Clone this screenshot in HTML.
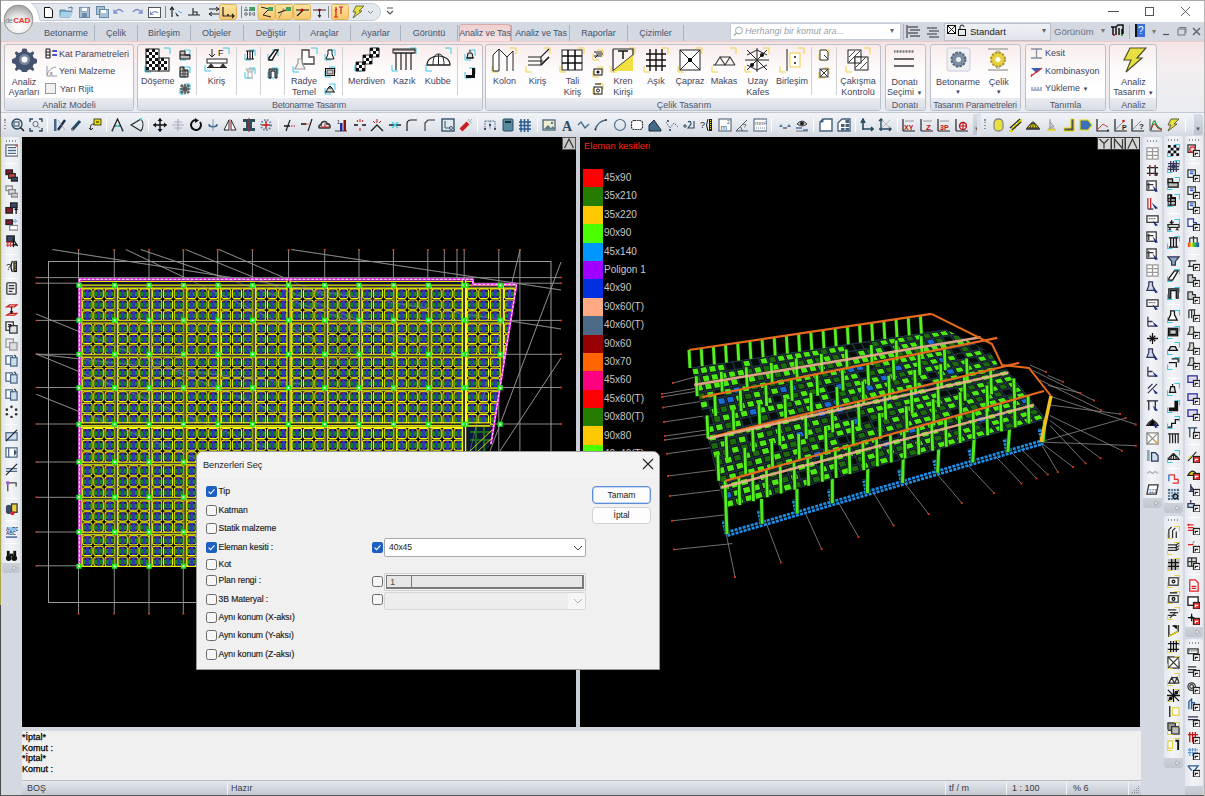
<!DOCTYPE html>
<html><head><meta charset="utf-8">
<style>
*{box-sizing:border-box;margin:0;padding:0}
html,body{width:1205px;height:796px;overflow:hidden;background:#d3d8e1;font-family:"Liberation Sans",sans-serif;font-size:11px;color:#3b3b58}
.a{position:absolute}
#topstrip{left:0;top:0;width:1205px;height:1px;background:#a8a8a8}
#title{left:0;top:1px;width:1205px;height:21px;background:#fff}
#tabs{left:0;top:22px;width:1205px;height:19px;background:#d3d8e1}
#ribbon{left:0;top:41px;width:1205px;height:72px;background:linear-gradient(#f6e4e4,#f4eef0 35%,#e9ecf1);border-top:1px solid #efc9c9;border-bottom:1px solid #c4c9d1}
#tbrow{left:0;top:113px;width:1205px;height:24px;background:linear-gradient(#f1f3f7,#e2e6ec 60%,#d3d8e0)}
#vpL{left:22px;top:137px;width:554px;height:590px;background:#000;overflow:hidden}
#split{left:576px;top:137px;width:4px;height:590px;background:#c9ced7}
#vpR{left:580px;top:137px;width:560px;height:590px;background:#000;overflow:hidden}
#cmd{left:22px;top:731px;width:1119px;height:49px;background:#f0f0f0;font-size:9px;color:#000;line-height:10.6px;padding-top:1px;padding-left:0px;-webkit-text-stroke:0.25px #000}
#status{left:22px;top:780px;width:1119px;height:15px;background:linear-gradient(#e4e7ed,#c3c8d0);border-top:1px solid #b7bcc4;font-size:10px;color:#333}
#leftborder{left:0;top:0;width:1px;height:796px;background:linear-gradient(#8a8a8a 0 137px,#aaa848 137px 605px,#4a4a4a 605px)}
#botborder{left:0;top:795px;width:1205px;height:1px;background:#5a5a5a}
</style></head><body>
<div class="a" id="topstrip"></div>
<div class="a" id="title"></div>
<div class="a" id="tabs"></div>
<svg class="a" style="left:3px;top:4px" width="31" height="31" viewBox="0 0 31 31"><defs><radialGradient id="lg" cx="0.5" cy="0.75" r="0.7"><stop offset="0" stop-color="#fff"/><stop offset="0.55" stop-color="#e8e8e8"/><stop offset="1" stop-color="#a8a8a8"/></radialGradient></defs><circle cx="15.5" cy="15.5" r="14.4" fill="url(#lg)" stroke="#8c8c8c" stroke-width="0.9"/><text x="2.3" y="18.6" font-family="Liberation Sans" font-size="7.2" fill="#7a7a7a" letter-spacing="-0.6">de</text><text x="10.3" y="18.8" font-family="Liberation Sans" font-weight="bold" font-size="8" fill="#e83434" letter-spacing="-0.2">CAD</text></svg>
<svg class="a" style="left:30px;top:2px" width="355" height="19" viewBox="0 0 355 19"><path d="M1.5 1.5H342a8.5 8.5 0 0 1 0 17H10C9 12 7 5 1.5 1.5Z" fill="#e4e9f0" stroke="#c4cbd6" stroke-width="1"/></svg>
<svg class="a" style="left:386px;top:7px" width="8" height="8" viewBox="0 0 8 8"><path d="M1 1H7M1 4L4 7L7 4" stroke="#555" stroke-width="1.2" fill="none"/></svg>
<svg class="a" style="left:40px;top:4px" width="345" height="16" viewBox="40 4 345 16"><defs><linearGradient id="qh" x1="0" y1="0" x2="0" y2="1"><stop offset="0" stop-color="#fde4a4"/><stop offset="1" stop-color="#f8c66a"/></linearGradient></defs>
<path d="M44.5 7.5H50L52.5 10V17.5H44.5Z" fill="#fff" stroke="#111" stroke-width="1"/>
<path d="M60 10H65L66 11H72L70 17H60Z" fill="#7aa8c8" stroke="#4a7898" stroke-width="0.8"/><path d="M61 12H73L71 17H60Z" fill="#a8d0e8"/><path d="M68 8L72 7V10" stroke="#4a7898" fill="none"/>
<rect x="79.5" y="7.5" width="10" height="10" fill="#a8c0d4" stroke="#6a8aa8"/><rect x="81.5" y="7.5" width="6" height="4" fill="#fff" stroke="#6a8aa8" stroke-width="0.6"/><rect x="82" y="13" width="5" height="4.5" fill="#6a8aa8"/>
<rect x="96.5" y="6.5" width="8" height="8" fill="#a8c0d4" stroke="#6a8aa8"/><rect x="99.5" y="9.5" width="9" height="8" fill="#a8c0d4" stroke="#6a8aa8"/><rect x="101" y="10" width="5" height="3" fill="#fff"/>
<path d="M115 12Q119 7 123 12" stroke="#7a88d0" stroke-width="1.3" fill="none"/><path d="M114 9.5V13H117.5" stroke="#7a88d0" stroke-width="1.3" fill="none"/>
<path d="M133 12Q137 7 141 12" stroke="#7a88d0" stroke-width="1.3" fill="none"/><path d="M142 9.5V13H138.5" stroke="#7a88d0" stroke-width="1.3" fill="none"/>
<rect x="148.5" y="7.5" width="12" height="10" fill="#fff" stroke="#555"/><path d="M151 14Q154 10 158 13" stroke="#7a88d0" stroke-width="1.2" fill="none"/><path d="M150.5 11.5V14.5H153.5" stroke="#7a88d0" stroke-width="1.1" fill="none"/>
<path d="M165.5 6V18" stroke="#888"/>
<path d="M172 17V8M170 10L172 7L174 10" stroke="#222" stroke-width="1.2" fill="none"/><path d="M175 12L179 16L177 16.5Z" fill="#222"/><path d="M178 11L182 13" stroke="#6af"/>
<path d="M188 15H200M193 8V15M193 12H197V15" stroke="#222" stroke-width="1.1" fill="none"/>
<path d="M209 9H219M209 14H219M216 7L219 9L216 11M212 12L209 14L212 16" stroke="#222" stroke-width="1" fill="none"/>
<rect x="219.5" y="4.5" width="17" height="15" rx="2" fill="url(#qh)" stroke="#e2b458"/><path d="M223 7V16H234M232 14L234 16L232 18" stroke="#222" stroke-width="1.2" fill="none"/><circle cx="228" cy="15" r="1" fill="#222"/>
<path d="M241.5 6V18" stroke="#888"/>
<path d="M244 10H255M244 14H255M246 7V17M250 7V17M254 7V17" stroke="#333" stroke-width="0.9" stroke-dasharray="1.5 1"/><rect x="250" y="7" width="5" height="4" fill="#40a060"/>
<rect x="258" y="4.5" width="17" height="15" rx="2" fill="url(#qh)" stroke="#e2b458"/><path d="M261 7L269 9L263 15L271 17" stroke="#222" fill="none"/><rect x="268" y="7" width="5" height="4" fill="#40a060"/>
<rect x="275.5" y="4.5" width="17" height="15" rx="2" fill="url(#qh)" stroke="#e2b458"/><path d="M278 13L286 10" stroke="#222" stroke-width="1.3"/><path d="M279 18L284 8" stroke="#555" stroke-width="0.6"/><rect x="286" y="7" width="5" height="4" fill="#40a060"/>
<rect x="293.5" y="4.5" width="17" height="15" rx="2" fill="url(#qh)" stroke="#e2b458"/><path d="M296 10H309" stroke="#333" stroke-width="1.2"/><path d="M297 16L303 10" stroke="#222" stroke-width="1.2"/><circle cx="302" cy="10" r="1.5" fill="#c00"/>
<path d="M313 10H326M319.5 10V17M318 15L319.5 17L321 15" stroke="#333" stroke-width="1.1" fill="none"/><circle cx="319.5" cy="10" r="1.3" fill="#900"/>
<path d="M328.5 6V18" stroke="#888"/>
<rect x="331.5" y="4.5" width="17" height="15" rx="2" fill="url(#qh)" stroke="#e2b458"/><path d="M336 7V17M334 17H338M341 7V14M339 7H343M335 11L337 9" stroke="#d02020" stroke-width="1.2" fill="none"/>
<path d="M356 6H364L359 11H362L353 18L356 12H353Z" fill="#e8e040" stroke="#505030" stroke-width="0.8"/>
<path d="M368 11L370.5 13.5L373 11" fill="none" stroke="#888"/>
</svg>

<svg class="a" style="left:1105px;top:4px" width="90" height="16" viewBox="0 0 90 16"><path d="M3 7.5H14" stroke="#555" stroke-width="1"/><rect x="40.5" y="3.5" width="8" height="8" fill="none" stroke="#555" stroke-width="1"/><path d="M76 3L85 12M85 3L76 12" stroke="#555" stroke-width="0.9"/></svg>


<div class="a" style="left:459px;top:23.5px;width:52px;height:18px;background:linear-gradient(#f0cfcf,#f8e4e4);border:1px solid #d9aaaa;border-bottom:none;border-radius:3px 3px 0 0"></div>
<div class="a" style="left:0;top:23.5px;height:18px;font-size:9px;color:#47526c;line-height:18px;white-space:nowrap"><span class="a" style="left:26px;width:80px;text-align:center;">Betonarme</span><span class="a" style="left:76px;width:80px;text-align:center;">Çelik</span><span class="a" style="left:124px;width:80px;text-align:center;">Birleşim</span><span class="a" style="left:176.5px;width:80px;text-align:center;">Objeler</span><span class="a" style="left:231px;width:80px;text-align:center;">Değiştir</span><span class="a" style="left:284.5px;width:80px;text-align:center;">Araçlar</span><span class="a" style="left:335.5px;width:80px;text-align:center;">Ayarlar</span><span class="a" style="left:389px;width:80px;text-align:center;">Görüntü</span><span class="a" style="left:445px;width:80px;text-align:center;letter-spacing:-0.1px;">Analiz ve Tas</span><span class="a" style="left:501px;width:80px;text-align:center;letter-spacing:-0.1px;">Analiz ve Tas</span><span class="a" style="left:558.6px;width:80px;text-align:center;">Raporlar</span><span class="a" style="left:615.6px;width:80px;text-align:center;">Çizimler</span></div>
<div class="a" style="left:94px;top:25px;width:1px;height:16px;background:#aab2be"></div>
<div class="a" style="left:137px;top:25px;width:1px;height:16px;background:#aab2be"></div>
<div class="a" style="left:190px;top:25px;width:1px;height:16px;background:#aab2be"></div>
<div class="a" style="left:243px;top:25px;width:1px;height:16px;background:#aab2be"></div>
<div class="a" style="left:299px;top:25px;width:1px;height:16px;background:#aab2be"></div>
<div class="a" style="left:350px;top:25px;width:1px;height:16px;background:#aab2be"></div>
<div class="a" style="left:400px;top:25px;width:1px;height:16px;background:#aab2be"></div>
<div class="a" style="left:457px;top:25px;width:1px;height:16px;background:#aab2be"></div>
<div class="a" style="left:511px;top:25px;width:1px;height:16px;background:#aab2be"></div>
<div class="a" style="left:569px;top:25px;width:1px;height:16px;background:#aab2be"></div>
<div class="a" style="left:627px;top:25px;width:1px;height:16px;background:#aab2be"></div>
<div class="a" style="left:683px;top:25px;width:1px;height:16px;background:#aab2be"></div>
<div class="a" style="left:730px;top:23px;width:171px;height:17px;background:#fff;border:1px solid #c6ccd6"></div>
<svg class="a" style="left:733px;top:26px" width="11" height="11" viewBox="0 0 11 11"><circle cx="6" cy="4.5" r="3.5" fill="none" stroke="#9aa" stroke-width="1"/><path d="M3.5 7L1 9.5" stroke="#9aa" stroke-width="1.2"/></svg>
<div class="a" style="left:745px;top:25px;font-size:9px;font-style:italic;color:#9aa0aa;line-height:13px">Herhangi bir komut ara...</div>
<div class="a" style="left:890px;top:26px;font-size:8px;color:#666">▾</div>
<div class="a" style="left:903px;top:24px;width:1px;height:16px;background:#aab2be"></div>
<svg class="a" style="left:906px;top:24px" width="36" height="16" viewBox="0 0 36 16"><path d="M2 3H12M4 6H14M2 9H12M4 12H14M1 1V14" stroke="#222" stroke-width="1"/><path d="M21 4H31M23 7H33M21 10H31M23 13H33" stroke="#333" stroke-width="1"/></svg>
<div class="a" style="left:944px;top:22.5px;width:107px;height:18px;background:linear-gradient(#eef1f5,#dfe3e9);border:1px solid #b9c0ca"></div>
<svg class="a" style="left:946px;top:24px" width="22" height="13" viewBox="0 0 22 13"><rect x="1.5" y="1.5" width="8" height="8" fill="#fff" stroke="#111"/><path d="M1.5 1.5L9.5 9.5M9.5 1.5L1.5 9.5" stroke="#111"/><rect x="12.5" y="5.5" width="7" height="6" fill="none" stroke="#111"/><path d="M14 5.5V3a2 2 0 0 1 4 0" stroke="#111" fill="none"/></svg>
<div class="a" style="left:970px;top:25px;font-size:9.5px;color:#1a1a1a;line-height:13px">Standart</div>
<div class="a" style="left:1042px;top:26px;font-size:8px;color:#666">▾</div>
<div class="a" style="left:1054px;top:25px;font-size:9.5px;color:#6c7486;line-height:13px">Görünüm</div>
<div class="a" style="left:1101px;top:26px;font-size:8px;color:#777">▾</div>
<svg class="a" style="left:1110px;top:24px" width="16" height="13" viewBox="0 0 16 13"><path d="M1 3H6L8 1H13V10M3 3V11M6 3V11M9 4V11M12 5V11" stroke="#111" stroke-width="1.5" fill="none"/><circle cx="4" cy="11" r="1" fill="#c00"/><circle cx="12" cy="11" r="1" fill="#0a0"/></svg>
<div class="a" style="left:1129px;top:25px;width:1px;height:14px;background:#aab2be"></div>
<div class="a" style="left:1135px;top:24px;width:10px;height:13px;background:#3a6ee0;border-left:2px solid #111"></div>
<div class="a" style="left:1138px;top:24px;font-size:10px;color:#fff;line-height:13px">?</div>
<div class="a" style="left:1152px;top:27px;font-size:8px;color:#777">▾</div>
<svg class="a" style="left:1162px;top:25px" width="40" height="14" viewBox="0 0 40 14"><path d="M1 9.5H7" stroke="#555" stroke-width="1.2"/><rect x="16" y="4" width="7" height="6" fill="none" stroke="#777"/><path d="M17 2.5H24V8" stroke="#777" fill="none"/><path d="M31 3L38 10M38 3L31 10" stroke="#666" stroke-width="1.5"/></svg>

<div class="a" id="ribbon"></div>
<div class="a" style="left:4px;top:43.5px;width:130px;height:67px;border:1px solid #bcc1c9;border-radius:3px;background:linear-gradient(#f9ecec,#fdfafa 35%,#ffffff 70%);overflow:hidden"><div class="a" style="left:0;bottom:0;width:100%;height:12px;background:linear-gradient(#e9ecf1,#d9dee6)"></div></div>
<div class="a" style="left:9.0px;top:98.5px;width:120px;text-align:center;font-size:9px;line-height:12px;color:#4e566c;">Analiz Modeli</div>
<div class="a" style="left:137px;top:43.5px;width:345.5px;height:67px;border:1px solid #bcc1c9;border-radius:3px;background:linear-gradient(#f9ecec,#fdfafa 35%,#ffffff 70%);overflow:hidden"><div class="a" style="left:0;bottom:0;width:100%;height:12px;background:linear-gradient(#e9ecf1,#d9dee6)"></div></div>
<div class="a" style="left:249px;top:98.5px;width:120px;text-align:center;font-size:9px;line-height:12px;color:#4e566c;letter-spacing:-0.25px;">Betonarme Tasarım</div>
<div class="a" style="left:485px;top:43.5px;width:396px;height:67px;border:1px solid #bcc1c9;border-radius:3px;background:linear-gradient(#f9ecec,#fdfafa 35%,#ffffff 70%);overflow:hidden"><div class="a" style="left:0;bottom:0;width:100%;height:12px;background:linear-gradient(#e9ecf1,#d9dee6)"></div></div>
<div class="a" style="left:624px;top:98.5px;width:120px;text-align:center;font-size:9px;line-height:12px;color:#4e566c;">Çelik Tasarım</div>
<div class="a" style="left:884.5px;top:43.5px;width:41.5px;height:67px;border:1px solid #bcc1c9;border-radius:3px;background:linear-gradient(#f9ecec,#fdfafa 35%,#ffffff 70%);overflow:hidden"><div class="a" style="left:0;bottom:0;width:100%;height:12px;background:linear-gradient(#e9ecf1,#d9dee6)"></div></div>
<div class="a" style="left:845px;top:98.5px;width:120px;text-align:center;font-size:9px;line-height:12px;color:#4e566c;">Donatı</div>
<div class="a" style="left:930px;top:43.5px;width:91px;height:67px;border:1px solid #bcc1c9;border-radius:3px;background:linear-gradient(#f9ecec,#fdfafa 35%,#ffffff 70%);overflow:hidden"><div class="a" style="left:0;bottom:0;width:100%;height:12px;background:linear-gradient(#e9ecf1,#d9dee6)"></div></div>
<div class="a" style="left:915px;top:98.5px;width:120px;text-align:center;font-size:9px;line-height:12px;color:#4e566c;letter-spacing:-0.25px;">Tasarım Parametreleri</div>
<div class="a" style="left:1024.5px;top:43.5px;width:81.5px;height:67px;border:1px solid #bcc1c9;border-radius:3px;background:linear-gradient(#f9ecec,#fdfafa 35%,#ffffff 70%);overflow:hidden"><div class="a" style="left:0;bottom:0;width:100%;height:12px;background:linear-gradient(#e9ecf1,#d9dee6)"></div></div>
<div class="a" style="left:1005.5px;top:98.5px;width:120px;text-align:center;font-size:9px;line-height:12px;color:#4e566c;">Tanımla</div>
<div class="a" style="left:1109px;top:43.5px;width:48px;height:67px;border:1px solid #bcc1c9;border-radius:3px;background:linear-gradient(#f9ecec,#fdfafa 35%,#ffffff 70%);overflow:hidden"><div class="a" style="left:0;bottom:0;width:100%;height:12px;background:linear-gradient(#e9ecf1,#d9dee6)"></div></div>
<div class="a" style="left:1073.5px;top:98.5px;width:120px;text-align:center;font-size:9px;line-height:12px;color:#4e566c;">Analiz</div>
<svg class="a" style="left:12px;top:47px" width="25" height="25" viewBox="0 0 25 25"><path d="M12.5 1.5l2.2 0.3 0.8 3 2.6 1.1 2.6-1.6 1.6 1.6-1.6 2.6 1.1 2.6 3 0.8 0.3 2.2-0.3 2.2-3 0.8-1.1 2.6 1.6 2.6-1.6 1.6-2.6-1.6-2.6 1.1-0.8 3-2.2 0.3-2.2-0.3-0.8-3-2.6-1.1-2.6 1.6-1.6-1.6 1.6-2.6-1.1-2.6-3-0.8-0.3-2.2 0.3-2.2 3-0.8 1.1-2.6-1.6-2.6 1.6-1.6 2.6 1.6 2.6-1.1 0.8-3z" fill="#44546e"/><circle cx="12.5" cy="12.5" r="5.5" fill="#7888a0"/><circle cx="12.5" cy="12.5" r="3" fill="#fff"/></svg>
<div class="a" style="left:-16px;top:75.5px;width:80px;text-align:center;font-size:9px;line-height:12px;color:#40445e;white-space:nowrap">Analiz</div>
<div class="a" style="left:-16px;top:86px;width:80px;text-align:center;font-size:9px;line-height:12px;color:#40445e;white-space:nowrap">Ayarları</div>
<svg class="a" style="left:45px;top:48px" width="13" height="11" viewBox="0 0 13 11"><path d="M1 1H5V10H1ZM1 4H5M1 7H5M7 3H12M7 7H12" stroke="#111" stroke-width="1" fill="none"/><path d="M8 3H12M8 7H12" stroke="#3040ff" stroke-width="1.6"/></svg>
<div class="a" style="left:59px;top:47.6px;font-size:9px;line-height:12px;color:#40445e;white-space:nowrap">Kat Parametreleri</div>
<svg class="a" style="left:45px;top:65px" width="13" height="12" viewBox="0 0 13 12"><path d="M2 1V11H12" stroke="#8899aa" fill="none"/><path d="M2 10C4 4 7 3 11 2" stroke="#8899aa" fill="none"/><text x="5" y="10" font-size="6" fill="#556">ε</text></svg>
<div class="a" style="left:59px;top:65.2px;font-size:9px;line-height:12px;color:#40445e;white-space:nowrap">Yeni Malzeme</div>
<svg class="a" style="left:45px;top:83px" width="11" height="11" viewBox="0 0 11 11"><rect x="0.5" y="0.5" width="10" height="10" fill="#f0f0f0" stroke="#999"/></svg>
<div class="a" style="left:60px;top:82.5px;font-size:9px;line-height:12px;color:#40445e;white-space:nowrap">Yarı Rijit</div>
<svg class="a" style="left:144px;top:47px" width="27" height="26" viewBox="0 0 27 26"><path d="M20 1H26V7M1 19V25H7" stroke="#3cc8e8" stroke-width="1" fill="none"/><g fill="#111"><rect x="2" y="2" width="13" height="22" fill="#fff" stroke="#111"/><rect x="15" y="11" width="10" height="13" fill="#fff" stroke="#111"/></g><path d="M2 2h3v3h-3zM8 2h3v3h-3zM5 5h3v3h-3zM11 5h3v3h-3zM2 8h3v3h-3zM8 8h3v3h-3zM5 11h3v3h-3zM11 11h3v3h-3zM17 11h3v3h-3zM2 14h3v3h-3zM8 14h3v3h-3zM14 14h3v3h-3zM20 14h3v3h-3zM5 17h3v3h-3zM11 17h3v3h-3zM17 17h3v3h-3zM2 20h3v3h-3zM8 20h3v3h-3zM14 20h3v3h-3zM20 20h3v3h-3z" fill="#111"/></svg>
<div class="a" style="left:117.80000000000001px;top:75.3px;width:80px;text-align:center;font-size:9px;line-height:12px;color:#40445e;white-space:nowrap">Döşeme</div>
<svg class="a" style="left:179px;top:49px" width="12" height="12" viewBox="0 0 12 12"><path d="M5 1H11V7M1 5V11H7" stroke="#3cc8e8" stroke-width="1" fill="none"/><path d="M1 2H6V6H11V10H1Z" fill="#bbb" stroke="#111"/><path d="M1 6H11" stroke="#111"/></svg>
<svg class="a" style="left:179px;top:66px" width="12" height="12" viewBox="0 0 12 12"><path d="M5 1H11V7M1 5V11H7" stroke="#3cc8e8" stroke-width="1" fill="none"/><path d="M1 1H5V4H9V11H1Z" fill="#ccc" stroke="#111"/><path d="M1 5H9M1 8H9M4 1V11M6 4V11" stroke="#111" stroke-width="0.7"/></svg>
<svg class="a" style="left:179px;top:83px" width="12" height="12" viewBox="0 0 12 12"><path d="M5 1H11V7M1 5V11H7" stroke="#3cc8e8" stroke-width="1" fill="none"/><path d="M1 3H11M1 6H11M1 9H11M3 1V11M6 1V11M9 1V11" stroke="#111" stroke-width="0.8"/><rect x="4" y="4" width="4" height="4" fill="#556"/></svg>
<div class="a" style="left:195.5px;top:47px;width:1px;height:48px;background:#cdd1d8"></div>
<svg class="a" style="left:204px;top:47px" width="26" height="25" viewBox="0 0 26 25"><path d="M19 1H25V7M1 18V24H7" stroke="#3cc8e8" stroke-width="1" fill="none"/><path d="M8 2V10M5 7L8 10L11 7" stroke="#222" fill="none"/><text x="14" y="9" font-size="9" fill="#222" font-family="Liberation Sans">F</text><rect x="3" y="12" width="20" height="4" fill="#fff" stroke="#222"/><path d="M7 16L4 20H10ZM19 16L16 20H22Z" fill="#333"/><path d="M3 20.5H23" stroke="#222"/></svg>
<div class="a" style="left:176.6px;top:75px;width:80px;text-align:center;font-size:9px;line-height:12px;color:#40445e;white-space:nowrap">Kiriş</div>
<div class="a" style="left:236px;top:47px;width:1px;height:48px;background:#cdd1d8"></div>
<svg class="a" style="left:243.5px;top:49px" width="12" height="12" viewBox="0 0 12 12"><path d="M5 1H11V7M1 5V11H7" stroke="#3cc8e8" stroke-width="1" fill="none"/><path d="M2 2H10M2 10H10M3.5 2V10M6 2V10M8.5 2V10" stroke="#111" stroke-width="1"/></svg>
<svg class="a" style="left:243.5px;top:67px" width="12" height="12" viewBox="0 0 12 12"><path d="M5 1H11V7M1 5V11H7" stroke="#3cc8e8" stroke-width="1" fill="none"/><path d="M2 2H10L8 5H4ZM4 5V11M8 5V11M3 11H9" stroke="#aaa" stroke-width="1" fill="#ddd"/></svg>
<div class="a" style="left:260px;top:47px;width:1px;height:48px;background:#cdd1d8"></div>
<svg class="a" style="left:267px;top:49px" width="12" height="12" viewBox="0 0 12 12"><path d="M5 1H11V7M1 5V11H7" stroke="#3cc8e8" stroke-width="1" fill="none"/><path d="M2 9L8 1H11L5 11H2Z" fill="#fff" stroke="#111" stroke-width="1.4"/></svg>
<svg class="a" style="left:267px;top:67px" width="12" height="12" viewBox="0 0 12 12"><path d="M5 1H11V7M1 5V11H7" stroke="#3cc8e8" stroke-width="1" fill="none"/><path d="M2 11V2H10V11H8V4H4V11Z" fill="#8ab" stroke="#111" stroke-width="1"/></svg>
<div class="a" style="left:284px;top:47px;width:1px;height:48px;background:#cdd1d8"></div>
<svg class="a" style="left:292px;top:47px" width="26" height="26" viewBox="0 0 26 26"><path d="M19 1H25V7M1 19V25H7" stroke="#3cc8e8" stroke-width="1" fill="none"/><path d="M10 3H17V10H22V17H10Z" fill="#fff" stroke="#444" stroke-width="1.3"/><path d="M6 12H10V16L13 22H3L6 16Z" fill="#f4f4f4" stroke="#999" stroke-width="1.2"/></svg>
<div class="a" style="left:264px;top:75px;width:80px;text-align:center;font-size:9px;line-height:12px;color:#40445e;white-space:nowrap">Radye</div>
<div class="a" style="left:264px;top:85.8px;width:80px;text-align:center;font-size:9px;line-height:12px;color:#40445e;white-space:nowrap">Temel</div>
<svg class="a" style="left:324px;top:49px" width="12" height="12" viewBox="0 0 12 12"><path d="M5 1H11V7M1 5V11H7" stroke="#3cc8e8" stroke-width="1" fill="none"/><path d="M4 1H8V5L10 10H2L4 5Z" fill="#fff" stroke="#111"/></svg>
<svg class="a" style="left:324px;top:66px" width="12" height="12" viewBox="0 0 12 12"><path d="M5 1H11V7M1 5V11H7" stroke="#3cc8e8" stroke-width="1" fill="none"/><rect x="1.5" y="2.5" width="9" height="7" fill="#fff" stroke="#111"/><rect x="3" y="4" width="6" height="4" fill="#ccc" stroke="#111" stroke-width="0.7"/></svg>
<svg class="a" style="left:324px;top:83px" width="12" height="12" viewBox="0 0 12 12"><path d="M5 1H11V7M1 5V11H7" stroke="#3cc8e8" stroke-width="1" fill="none"/><path d="M1 9H11M2 9L4 5H8L10 9M4 5L6 3L8 5" stroke="#111" fill="#ddd"/></svg>
<div class="a" style="left:342px;top:47px;width:1px;height:48px;background:#cdd1d8"></div>
<svg class="a" style="left:354px;top:47px" width="26" height="25" viewBox="0 0 26 25"><path d="M19 1H25V7M1 18V24H7" stroke="#3cc8e8" stroke-width="1" fill="none"/><path d="M2 15h9v9h-9zM9 8h9v9h-9zM16 1h9v9h-9z" fill="#fff" stroke="#111" stroke-width="0.8"/><path d="M2 15h3v3h-3zM2 21h3v3h-3zM5 18h3v3h-3zM8 15h3v3h-3zM8 21h3v3h-3zM9 8h3v3h-3zM9 14h3v3h-3zM12 11h3v3h-3zM15 8h3v3h-3zM15 14h3v3h-3zM16 1h3v3h-3zM16 7h3v3h-3zM19 4h3v3h-3zM22 1h3v3h-3zM22 7h3v3h-3z" fill="#111"/></svg>
<div class="a" style="left:326.6px;top:75px;width:80px;text-align:center;font-size:9px;line-height:12px;color:#40445e;white-space:nowrap">Merdiven</div>
<svg class="a" style="left:391px;top:47px" width="26" height="25" viewBox="0 0 26 25"><path d="M19 1H25V7M1 18V24H7" stroke="#3cc8e8" stroke-width="1" fill="none"/><path d="M2 3H24M3 6H23M5 6V23M10 6V23M15 6V23M20 6V23" stroke="#222" stroke-width="1.2" fill="none"/><rect x="2" y="2" width="22" height="4" fill="none" stroke="#222"/></svg>
<div class="a" style="left:364.3px;top:75px;width:80px;text-align:center;font-size:9px;line-height:12px;color:#40445e;white-space:nowrap">Kazık</div>
<svg class="a" style="left:425px;top:47px" width="27" height="25" viewBox="0 0 27 25"><path d="M20 1H26V7M1 18V24H7" stroke="#3cc8e8" stroke-width="1" fill="none"/><path d="M2 18C2 6 25 6 25 18Z" fill="#fff" stroke="#222" stroke-width="1.2"/><path d="M8 18C8 10 10 7 13.5 7C17 7 19 10 19 18M13.5 7V18M2 18H25" stroke="#222" fill="none"/></svg>
<div class="a" style="left:397.7px;top:75px;width:80px;text-align:center;font-size:9px;line-height:12px;color:#40445e;white-space:nowrap">Kubbe</div>
<div class="a" style="left:457px;top:47px;width:1px;height:48px;background:#cdd1d8"></div>
<svg class="a" style="left:464px;top:49px" width="12" height="12" viewBox="0 0 12 12"><path d="M5 1H11V7M1 5V11H7" stroke="#3cc8e8" stroke-width="1" fill="none"/><path d="M6 1V3M3 9L4 4H8L9 9ZM2 9H10" stroke="#111" fill="#ddd"/></svg>
<svg class="a" style="left:464px;top:67px" width="12" height="12" viewBox="0 0 12 12"><path d="M5 1H11V7M1 5V11H7" stroke="#3cc8e8" stroke-width="1" fill="none"/><path d="M8 1V8H2V11H11V1Z" fill="#111"/></svg>
<svg class="a" style="left:491px;top:47px" width="26" height="26" viewBox="0 0 26 26"><path d="M19 1H25V7M1 19V25H7" stroke="#f0d040" stroke-width="1" fill="none"/><path d="M2 8L8 2V24H2ZM8 2L16 10V24M16 10L22 4V24" stroke="#222" stroke-width="1" fill="#fff"/></svg>
<div class="a" style="left:464.4px;top:75px;width:80px;text-align:center;font-size:9px;line-height:12px;color:#40445e;white-space:nowrap">Kolon</div>
<svg class="a" style="left:525px;top:47px" width="26" height="26" viewBox="0 0 26 26"><path d="M19 1H25V7M1 19V25H7" stroke="#f0d040" stroke-width="1" fill="none"/><path d="M3 10H16L24 2M3 18H16L24 10M16 10V18M3 14H18" stroke="#222" stroke-width="1.2" fill="none"/><path d="M16 18L24 10" stroke="#222" stroke-width="1.5"/></svg>
<div class="a" style="left:497.5px;top:75px;width:80px;text-align:center;font-size:9px;line-height:12px;color:#40445e;white-space:nowrap">Kiriş</div>
<svg class="a" style="left:559px;top:47px" width="26" height="26" viewBox="0 0 26 26"><path d="M19 1H25V7M1 19V25H7" stroke="#f0d040" stroke-width="1" fill="none"/><rect x="3" y="3" width="20" height="20" fill="#fff" stroke="#222"/><path d="M3 9H23M3 16H23M9 3V23M16 3V23" stroke="#111" stroke-width="1.6"/></svg>
<div class="a" style="left:532.4px;top:75px;width:80px;text-align:center;font-size:9px;line-height:12px;color:#40445e;white-space:nowrap">Tali</div>
<div class="a" style="left:532.4px;top:86px;width:80px;text-align:center;font-size:9px;line-height:12px;color:#40445e;white-space:nowrap">Kiriş</div>
<svg class="a" style="left:592px;top:49px" width="12" height="12" viewBox="0 0 12 12"><path d="M5 1H11V7M1 5V11H7" stroke="#f0d040" stroke-width="1" fill="none"/><path d="M2 3H10M4 5H11M2 7H10" stroke="#222" stroke-width="1"/><path d="M3 9L6 6" stroke="#222"/></svg>
<svg class="a" style="left:592px;top:66px" width="12" height="12" viewBox="0 0 12 12"><path d="M5 1H11V7M1 5V11H7" stroke="#f0d040" stroke-width="1" fill="none"/><rect x="2" y="3" width="8" height="6" fill="none" stroke="#111"/><circle cx="6" cy="6" r="1.5" fill="#111"/></svg>
<svg class="a" style="left:592px;top:83px" width="12" height="12" viewBox="0 0 12 12"><path d="M5 1H11V7M1 5V11H7" stroke="#f0d040" stroke-width="1" fill="none"/><rect x="2" y="4" width="8" height="7" fill="none" stroke="#111"/><circle cx="6" cy="7.5" r="1.5" fill="none" stroke="#111"/><path d="M3 1H9" stroke="#111"/></svg>
<svg class="a" style="left:610px;top:47px" width="26" height="26" viewBox="0 0 26 26"><path d="M19 1H25V7M1 19V25H7" stroke="#f0d040" stroke-width="1" fill="none"/><path d="M3 2V24M3 24L23 8V2H3" stroke="#222" stroke-width="1.2" fill="none"/><path d="M3 24L23 8V24Z" fill="#f0e040"/><path d="M8 4H18M13 4V12" stroke="#111" stroke-width="1.5"/></svg>
<div class="a" style="left:583px;top:75px;width:80px;text-align:center;font-size:9px;line-height:12px;color:#40445e;white-space:nowrap">Kren</div>
<div class="a" style="left:583px;top:86px;width:80px;text-align:center;font-size:9px;line-height:12px;color:#40445e;white-space:nowrap">Kirişi</div>
<svg class="a" style="left:643px;top:47px" width="26" height="26" viewBox="0 0 26 26"><path d="M19 1H25V7M1 19V25H7" stroke="#f0d040" stroke-width="1" fill="none"/><path d="M7 2V24M13 2V24M19 2V24M3 7H23M3 13H23M3 19H23" stroke="#111" stroke-width="1.4"/></svg>
<div class="a" style="left:616px;top:75px;width:80px;text-align:center;font-size:9px;line-height:12px;color:#40445e;white-space:nowrap">Aşık</div>
<svg class="a" style="left:677px;top:47px" width="26" height="26" viewBox="0 0 26 26"><path d="M19 1H25V7M1 19V25H7" stroke="#f0d040" stroke-width="1" fill="none"/><rect x="3" y="3" width="20" height="20" fill="#fff" stroke="#222"/><path d="M3 3L23 23M23 3L3 23" stroke="#222"/><rect x="11" y="11" width="4" height="4" fill="#111"/></svg>
<div class="a" style="left:650px;top:75px;width:80px;text-align:center;font-size:9px;line-height:12px;color:#40445e;white-space:nowrap">Çapraz</div>
<svg class="a" style="left:711px;top:47px" width="26" height="26" viewBox="0 0 26 26"><path d="M19 1H25V7M1 19V25H7" stroke="#f0d040" stroke-width="1" fill="none"/><path d="M2 18H24M4 18L9 10L14 18L19 10L24 18M9 10H19" stroke="#333" stroke-width="1.1" fill="none"/></svg>
<div class="a" style="left:684px;top:75px;width:80px;text-align:center;font-size:9px;line-height:12px;color:#40445e;white-space:nowrap">Makas</div>
<svg class="a" style="left:744px;top:47px" width="26" height="26" viewBox="0 0 26 26"><path d="M19 1H25V7M1 19V25H7" stroke="#f0d040" stroke-width="1" fill="none"/><path d="M3 3L23 23M23 3L3 23M13 1V25M1 13H25M3 8L13 3L23 8M3 18L13 23L23 18" stroke="#222" stroke-width="1" fill="none"/><circle cx="8" cy="18" r="2" fill="#111"/><circle cx="18" cy="8" r="2" fill="#111"/></svg>
<div class="a" style="left:717.8px;top:75px;width:80px;text-align:center;font-size:9px;line-height:12px;color:#40445e;white-space:nowrap">Uzay</div>
<div class="a" style="left:717.8px;top:86px;width:80px;text-align:center;font-size:9px;line-height:12px;color:#40445e;white-space:nowrap">Kafes</div>
<svg class="a" style="left:779px;top:47px" width="26" height="26" viewBox="0 0 26 26"><path d="M19 1H25V7M1 19V25H7" stroke="#f0d040" stroke-width="1" fill="none"/><path d="M8 2V24" stroke="#222"/><rect x="11" y="6" width="10" height="14" fill="#fff" stroke="#f0d040" stroke-width="1"/><circle cx="16" cy="10" r="1" fill="#111"/><circle cx="16" cy="16" r="1" fill="#111"/></svg>
<div class="a" style="left:752px;top:75px;width:80px;text-align:center;font-size:9px;line-height:12px;color:#40445e;white-space:nowrap">Birleşim</div>
<div class="a" style="left:811px;top:47px;width:1px;height:48px;background:#cdd1d8"></div>
<svg class="a" style="left:818px;top:49px" width="12" height="12" viewBox="0 0 12 12"><path d="M5 1H11V7M1 5V11H7" stroke="#f0d040" stroke-width="1" fill="none"/><path d="M2 1H8L10 3V11H2Z" fill="#fff" stroke="#333"/><path d="M6 6L10 10" stroke="#333"/></svg>
<svg class="a" style="left:818px;top:67px" width="12" height="12" viewBox="0 0 12 12"><path d="M5 1H11V7M1 5V11H7" stroke="#f0d040" stroke-width="1" fill="none"/><rect x="2" y="2" width="8" height="8" fill="#fff" stroke="#333"/><path d="M2 2L10 10M10 2L2 10" stroke="#333"/></svg>
<div class="a" style="left:835.5px;top:47px;width:1px;height:48px;background:#cdd1d8"></div>
<svg class="a" style="left:845px;top:47px" width="26" height="26" viewBox="0 0 26 26"><path d="M19 1H25V7M1 19V25H7" stroke="#f0d040" stroke-width="1" fill="none"/><rect x="3" y="3" width="13" height="13" fill="#fff" stroke="#222"/><rect x="10" y="10" width="13" height="13" fill="#fff" stroke="#222"/><path d="M4 10L10 4M4 15L15 4M10 21L21 10M15 22L22 15" stroke="#444"/><rect x="10" y="10" width="6" height="6" fill="#fff" stroke="#222"/></svg>
<div class="a" style="left:818px;top:75px;width:80px;text-align:center;font-size:9px;line-height:12px;color:#40445e;white-space:nowrap">Çakışma</div>
<div class="a" style="left:818px;top:86px;width:80px;text-align:center;font-size:9px;line-height:12px;color:#40445e;white-space:nowrap">Kontrolü</div>
<svg class="a" style="left:893px;top:48px" width="22" height="22" viewBox="0 0 22 22"><path d="M1 3.5H21" stroke="#777" stroke-width="2.6" stroke-dasharray="1 0.5"/><path d="M1 11H21M1 18H21" stroke="#6a6a6a" stroke-width="2"/></svg>
<div class="a" style="left:864.8px;top:76px;width:80px;text-align:center;font-size:9px;line-height:12px;color:#40445e;white-space:nowrap">Donatı</div>
<div class="a" style="left:864.8px;top:85.7px;width:80px;text-align:center;font-size:9px;line-height:12px;color:#40445e;white-space:nowrap">Seçimi <span style="font-size:6px">▼</span></div>
<svg class="a" style="left:946px;top:47px" width="25" height="25" viewBox="0 0 25 25"><rect x="1" y="1" width="23" height="23" rx="2" fill="#eef0f2" stroke="#ccd"/><circle cx="12.5" cy="12.5" r="7" fill="#7a8ea4" stroke="#556677" stroke-width="2" stroke-dasharray="2.5 1.2"/><circle cx="12.5" cy="12.5" r="2.5" fill="#eee"/></svg>
<div class="a" style="left:918px;top:76px;width:80px;text-align:center;font-size:9px;line-height:12px;color:#40445e;white-space:nowrap">Betonarme</div>
<div class="a" style="left:918px;top:85px;width:80px;text-align:center;font-size:9px;line-height:12px;color:#40445e;white-space:nowrap"><span style="font-size:6px">▼</span></div>
<svg class="a" style="left:986px;top:47px" width="24" height="25" viewBox="0 0 24 25"><path d="M2 2H22M2 23H22" stroke="#bbb" stroke-width="2"/><path d="M12 2V23" stroke="#ccc" stroke-width="4"/><circle cx="12" cy="12.5" r="7" fill="#e8d040" stroke="#b09820" stroke-width="2" stroke-dasharray="2.5 1.2"/><circle cx="12" cy="12.5" r="2.5" fill="#fff"/></svg>
<div class="a" style="left:958.7px;top:76px;width:80px;text-align:center;font-size:9px;line-height:12px;color:#40445e;white-space:nowrap">Çelik</div>
<div class="a" style="left:958.7px;top:85px;width:80px;text-align:center;font-size:9px;line-height:12px;color:#40445e;white-space:nowrap"><span style="font-size:6px">▼</span></div>
<svg class="a" style="left:1030px;top:48px" width="13" height="11" viewBox="0 0 13 11"><path d="M1 1H12M1 10H12M6.5 1V10" stroke="#8090a0" stroke-width="1.3"/></svg>
<div class="a" style="left:1045px;top:47px;font-size:9px;line-height:12px;color:#40445e;white-space:nowrap">Kesit</div>
<svg class="a" style="left:1030px;top:66px" width="13" height="11" viewBox="0 0 13 11"><path d="M1 2H12L6.5 7Z" fill="#3060c0"/><path d="M1 10L12 2" stroke="#e02020" stroke-width="1.2"/><path d="M2 8L1 11" stroke="#e02020"/></svg>
<div class="a" style="left:1045px;top:65px;font-size:9px;line-height:12px;color:#40445e;white-space:nowrap">Kombinasyon</div>
<svg class="a" style="left:1030px;top:84px" width="13" height="8" viewBox="0 0 13 8"><path d="M1 6H12" stroke="#5070a0" stroke-width="1"/><path d="M2 3V5M5 3V5M8 3V5M11 3V5" stroke="#5070a0" stroke-width="1"/></svg>
<div class="a" style="left:1045px;top:82px;font-size:9px;line-height:12px;color:#40445e;white-space:nowrap">Yükleme <span style="font-size:6px">▼</span></div>
<svg class="a" style="left:1120px;top:47px" width="27" height="26" viewBox="0 0 27 26"><path d="M10 1H26L17 11H22L6 25L11 13H4Z" fill="#e8e040" stroke="#505030" stroke-width="1.2"/></svg>
<div class="a" style="left:1093.5px;top:76px;width:80px;text-align:center;font-size:9px;line-height:12px;color:#40445e;white-space:nowrap">Analiz</div>
<div class="a" style="left:1093.5px;top:86px;width:80px;text-align:center;font-size:9px;line-height:12px;color:#40445e;white-space:nowrap">Tasarım <span style="font-size:6px">▼</span></div>
<div class="a" id="tbrow"></div>
<svg class="a" style="left:11px;top:118px" width="14" height="14" viewBox="0 0 14 14"><circle cx="6" cy="6" r="5" fill="none" stroke="#2a4a60" stroke-width="1.3"/><rect x="3" y="4" width="5" height="4" fill="none" stroke="#2a4a60"/><path d="M9.5 9.5L13 13" stroke="#1e2a38" stroke-width="1.6"/></svg>
<svg class="a" style="left:28.5px;top:118px" width="14" height="14" viewBox="0 0 14 14"><path d="M1 4V1H4M10 1H13V4M13 10V13H10M4 13H1V10" stroke="#2a4a60" stroke-width="1.4" fill="none"/><circle cx="6.5" cy="6" r="2.6" fill="none" stroke="#667" /><path d="M8.5 8L10.5 10" stroke="#667"/></svg>
<div class="a" style="left:46.5px;top:118px;width:1px;height:14px;background:#c2c7cf;border-right:1px solid #fff"></div>
<svg class="a" style="left:53px;top:118px" width="14" height="14" viewBox="0 0 14 14"><rect x="1" y="1" width="2.5" height="12" fill="#446688"/><path d="M5 12L12 2" stroke="#1a3050" stroke-width="2.4"/><path d="M5 2L12 12" stroke="#99a" stroke-width="0.7"/></svg>
<svg class="a" style="left:70px;top:118px" width="14" height="14" viewBox="0 0 14 14"><path d="M2 12L10 3" stroke="#24486a" stroke-width="3"/><path d="M1.5 12.5L3 11" stroke="#888" stroke-width="1.2"/></svg>
<svg class="a" style="left:88px;top:118px" width="14" height="14" viewBox="0 0 14 14"><rect x="6" y="1" width="7" height="6" fill="#e8e000" stroke="#222" stroke-width="0.8"/><path d="M8 4H11" stroke="#111"/><path d="M6 6C2 6 2 9 3 12M1 10L3 12L5 10" stroke="#222" fill="none"/></svg>
<div class="a" style="left:105.5px;top:118px;width:1px;height:14px;background:#c2c7cf;border-right:1px solid #fff"></div>
<svg class="a" style="left:111px;top:118px" width="14" height="14" viewBox="0 0 14 14"><path d="M1 13L6.5 1L12 13" stroke="#222" stroke-width="1.3" fill="none"/><path d="M3 8H10" stroke="#222"/><circle cx="6.5" cy="8" r="1.2" fill="#2ee"/><circle cx="1.5" cy="12.5" r="1" fill="#355"/><circle cx="11.5" cy="12.5" r="1" fill="#355"/></svg>
<svg class="a" style="left:129.5px;top:118px" width="14" height="14" viewBox="0 0 14 14"><path d="M1 7L11 1C14 5 13 10 11 13Z" stroke="#222" stroke-width="1.1" fill="none"/><circle cx="11" cy="1.5" r="1" fill="#2ee"/></svg>
<div class="a" style="left:148.0px;top:118px;width:1px;height:14px;background:#c2c7cf;border-right:1px solid #fff"></div>
<svg class="a" style="left:153px;top:118px" width="14" height="14" viewBox="0 0 14 14"><path d="M7 0.5V13.5M0.5 7H13.5" stroke="#111" stroke-width="1.4"/><path d="M7 0L4.5 3H9.5ZM7 14L4.5 11H9.5ZM0 7L3 4.5V9.5ZM14 7L11 4.5V9.5Z" fill="#111"/></svg>
<svg class="a" style="left:171px;top:118px" width="14" height="14" viewBox="0 0 14 14"><path d="M7 1V13M1 7H13M3 4H11M3 10H11" stroke="#aab" stroke-width="1.2"/></svg>
<svg class="a" style="left:188.5px;top:118px" width="14" height="14" viewBox="0 0 14 14"><path d="M11 4A5 5 0 1 1 7 2" stroke="#111" stroke-width="2" fill="none"/><path d="M6 0L10 2.5L6 5Z" fill="#111"/></svg>
<svg class="a" style="left:206px;top:118px" width="14" height="14" viewBox="0 0 14 14"><path d="M7 1V13M2 8H12" stroke="#7aa0c8" stroke-width="1"/><path d="M3 6C3 10 11 10 11 6" stroke="#335577" stroke-width="1.2" fill="none"/></svg>
<svg class="a" style="left:223px;top:118px" width="14" height="14" viewBox="0 0 14 14"><path d="M6 2L1 12H6ZM8 2L13 12H8Z" fill="#fff" stroke="#222" stroke-width="1"/><path d="M7 1V13" stroke="#c88" stroke-width="1.6"/></svg>
<svg class="a" style="left:241.5px;top:118px" width="14" height="14" viewBox="0 0 14 14"><rect x="1" y="1" width="12" height="3" fill="#2a5060"/><rect x="1" y="10" width="12" height="3" fill="#2a5060"/><rect x="4" y="4" width="6" height="6" fill="#2a5060"/><path d="M7 0V14" stroke="#c81818" stroke-width="1"/></svg>
<svg class="a" style="left:258.5px;top:118px" width="14" height="14" viewBox="0 0 14 14"><circle cx="7" cy="7" r="5" fill="none" stroke="#5a8aa8" stroke-width="2" stroke-dasharray="1.5 1.5"/><path d="M7 3V11M3 7H11" stroke="#c81818" stroke-width="1.4"/></svg>
<div class="a" style="left:277.5px;top:118px;width:1px;height:14px;background:#c2c7cf;border-right:1px solid #fff"></div>
<svg class="a" style="left:283px;top:118px" width="14" height="14" viewBox="0 0 14 14"><path d="M1 8H7" stroke="#111" stroke-width="1.5"/><path d="M8 8H13" stroke="#c81818" stroke-dasharray="1.5 1"/><path d="M3 13L7 2" stroke="#222" stroke-width="1.2"/></svg>
<svg class="a" style="left:300px;top:118px" width="14" height="14" viewBox="0 0 14 14"><path d="M1 6H6" stroke="#111" stroke-width="1.5"/><path d="M6 6H9" stroke="#c81818" stroke-dasharray="1.5 1"/><path d="M8 13L12 1" stroke="#222" stroke-width="1.2"/></svg>
<svg class="a" style="left:317.5px;top:118px" width="14" height="14" viewBox="0 0 14 14"><path d="M2 10C0 10 1 6 3 7C3 3 9 2 9 6C12 5 13 10 11 10Z" fill="none" stroke="#333" stroke-width="1.6"/><path d="M2.5 9H11" stroke="#c81818"/><path d="M7 5V9" stroke="#c81818"/></svg>
<svg class="a" style="left:335px;top:118px" width="14" height="14" viewBox="0 0 14 14"><path d="M0 13H12" stroke="#777" stroke-width="1.5"/><rect x="5" y="5" width="2.5" height="8" fill="#1a2a9a"/><rect x="8.5" y="2" width="2.5" height="11" fill="#8a1010"/><text x="2" y="6" font-size="5" fill="#111">1</text></svg>
<svg class="a" style="left:353px;top:118px" width="14" height="14" viewBox="0 0 14 14"><path d="M1 7H5M9 7H13" stroke="#111" stroke-width="1.5"/><path d="M7 1V4M7 10V13M4 2L5 4M10 2L9 4" stroke="#c81818"/></svg>
<svg class="a" style="left:370px;top:118px" width="14" height="14" viewBox="0 0 14 14"><path d="M1 13L7 7L13 13" stroke="#222" stroke-width="1.4" fill="none"/><path d="M7 1V5M3 3L5 5M11 3L9 5" stroke="#c81818"/></svg>
<svg class="a" style="left:388px;top:118px" width="14" height="14" viewBox="0 0 14 14"><path d="M1 7H13" stroke="#111" stroke-width="1.4"/><path d="M4 4L10 10M10 4L4 10" stroke="#3cd0e8" stroke-width="1.4"/></svg>
<svg class="a" style="left:405px;top:118px" width="14" height="14" viewBox="0 0 14 14"><path d="M2 13V6Q2 2 6 2H12" stroke="#222" stroke-width="1.2" fill="none"/></svg>
<svg class="a" style="left:423px;top:118px" width="14" height="14" viewBox="0 0 14 14"><path d="M2 13V5L5 2H12" stroke="#333" stroke-width="1.1" fill="none"/></svg>
<svg class="a" style="left:441px;top:118px" width="14" height="14" viewBox="0 0 14 14"><rect x="1" y="1" width="12" height="12" fill="#dfe8ee" stroke="#335566" stroke-width="1.4"/><path d="M4 3V10H9" stroke="#335566" fill="none"/><circle cx="10" cy="10" r="1.5" fill="none" stroke="#335566"/></svg>
<svg class="a" style="left:459px;top:118px" width="14" height="14" viewBox="0 0 14 14"><path d="M2 12L9 5" stroke="#c82020" stroke-width="4"/><path d="M10 4L13 1M11 5L13 4M9 3L10 1" stroke="#999" stroke-width="0.8"/></svg>
<div class="a" style="left:477.0px;top:118px;width:1px;height:14px;background:#c2c7cf;border-right:1px solid #fff"></div>
<svg class="a" style="left:483px;top:118px" width="14" height="14" viewBox="0 0 14 14"><path d="M2 3H12M2 3V11M7 3V11M12 3V11" stroke="#446688" stroke-width="1" stroke-dasharray="1.5 1"/><circle cx="2" cy="11" r="1" fill="#224"/><circle cx="12" cy="11" r="1" fill="#224"/><circle cx="7" cy="7" r="1" fill="#224"/></svg>
<svg class="a" style="left:500.5px;top:118px" width="14" height="14" viewBox="0 0 14 14"><rect x="2" y="1" width="10" height="12" rx="1" fill="#5a8aa0" stroke="#2a4a60"/><rect x="4" y="3" width="6" height="2" fill="#1a3040"/></svg>
<svg class="a" style="left:517.5px;top:118px" width="14" height="14" viewBox="0 0 14 14"><path d="M1 4H13M1 7.5H13M1 11H13M3 1V14M6.5 1V14M10 1V14" stroke="#2a5a90" stroke-width="1.5"/></svg>
<div class="a" style="left:537.0px;top:118px;width:1px;height:14px;background:#c2c7cf;border-right:1px solid #fff"></div>
<svg class="a" style="left:542px;top:118px" width="14" height="14" viewBox="0 0 14 14"><rect x="1" y="2" width="12" height="10" fill="#f0ecd0" stroke="#3a5a70" stroke-width="1.2"/><path d="M2 11L6 7L9 10L11 8L13 11" fill="#5a7a90"/><circle cx="10" cy="5" r="1.2" fill="#5a7a90"/></svg>
<svg class="a" style="left:561px;top:118px" width="14" height="14" viewBox="0 0 14 14"><text x="1" y="13" font-family="Liberation Serif" font-weight="bold" font-size="14" fill="#2a4a60">A</text></svg>
<svg class="a" style="left:577px;top:118px" width="14" height="14" viewBox="0 0 14 14"><path d="M1 7L4 4L8 10L12 6" stroke="#4a6a88" stroke-width="1.4" fill="none"/></svg>
<svg class="a" style="left:594px;top:118px" width="14" height="14" viewBox="0 0 14 14"><path d="M1 12Q4 3 12 2" stroke="#4a6a88" stroke-width="1.3" fill="none"/><circle cx="1.5" cy="11.5" r="1" fill="#333"/><circle cx="12" cy="2" r="1" fill="#333"/></svg>
<svg class="a" style="left:612.5px;top:118px" width="14" height="14" viewBox="0 0 14 14"><circle cx="7" cy="7" r="5.5" fill="none" stroke="#4a6a88" stroke-width="1.2"/></svg>
<svg class="a" style="left:630px;top:118px" width="14" height="14" viewBox="0 0 14 14"><rect x="1.5" y="2.5" width="11" height="9" rx="2.5" fill="#fff" stroke="#333" stroke-width="1.2" stroke-dasharray="2 0.6"/></svg>
<svg class="a" style="left:647.5px;top:118px" width="14" height="14" viewBox="0 0 14 14"><path d="M1 13V7L6 2L13 12V13Z" fill="#406a88" stroke="#1a2a38"/></svg>
<svg class="a" style="left:665px;top:118px" width="14" height="14" viewBox="0 0 14 14"><path d="M1 4L5 10L9 5L13 9" stroke="#4a6a88" stroke-width="1" fill="none" stroke-dasharray="1.5 1"/><circle cx="5" cy="12" r="1" fill="#335"/><circle cx="3" cy="3" r="1" fill="#335"/></svg>
<svg class="a" style="left:682px;top:118px" width="14" height="14" viewBox="0 0 14 14"><path d="M1 8H5M3 6V10" stroke="#2a4a60" stroke-width="1"/><path d="M6 4Q9 2 9 6L6 10H10M12 3V10H9" stroke="#2a4a60" stroke-width="1.1" fill="none"/></svg>
<svg class="a" style="left:700px;top:118px" width="14" height="14" viewBox="0 0 14 14"><text x="0" y="10" font-size="9" fill="#222">?</text><path d="M8 1Q5 7 8 13" stroke="#111" fill="none"/><rect x="9" y="1" width="3" height="12" fill="#222"/><path d="M10.5 2V12" stroke="#e8d800" stroke-dasharray="1 1"/></svg>
<svg class="a" style="left:717.5px;top:118px" width="14" height="14" viewBox="0 0 14 14"><rect x="1" y="1" width="12" height="12" fill="#fff" stroke="#607080" stroke-width="1.2"/><text x="2.5" y="11.5" font-size="8" fill="#405060">m</text><text x="9" y="6" font-size="5" fill="#405060">2</text></svg>
<svg class="a" style="left:735px;top:118px" width="14" height="14" viewBox="0 0 14 14"><path d="M1 13L12 2M1 13H13" stroke="#4a5a6a" stroke-width="1"/><path d="M7 13A6 6 0 0 0 5.5 9" stroke="#4a5a6a" fill="none"/><text x="8" y="10" font-size="6" fill="#333">?</text></svg>
<svg class="a" style="left:753px;top:118px" width="14" height="14" viewBox="0 0 14 14"><rect x="1" y="1" width="13" height="12" fill="#fff" stroke="#607080" stroke-width="1.2"/><text x="2" y="7" font-size="6" fill="#405060">mm²</text><path d="M3 10H12" stroke="#5a7a90" stroke-dasharray="1 1"/></svg>
<div class="a" style="left:771.0px;top:118px;width:1px;height:14px;background:#c2c7cf;border-right:1px solid #fff"></div>
<svg class="a" style="left:777.5px;top:118px" width="14" height="14" viewBox="0 0 14 14"><path d="M1 9H5L3 6ZM9 9H13L11 6Z" fill="#4a7aa8"/><path d="M5 10H9" stroke="#222"/></svg>
<svg class="a" style="left:795px;top:118px" width="14" height="14" viewBox="0 0 14 14"><path d="M2 6Q7 0 12 6Q7 10 2 6Z" fill="#bbb" stroke="#444"/><circle cx="7" cy="5.5" r="2" fill="#222"/><path d="M1 10H7M8 12H13" stroke="#4a7aa8" stroke-width="1.5"/><path d="M1 13H13" stroke="#777"/></svg>
<div class="a" style="left:813.0px;top:118px;width:1px;height:14px;background:#c2c7cf;border-right:1px solid #fff"></div>
<svg class="a" style="left:819px;top:118px" width="14" height="14" viewBox="0 0 14 14"><path d="M1 4L4 1H13V13H1Z" fill="#fff" stroke="#44607a" stroke-width="1.4"/><path d="M1 4H4V1" stroke="#44607a" fill="#44607a"/></svg>
<svg class="a" style="left:836.5px;top:118px" width="14" height="14" viewBox="0 0 14 14"><path d="M1 5L5 1H13V13H1Z" fill="#fff" stroke="#44607a" stroke-width="1.3"/><rect x="4" y="6" width="3.5" height="3" fill="#44607a"/><rect x="8.5" y="6" width="3.5" height="3" fill="#44607a"/><rect x="4" y="10" width="3.5" height="2.5" fill="#44607a"/><rect x="8.5" y="10" width="3.5" height="2.5" fill="#44607a"/><rect x="8.5" y="2" width="3.5" height="3" fill="#44607a"/></svg>
<div class="a" style="left:855.0px;top:118px;width:1px;height:14px;background:#c2c7cf;border-right:1px solid #fff"></div>
<svg class="a" style="left:860px;top:118px" width="14" height="14" viewBox="0 0 14 14"><path d="M3 12V3M1 5L3 1L5 5M3 11H13M11 9L13 11L11 13" stroke="#2a4a60" stroke-width="1.6" fill="none"/></svg>
<svg class="a" style="left:877.5px;top:118px" width="14" height="14" viewBox="0 0 14 14"><path d="M3 1V13M1 11H13M11 9L13 11L11 13M1 3L3 1L5 3" stroke="#2a4a60" stroke-width="1.4" fill="none"/><path d="M4 2L12 10M12 2L4 10" stroke="#bbb"/></svg>
<div class="a" style="left:896.5px;top:118px;width:1px;height:14px;background:#c2c7cf;border-right:1px solid #fff"></div>
<svg class="a" style="left:902px;top:118px" width="14" height="14" viewBox="0 0 14 14"><path d="M1 13V1M1 13H13" stroke="#223" stroke-width="1.2"/><path d="M3 3H12" stroke="#999"/><text x="2" y="12" font-size="7" font-weight="bold" fill="#c01010">XY</text></svg>
<svg class="a" style="left:919.5px;top:118px" width="14" height="14" viewBox="0 0 14 14"><path d="M1 13V1M1 13H13" stroke="#223" stroke-width="1.2"/><path d="M3 3H12" stroke="#999"/><text x="6" y="12" font-size="8" font-weight="bold" fill="#c01010">Z</text></svg>
<svg class="a" style="left:937px;top:118px" width="14" height="14" viewBox="0 0 14 14"><path d="M1 13V1M1 13H13" stroke="#223" stroke-width="1.2"/><path d="M3 3H12" stroke="#999"/><text x="3" y="12" font-size="7" font-weight="bold" fill="#c01010">3P</text></svg>
<svg class="a" style="left:955px;top:118px" width="14" height="14" viewBox="0 0 14 14"><path d="M1 13V1M1 13H13" stroke="#223" stroke-width="1.2"/><circle cx="8" cy="8" r="3.5" fill="none" stroke="#c01010" stroke-width="1.3"/><path d="M8 4V12M4 8H12" stroke="#c01010"/></svg>
<svg class="a" style="left:992px;top:118px" width="14" height="14" viewBox="0 0 14 14"><rect x="2" y="1" width="9" height="12" rx="4" fill="#e8e040" stroke="#888" stroke-width="1.3"/></svg>
<svg class="a" style="left:1008px;top:118px" width="14" height="14" viewBox="0 0 14 14"><path d="M1 13L4 13L4 10L7 10L7 7L10 7L10 4L13 4L13 1" stroke="#e8d800" stroke-width="2" fill="none"/><path d="M2 10L12 1M4 12L13 4" stroke="#222" stroke-width="1.2"/></svg>
<svg class="a" style="left:1026px;top:118px" width="14" height="14" viewBox="0 0 14 14"><path d="M1 10Q7 0 13 10Z" fill="#e8d800" stroke="#222"/><path d="M4 10L6 4M7 10V3M10 10L8 4" stroke="#222" stroke-width="0.8"/><path d="M0 11H14" stroke="#222" stroke-width="1.4"/></svg>
<svg class="a" style="left:1045px;top:118px" width="14" height="14" viewBox="0 0 14 14"><path d="M5 1V11M3 11H10M5 4L9 9H5" stroke="#888" fill="none"/><path d="M2 12H11" stroke="#e8d800" stroke-width="1.5"/></svg>
<svg class="a" style="left:1062px;top:118px" width="14" height="14" viewBox="0 0 14 14"><path d="M9 1V10H2V13H12V1Z" fill="#555" stroke="#e8d800" stroke-width="1"/></svg>
<svg class="a" style="left:1079px;top:118px" width="14" height="14" viewBox="0 0 14 14"><path d="M1 2H9L13 7L9 12H1Z" fill="#3a70b8" stroke="#e8d800" stroke-width="1.2"/></svg>
<svg class="a" style="left:1096px;top:118px" width="14" height="14" viewBox="0 0 14 14"><path d="M1 1V13H13" stroke="#222" stroke-width="1.2" fill="none"/><path d="M2 11L7 6L12 9" stroke="#c81818" stroke-width="0.8" fill="none"/><circle cx="12" cy="12.5" r="1" fill="#222"/></svg>
<svg class="a" style="left:1114px;top:118px" width="14" height="14" viewBox="0 0 14 14"><path d="M1 1V13H13" stroke="#222" stroke-width="1.2" fill="none"/><path d="M2 11L10 3" stroke="#777" stroke-width="0.8"/><circle cx="9.5" cy="3" r="1.3" fill="#c81818"/><text x="8" y="12" font-size="7" font-weight="bold" fill="#222">P</text></svg>
<svg class="a" style="left:1131px;top:118px" width="14" height="14" viewBox="0 0 14 14"><path d="M1 1V13H13" stroke="#222" stroke-width="1.2" fill="none"/><path d="M2 11L10 3" stroke="#777" stroke-width="0.8"/><text x="8" y="11" font-size="8" font-weight="bold" fill="#222">?</text></svg>
<svg class="a" style="left:1149px;top:118px" width="14" height="14" viewBox="0 0 14 14"><path d="M1 1V13H13" stroke="#555" stroke-width="1" fill="none"/><path d="M2 12Q4 2 6 3Q8 10 13 11" stroke="#20a040" stroke-width="1.2" fill="none"/><path d="M2 12Q4 5 6 6Q8 11 13 12" stroke="#c81818" stroke-width="1" fill="none"/></svg>
<svg class="a" style="left:1166px;top:118px" width="14" height="14" viewBox="0 0 14 14"><path d="M5 1H13L8 6H11L2 13L5 7H2Z" fill="#e8e040" stroke="#505030" stroke-width="0.9"/></svg>
<div class="a" style="left:1185.0px;top:118px;width:1px;height:14px;background:#c2c7cf;border-right:1px solid #fff"></div>
<div class="a" style="left:4px;top:119px;width:2px;height:11px;background:repeating-linear-gradient(#8a94a2 0 1.5px,transparent 1.5px 3px)"></div>
<div class="a" style="left:984px;top:119px;width:2px;height:11px;background:repeating-linear-gradient(#8a94a2 0 1.5px,transparent 1.5px 3px)"></div>
<div class="a" style="left:973px;top:114px;width:7px;height:21px;background:linear-gradient(#d8dde5,#bcc3cd);border-radius:0 3px 3px 0"></div>
<div class="a" style="left:974px;top:126px;font-size:6px;color:#555">▼</div>
<div class="a" style="left:1194px;top:114px;width:9px;height:21px;background:linear-gradient(#d8dde5,#bcc3cd);border-radius:0 3px 3px 0"></div>
<div class="a" style="left:1195px;top:126px;font-size:6px;color:#555">▼</div>
<div class="a" style="left:977px;top:113px;width:4px;height:23px;background:#dde1e8"></div>
<div class="a" id="vpL"><svg class="a" style="left:0;top:0" width="554" height="590" viewBox="22 137 554 590">
<defs>
<symbol id="bay" viewBox="0 0 34.4 34" preserveAspectRatio="none">
<rect width="34.4" height="34" fill="#000"/>
<rect x="0" y="0.6" width="34.4" height="1.8" fill="#14142a"/>
<rect x="0.6" y="0" width="1.8" height="34" fill="#14142a"/>
<path d="M0 0.3H34.4M0 2.75H34.4M0.3 0V34M2.75 0V34" stroke="#ffff00" stroke-width="1" fill="none"/>
<path d="M0 1.5H34.4M1.5 0V34" stroke="#6a6a6a" stroke-width="0.5" fill="none"/>
<g id="sc">
<rect x="3.55" y="3.65" width="9.1" height="9.1" rx="1.8" fill="#16164e" stroke="#ffff00" stroke-width="1.0"/>
<rect x="4.2" y="6.3" width="7.8" height="4.4" fill="#168a16"/>
<rect x="6.7" y="4.3" width="2.8" height="7.9" fill="#3434b8"/>
<rect x="4.5" y="4.6" width="1.2" height="1.1" fill="#e02010"/>
</g>
<use href="#sc" x="10.8" y="0"/><use href="#sc" x="21.6" y="0"/>
<use href="#sc" x="0" y="10.6"/><use href="#sc" x="10.8" y="10.6"/><use href="#sc" x="21.6" y="10.6"/>
<use href="#sc" x="0" y="21.2"/><use href="#sc" x="10.8" y="21.2"/><use href="#sc" x="21.6" y="21.2"/>
</symbol>
<clipPath id="plc"><polygon points="79,279 473,279 473,284.3 516.5,284.3 491,444 485,451 485,566.5 79,566.5"/></clipPath>
</defs>
<path d="M78.5 249.5V614M114.3 249.5V614M149 249.5V614M183.3 249.5V614M217.7 249.5V614M252.4 249.5V614M288.6 249.5V614M324.7 249.5V614M359 249.5V614M393.4 249.5V614M427.8 249.5V614M444.3 249.5V614M457 249.5V614M464.2 249.5V614M498.8 249.5V614M519.9 249.5V614M36.5 277.6H561M36.5 283.2H561M36.5 320.4H561M36.5 354.3H561M36.5 387.5H561M36.5 424H561M36.5 462H561M36.5 497.3H561M36.5 532H561M36.5 565.8H561" stroke="#8a8a8a" stroke-width="1" fill="none"/>
<rect x="48.5" y="261.5" width="502.5" height="341" fill="none" stroke="#9a9a9a" stroke-width="1"/>
<path d="M52.4 249.5L561 329M125.8 249.5L320 342M140.8 249.5L430 348M185.6 249.5L400 337M219 249.5L340 302M291.4 249.5L561 290M36.2 314L300 422M36.2 354L300 384M36.2 354L300 462M36.2 394.3L300 500M520 250L470 451M561 262L490 451M561 358L500 451" stroke="#8a8a8a" stroke-width="0.8" fill="none"/>
<path d="M77.5 249h2v1.5h-2zM77.5 613h2v1.5h-2zM113.3 249h2v1.5h-2zM113.3 613h2v1.5h-2zM148 249h2v1.5h-2zM148 613h2v1.5h-2zM182.3 249h2v1.5h-2zM182.3 613h2v1.5h-2zM216.7 249h2v1.5h-2zM216.7 613h2v1.5h-2zM251.4 249h2v1.5h-2zM251.4 613h2v1.5h-2zM287.6 249h2v1.5h-2zM287.6 613h2v1.5h-2zM323.7 249h2v1.5h-2zM323.7 613h2v1.5h-2zM358 249h2v1.5h-2zM358 613h2v1.5h-2zM392.4 249h2v1.5h-2zM392.4 613h2v1.5h-2zM426.8 249h2v1.5h-2zM426.8 613h2v1.5h-2zM443.3 249h2v1.5h-2zM443.3 613h2v1.5h-2zM456 249h2v1.5h-2zM456 613h2v1.5h-2zM463.2 249h2v1.5h-2zM463.2 613h2v1.5h-2zM497.8 249h2v1.5h-2zM497.8 613h2v1.5h-2zM518.9 249h2v1.5h-2zM518.9 613h2v1.5h-2zM35.5 276.85h2v1.5h-2zM560 276.85h2v1.5h-2zM35.5 282.45h2v1.5h-2zM560 282.45h2v1.5h-2zM35.5 319.65h2v1.5h-2zM560 319.65h2v1.5h-2zM35.5 353.55h2v1.5h-2zM560 353.55h2v1.5h-2zM35.5 386.75h2v1.5h-2zM560 386.75h2v1.5h-2zM35.5 423.25h2v1.5h-2zM560 423.25h2v1.5h-2zM35.5 461.25h2v1.5h-2zM560 461.25h2v1.5h-2zM35.5 496.55h2v1.5h-2zM560 496.55h2v1.5h-2zM35.5 531.25h2v1.5h-2zM560 531.25h2v1.5h-2zM35.5 565.05h2v1.5h-2zM560 565.05h2v1.5h-2z" fill="#d23a10"/>
<g clip-path="url(#plc)">
<use href="#bay" x="79.0" y="285.3" width="35.6" height="35.0"/>
<use href="#bay" x="79.0" y="320.3" width="35.6" height="33.9"/>
<use href="#bay" x="79.0" y="354.2" width="35.6" height="33.6"/>
<use href="#bay" x="79.0" y="387.8" width="35.6" height="36.5"/>
<use href="#bay" x="79.0" y="424.3" width="35.6" height="37.7"/>
<use href="#bay" x="79.0" y="462.0" width="35.6" height="35.3"/>
<use href="#bay" x="79.0" y="497.3" width="35.6" height="34.7"/>
<use href="#bay" x="79.0" y="532.0" width="35.6" height="34.2"/>
<use href="#bay" x="114.6" y="285.3" width="34.5" height="35.0"/>
<use href="#bay" x="114.6" y="320.3" width="34.5" height="33.9"/>
<use href="#bay" x="114.6" y="354.2" width="34.5" height="33.6"/>
<use href="#bay" x="114.6" y="387.8" width="34.5" height="36.5"/>
<use href="#bay" x="114.6" y="424.3" width="34.5" height="37.7"/>
<use href="#bay" x="114.6" y="462.0" width="34.5" height="35.3"/>
<use href="#bay" x="114.6" y="497.3" width="34.5" height="34.7"/>
<use href="#bay" x="114.6" y="532.0" width="34.5" height="34.2"/>
<use href="#bay" x="149.1" y="285.3" width="34.4" height="35.0"/>
<use href="#bay" x="149.1" y="320.3" width="34.4" height="33.9"/>
<use href="#bay" x="149.1" y="354.2" width="34.4" height="33.6"/>
<use href="#bay" x="149.1" y="387.8" width="34.4" height="36.5"/>
<use href="#bay" x="149.1" y="424.3" width="34.4" height="37.7"/>
<use href="#bay" x="149.1" y="462.0" width="34.4" height="35.3"/>
<use href="#bay" x="149.1" y="497.3" width="34.4" height="34.7"/>
<use href="#bay" x="149.1" y="532.0" width="34.4" height="34.2"/>
<use href="#bay" x="183.5" y="285.3" width="34.5" height="35.0"/>
<use href="#bay" x="183.5" y="320.3" width="34.5" height="33.9"/>
<use href="#bay" x="183.5" y="354.2" width="34.5" height="33.6"/>
<use href="#bay" x="183.5" y="387.8" width="34.5" height="36.5"/>
<use href="#bay" x="183.5" y="424.3" width="34.5" height="37.7"/>
<use href="#bay" x="183.5" y="462.0" width="34.5" height="35.3"/>
<use href="#bay" x="183.5" y="497.3" width="34.5" height="34.7"/>
<use href="#bay" x="183.5" y="532.0" width="34.5" height="34.2"/>
<use href="#bay" x="218.0" y="285.3" width="34.5" height="35.0"/>
<use href="#bay" x="218.0" y="320.3" width="34.5" height="33.9"/>
<use href="#bay" x="218.0" y="354.2" width="34.5" height="33.6"/>
<use href="#bay" x="218.0" y="387.8" width="34.5" height="36.5"/>
<use href="#bay" x="218.0" y="424.3" width="34.5" height="37.7"/>
<use href="#bay" x="218.0" y="462.0" width="34.5" height="35.3"/>
<use href="#bay" x="218.0" y="497.3" width="34.5" height="34.7"/>
<use href="#bay" x="218.0" y="532.0" width="34.5" height="34.2"/>
<use href="#bay" x="252.5" y="285.3" width="35.9" height="35.0"/>
<use href="#bay" x="252.5" y="320.3" width="35.9" height="33.9"/>
<use href="#bay" x="252.5" y="354.2" width="35.9" height="33.6"/>
<use href="#bay" x="252.5" y="387.8" width="35.9" height="36.5"/>
<use href="#bay" x="252.5" y="424.3" width="35.9" height="37.7"/>
<use href="#bay" x="252.5" y="462.0" width="35.9" height="35.3"/>
<use href="#bay" x="252.5" y="497.3" width="35.9" height="34.7"/>
<use href="#bay" x="252.5" y="532.0" width="35.9" height="34.2"/>
<use href="#bay" x="288.4" y="285.3" width="36.2" height="35.0"/>
<use href="#bay" x="288.4" y="320.3" width="36.2" height="33.9"/>
<use href="#bay" x="288.4" y="354.2" width="36.2" height="33.6"/>
<use href="#bay" x="288.4" y="387.8" width="36.2" height="36.5"/>
<use href="#bay" x="288.4" y="424.3" width="36.2" height="37.7"/>
<use href="#bay" x="288.4" y="462.0" width="36.2" height="35.3"/>
<use href="#bay" x="288.4" y="497.3" width="36.2" height="34.7"/>
<use href="#bay" x="288.4" y="532.0" width="36.2" height="34.2"/>
<use href="#bay" x="324.6" y="285.3" width="34.4" height="35.0"/>
<use href="#bay" x="324.6" y="320.3" width="34.4" height="33.9"/>
<use href="#bay" x="324.6" y="354.2" width="34.4" height="33.6"/>
<use href="#bay" x="324.6" y="387.8" width="34.4" height="36.5"/>
<use href="#bay" x="324.6" y="424.3" width="34.4" height="37.7"/>
<use href="#bay" x="324.6" y="462.0" width="34.4" height="35.3"/>
<use href="#bay" x="324.6" y="497.3" width="34.4" height="34.7"/>
<use href="#bay" x="324.6" y="532.0" width="34.4" height="34.2"/>
<use href="#bay" x="359.0" y="285.3" width="34.6" height="35.0"/>
<use href="#bay" x="359.0" y="320.3" width="34.6" height="33.9"/>
<use href="#bay" x="359.0" y="354.2" width="34.6" height="33.6"/>
<use href="#bay" x="359.0" y="387.8" width="34.6" height="36.5"/>
<use href="#bay" x="359.0" y="424.3" width="34.6" height="37.7"/>
<use href="#bay" x="359.0" y="462.0" width="34.6" height="35.3"/>
<use href="#bay" x="359.0" y="497.3" width="34.6" height="34.7"/>
<use href="#bay" x="359.0" y="532.0" width="34.6" height="34.2"/>
<use href="#bay" x="393.6" y="285.3" width="34.7" height="35.0"/>
<use href="#bay" x="393.6" y="320.3" width="34.7" height="33.9"/>
<use href="#bay" x="393.6" y="354.2" width="34.7" height="33.6"/>
<use href="#bay" x="393.6" y="387.8" width="34.7" height="36.5"/>
<use href="#bay" x="393.6" y="424.3" width="34.7" height="37.7"/>
<use href="#bay" x="393.6" y="462.0" width="34.7" height="35.3"/>
<use href="#bay" x="393.6" y="497.3" width="34.7" height="34.7"/>
<use href="#bay" x="393.6" y="532.0" width="34.7" height="34.2"/>
<use href="#bay" x="428.3" y="285.3" width="35.2" height="35.0"/>
<use href="#bay" x="428.3" y="320.3" width="35.2" height="33.9"/>
<use href="#bay" x="428.3" y="354.2" width="35.2" height="33.6"/>
<use href="#bay" x="428.3" y="387.8" width="35.2" height="36.5"/>
<use href="#bay" x="428.3" y="424.3" width="35.2" height="37.7"/>
<use href="#bay" x="428.3" y="462.0" width="35.2" height="35.3"/>
<use href="#bay" x="428.3" y="497.3" width="35.2" height="34.7"/>
<use href="#bay" x="428.3" y="532.0" width="35.2" height="34.2"/>
<use href="#bay" x="463.5" y="285.3" width="36.7" height="35.0"/>
<use href="#bay" x="463.5" y="320.3" width="36.7" height="33.9"/>
<use href="#bay" x="463.5" y="354.2" width="36.7" height="33.6"/>
<use href="#bay" x="463.5" y="387.8" width="36.7" height="36.5"/>
<use href="#bay" x="463.5" y="424.3" width="36.7" height="37.7"/>
<use href="#bay" x="463.5" y="462.0" width="36.7" height="35.3"/>
<use href="#bay" x="463.5" y="497.3" width="36.7" height="34.7"/>
<use href="#bay" x="463.5" y="532.0" width="36.7" height="34.2"/>
<use href="#bay" x="500.2" y="285.3" width="39.8" height="35.0"/>
<use href="#bay" x="500.2" y="320.3" width="39.8" height="33.9"/>
<use href="#bay" x="500.2" y="354.2" width="39.8" height="33.6"/>
<use href="#bay" x="500.2" y="387.8" width="39.8" height="36.5"/>
<use href="#bay" x="500.2" y="424.3" width="39.8" height="37.7"/>
<use href="#bay" x="500.2" y="462.0" width="39.8" height="35.3"/>
<use href="#bay" x="500.2" y="497.3" width="39.8" height="34.7"/>
<use href="#bay" x="500.2" y="532.0" width="39.8" height="34.2"/>
<rect x="79" y="279" width="460" height="6.3" fill="#0a1030"/>
<path d="M79 281.5H540M79 285H540" stroke="#e8e800" stroke-width="1"/>
<rect x="466" y="427" width="30" height="25" fill="#0c1838"/><path d="M470 432H492M470 440H492M476 427V451M484 427V451" stroke="#1a6a1a" stroke-width="2"/><path d="M470 451L492 430M478 451L492 438" stroke="#d0d000" stroke-width="1"/>
<path d="M287 279V566.5M290 279V566.5M462.3 279V451M465.6 279V451M79 422.8H490M79 425.9H490" stroke="#ffff00" stroke-width="1.3" fill="none"/>
<path d="M288.5 279V566.5M464 279V451M79 424.3H490" stroke="#222" stroke-width="1.6" fill="none"/>
</g>
<path d="M52.4 249.5L561 329M125.8 249.5L320 342M140.8 249.5L430 348M185.6 249.5L400 337M219 249.5L340 302M291.4 249.5L561 290M36.2 314L300 422M36.2 354L300 384M36.2 354L300 462M36.2 394.3L300 500M520 250L470 451M561 262L490 451M561 358L500 451" stroke="#a0a0a0" opacity="0.55" stroke-width="0.8" fill="none"/>
<polyline points="516.5,284.3 491,444" stroke="#ff30ff" stroke-width="2" fill="none"/>
<polyline points="516.5,284.3 491,444" stroke="#fff" stroke-width="0.9" stroke-dasharray="2.5 1.8" fill="none"/>
<path d="M79 279.3H473V284.3H516.5M79.5 279V566" stroke="#ff30ff" stroke-width="2.2" fill="none"/>
<path d="M79 279.3H473V284.3H516.5M79.5 279V566" stroke="#fff" stroke-width="1" stroke-dasharray="2.5 1.8" fill="none"/>
<path d="M79 566.5H485" stroke="#f0f000" stroke-width="1.2"/>
<path d="M77.2 283.5h3.6v3.6h-3.6zM77.2 318.5h3.6v3.6h-3.6zM77.2 352.4h3.6v3.6h-3.6zM77.2 386.0h3.6v3.6h-3.6zM77.2 422.5h3.6v3.6h-3.6zM77.2 460.2h3.6v3.6h-3.6zM77.2 495.5h3.6v3.6h-3.6zM77.2 530.2h3.6v3.6h-3.6zM77.2 564.4000000000001h3.6v3.6h-3.6zM112.8 283.5h3.6v3.6h-3.6zM112.8 318.5h3.6v3.6h-3.6zM112.8 352.4h3.6v3.6h-3.6zM112.8 386.0h3.6v3.6h-3.6zM112.8 422.5h3.6v3.6h-3.6zM112.8 460.2h3.6v3.6h-3.6zM112.8 495.5h3.6v3.6h-3.6zM112.8 530.2h3.6v3.6h-3.6zM112.8 564.4000000000001h3.6v3.6h-3.6zM147.29999999999998 283.5h3.6v3.6h-3.6zM147.29999999999998 318.5h3.6v3.6h-3.6zM147.29999999999998 352.4h3.6v3.6h-3.6zM147.29999999999998 386.0h3.6v3.6h-3.6zM147.29999999999998 422.5h3.6v3.6h-3.6zM147.29999999999998 460.2h3.6v3.6h-3.6zM147.29999999999998 495.5h3.6v3.6h-3.6zM147.29999999999998 530.2h3.6v3.6h-3.6zM147.29999999999998 564.4000000000001h3.6v3.6h-3.6zM181.7 283.5h3.6v3.6h-3.6zM181.7 318.5h3.6v3.6h-3.6zM181.7 352.4h3.6v3.6h-3.6zM181.7 386.0h3.6v3.6h-3.6zM181.7 422.5h3.6v3.6h-3.6zM181.7 460.2h3.6v3.6h-3.6zM181.7 495.5h3.6v3.6h-3.6zM181.7 530.2h3.6v3.6h-3.6zM181.7 564.4000000000001h3.6v3.6h-3.6zM216.2 283.5h3.6v3.6h-3.6zM216.2 318.5h3.6v3.6h-3.6zM216.2 352.4h3.6v3.6h-3.6zM216.2 386.0h3.6v3.6h-3.6zM216.2 422.5h3.6v3.6h-3.6zM216.2 460.2h3.6v3.6h-3.6zM216.2 495.5h3.6v3.6h-3.6zM216.2 530.2h3.6v3.6h-3.6zM216.2 564.4000000000001h3.6v3.6h-3.6zM250.7 283.5h3.6v3.6h-3.6zM250.7 318.5h3.6v3.6h-3.6zM250.7 352.4h3.6v3.6h-3.6zM250.7 386.0h3.6v3.6h-3.6zM250.7 422.5h3.6v3.6h-3.6zM250.7 460.2h3.6v3.6h-3.6zM250.7 495.5h3.6v3.6h-3.6zM250.7 530.2h3.6v3.6h-3.6zM250.7 564.4000000000001h3.6v3.6h-3.6zM286.59999999999997 283.5h3.6v3.6h-3.6zM286.59999999999997 318.5h3.6v3.6h-3.6zM286.59999999999997 352.4h3.6v3.6h-3.6zM286.59999999999997 386.0h3.6v3.6h-3.6zM286.59999999999997 422.5h3.6v3.6h-3.6zM286.59999999999997 460.2h3.6v3.6h-3.6zM286.59999999999997 495.5h3.6v3.6h-3.6zM286.59999999999997 530.2h3.6v3.6h-3.6zM286.59999999999997 564.4000000000001h3.6v3.6h-3.6zM322.8 283.5h3.6v3.6h-3.6zM322.8 318.5h3.6v3.6h-3.6zM322.8 352.4h3.6v3.6h-3.6zM322.8 386.0h3.6v3.6h-3.6zM322.8 422.5h3.6v3.6h-3.6zM322.8 460.2h3.6v3.6h-3.6zM322.8 495.5h3.6v3.6h-3.6zM322.8 530.2h3.6v3.6h-3.6zM322.8 564.4000000000001h3.6v3.6h-3.6zM357.2 283.5h3.6v3.6h-3.6zM357.2 318.5h3.6v3.6h-3.6zM357.2 352.4h3.6v3.6h-3.6zM357.2 386.0h3.6v3.6h-3.6zM357.2 422.5h3.6v3.6h-3.6zM357.2 460.2h3.6v3.6h-3.6zM357.2 495.5h3.6v3.6h-3.6zM357.2 530.2h3.6v3.6h-3.6zM357.2 564.4000000000001h3.6v3.6h-3.6zM391.8 283.5h3.6v3.6h-3.6zM391.8 318.5h3.6v3.6h-3.6zM391.8 352.4h3.6v3.6h-3.6zM391.8 386.0h3.6v3.6h-3.6zM391.8 422.5h3.6v3.6h-3.6zM391.8 460.2h3.6v3.6h-3.6zM391.8 495.5h3.6v3.6h-3.6zM391.8 530.2h3.6v3.6h-3.6zM391.8 564.4000000000001h3.6v3.6h-3.6zM426.5 283.5h3.6v3.6h-3.6zM426.5 318.5h3.6v3.6h-3.6zM426.5 352.4h3.6v3.6h-3.6zM426.5 386.0h3.6v3.6h-3.6zM426.5 422.5h3.6v3.6h-3.6zM426.5 460.2h3.6v3.6h-3.6zM426.5 495.5h3.6v3.6h-3.6zM426.5 530.2h3.6v3.6h-3.6zM426.5 564.4000000000001h3.6v3.6h-3.6zM461.7 283.5h3.6v3.6h-3.6zM461.7 318.5h3.6v3.6h-3.6zM461.7 352.4h3.6v3.6h-3.6zM461.7 386.0h3.6v3.6h-3.6zM461.7 422.5h3.6v3.6h-3.6zM461.7 460.2h3.6v3.6h-3.6zM461.7 495.5h3.6v3.6h-3.6zM461.7 530.2h3.6v3.6h-3.6zM461.7 564.4000000000001h3.6v3.6h-3.6zM498.4 283.5h3.6v3.6h-3.6zM498.4 318.5h3.6v3.6h-3.6zM498.4 352.4h3.6v3.6h-3.6zM498.4 386.0h3.6v3.6h-3.6zM498.4 422.5h3.6v3.6h-3.6zM464.2 283.5h3.6v3.6h-3.6zM464.2 318.5h3.6v3.6h-3.6zM464.2 352.4h3.6v3.6h-3.6zM464.2 386.0h3.6v3.6h-3.6zM464.2 422.5h3.6v3.6h-3.6zM464.2 460.2h3.6v3.6h-3.6zM464.2 495.5h3.6v3.6h-3.6zM464.2 530.2h3.6v3.6h-3.6zM464.2 564.4000000000001h3.6v3.6h-3.6z" fill="#e8f0e8" stroke="#18f018" stroke-width="1.5"/>
</svg><svg class="a" style="left:540px;top:0" width="14" height="13" viewBox="0 0 14 13"><rect x="0.5" y="0.5" width="13" height="12" fill="#c8c8c8" stroke="#555"/><path d="M2.5 11L7 2L11.5 11" stroke="#333" stroke-width="1.2" fill="none"/></svg></div>
<div class="a" id="split"></div>
<style>.dk path,.dk rect,.dk circle{stroke-width:1.35px}</style><svg width="0" height="0" style="position:absolute"><defs><linearGradient id="rb" x1="0" x2="1"><stop offset="0" stop-color="#e02020"/><stop offset="0.3" stop-color="#f0e020"/><stop offset="0.6" stop-color="#20c040"/><stop offset="1" stop-color="#2040e0"/></linearGradient></defs></svg>
<div class="a" style="left:2px;top:137px;width:18px;height:436px;background:linear-gradient(90deg,#e3e7ed,#f3f5f8 45%,#e6e9ee);border-radius:2px 2px 3px 3px"></div>
<div class="a" style="left:6.0px;top:140px;width:11px;height:2px;background:repeating-linear-gradient(90deg,#8a94a2 0 1.5px,transparent 1.5px 3px)"></div>
<div class="a" style="left:2px;top:563px;width:18px;height:10px;background:linear-gradient(#cdd2da,#bfc5ce);border-radius:0 0 3px 3px"></div>
<svg class="a" style="left:12px;top:565px" width="6" height="6" viewBox="0 0 6 6"><path d="M1 1V5L4.5 3Z" fill="#fff" stroke="#888" stroke-width="0.6"/></svg>
<svg class="a dk" style="left:4.5px;top:143.7px" width="13" height="13" viewBox="0 0 14 14"><rect x="1" y="1" width="13" height="12" fill="#fff" stroke="#667"/><path d="M3 4H12M3 7H12M3 10H12" stroke="#4a6a88"/><circle cx="12" cy="2" r="1" fill="#d22"/></svg>
<div class="a" style="left:5px;top:162.6px;width:12px;height:1px;background:#c4c9d1;border-bottom:1px solid #fff"></div>
<svg class="a dk" style="left:4.5px;top:168.5px" width="13" height="13" viewBox="0 0 14 14"><rect x="1" y="1" width="7" height="5" fill="#8a1a2a" stroke="#222" stroke-width="0.8"/><rect x="4" y="5" width="7" height="5" fill="#c44" stroke="#222" stroke-width="0.8"/><rect x="7" y="9" width="7" height="4" fill="#3a4a6a" stroke="#222" stroke-width="0.8"/></svg>
<svg class="a dk" style="left:4.5px;top:185.2px" width="13" height="13" viewBox="0 0 14 14"><rect x="1" y="1" width="7" height="5" fill="#eee" stroke="#888" stroke-width="0.8"/><rect x="4" y="5" width="7" height="5" fill="#ddd" stroke="#888" stroke-width="0.8"/><rect x="7" y="9" width="7" height="4" fill="#ccc" stroke="#888" stroke-width="0.8"/></svg>
<svg class="a dk" style="left:4.5px;top:201.7px" width="13" height="13" viewBox="0 0 14 14"><rect x="1" y="6" width="7" height="6" fill="#8a1a2a" stroke="#222" stroke-width="0.8"/><rect x="6" y="1" width="7" height="5" fill="#3a4a6a" stroke="#222" stroke-width="0.8"/><path d="M12 7V13M10.5 8.5L12 7L13.5 8.5" stroke="#111"/></svg>
<svg class="a dk" style="left:4.5px;top:218.3px" width="13" height="13" viewBox="0 0 14 14"><rect x="1" y="2" width="7" height="5" fill="#8a1a2a" stroke="#222" stroke-width="0.8"/><rect x="5" y="8" width="9" height="5" fill="#fff" stroke="#888" stroke-width="0.8"/><path d="M11 1V6M8.5 3.5H13.5" stroke="#4a9ad0" stroke-dasharray="1 0.6"/></svg>
<svg class="a dk" style="left:4.5px;top:234.9px" width="13" height="13" viewBox="0 0 14 14"><rect x="2" y="1" width="8" height="6" fill="#3a4a6a" stroke="#222" stroke-width="0.8"/><path d="M1 8H9M1 11H9M3 7V13M6 7V13" stroke="#c44" stroke-width="0.8"/><path d="M9 5L13 11L10 10L9 13Z" fill="#fff" stroke="#111" stroke-width="0.8"/></svg>
<div class="a" style="left:5px;top:253.8px;width:12px;height:1px;background:#c4c9d1;border-bottom:1px solid #fff"></div>
<svg class="a dk" style="left:4.5px;top:259.5px" width="13" height="13" viewBox="0 0 14 14"><text x="1" y="11" font-size="10" fill="#222">?</text><path d="M8 1Q5 7 8 13" stroke="#111" fill="none"/><rect x="9" y="1" width="4" height="12" fill="#222"/><path d="M11 2V12" stroke="#e8d800" stroke-dasharray="1 1"/></svg>
<div class="a" style="left:5px;top:278px;width:12px;height:1px;background:#c4c9d1;border-bottom:1px solid #fff"></div>
<svg class="a dk" style="left:4.5px;top:281.5px" width="13" height="13" viewBox="0 0 14 14"><rect x="2" y="1" width="10" height="12" rx="1" fill="#f4f4f4" stroke="#333"/><path d="M4 4H10M4 7H10M4 10H8" stroke="#333"/></svg>
<div class="a" style="left:5px;top:299.5px;width:12px;height:1px;background:#c4c9d1;border-bottom:1px solid #fff"></div>
<svg class="a dk" style="left:4.5px;top:304.0px" width="13" height="13" viewBox="0 0 14 14"><path d="M2 3L5 1H13L10 3ZM2 12L5 10H13L10 12Z" fill="#fff" stroke="#c22" stroke-width="1.2"/><path d="M7 3V10M5.5 8L7 10L8.5 8" stroke="#222"/></svg>
<svg class="a dk" style="left:4.5px;top:320.5px" width="13" height="13" viewBox="0 0 14 14"><rect x="1" y="1" width="8" height="9" fill="#fff" stroke="#333"/><rect x="5" y="5" width="8" height="8" fill="#dde4ea" stroke="#333"/><path d="M3 4H7M3 6H7" stroke="#333"/></svg>
<svg class="a dk" style="left:4.5px;top:337.5px" width="13" height="13" viewBox="0 0 14 14"><rect x="1" y="1" width="8" height="9" fill="#eee" stroke="#999"/><rect x="5" y="5" width="8" height="8" fill="#ddd" stroke="#999"/></svg>
<svg class="a dk" style="left:4.5px;top:354.1px" width="13" height="13" viewBox="0 0 14 14"><rect x="1" y="2" width="7" height="9" fill="#fff" stroke="#4a6a88"/><rect x="6" y="4" width="7" height="9" fill="#cde" stroke="#4a6a88"/><path d="M10 1L12 3" stroke="#333"/></svg>
<svg class="a dk" style="left:4.5px;top:371.1px" width="13" height="13" viewBox="0 0 14 14"><rect x="1" y="2" width="7" height="9" fill="#fff" stroke="#4a6a88"/><rect x="6" y="4" width="7" height="9" fill="#cde" stroke="#4a6a88"/><path d="M10 1L12 3" stroke="#333"/></svg>
<svg class="a dk" style="left:4.5px;top:388.1px" width="13" height="13" viewBox="0 0 14 14"><rect x="1" y="2" width="7" height="9" fill="#fff" stroke="#4a6a88"/><rect x="6" y="4" width="7" height="9" fill="#cde" stroke="#4a6a88"/><path d="M10 1L12 3" stroke="#333"/></svg>
<svg class="a dk" style="left:4.5px;top:405.0px" width="13" height="13" viewBox="0 0 14 14"><circle cx="7" cy="2" r="1.4" fill="#333"/><circle cx="12" cy="5" r="1.4" fill="#333"/><circle cx="12" cy="10" r="1.4" fill="#333"/><circle cx="7" cy="13" r="1.4" fill="#333"/><circle cx="2" cy="10" r="1.4" fill="#333"/><circle cx="2" cy="5" r="1.4" fill="#333"/></svg>
<div class="a" style="left:5px;top:424.2px;width:12px;height:1px;background:#c4c9d1;border-bottom:1px solid #fff"></div>
<svg class="a dk" style="left:4.5px;top:429.1px" width="13" height="13" viewBox="0 0 14 14"><rect x="1" y="4" width="12" height="8" fill="#cde" stroke="#4a6a88"/><path d="M1 13L13 1" stroke="#223" stroke-width="1.4"/></svg>
<svg class="a dk" style="left:4.5px;top:446.0px" width="13" height="13" viewBox="0 0 14 14"><rect x="1" y="2" width="12" height="10" fill="#fff" stroke="#4a6a88" stroke-width="1.2"/><path d="M4 2V12M10 4L12 7L10 10" stroke="#4a6a88"/></svg>
<svg class="a dk" style="left:4.5px;top:463.0px" width="13" height="13" viewBox="0 0 14 14"><path d="M1 6H13M1 9H13" stroke="#4a6a88" stroke-width="1"/><path d="M1 13L13 1" stroke="#223" stroke-width="1.2"/></svg>
<svg class="a dk" style="left:4.5px;top:479.9px" width="13" height="13" viewBox="0 0 14 14"><path d="M3 3H12V7M3 3V12" stroke="#444" stroke-width="2" fill="none"/><circle cx="3" cy="3" r="2" fill="#a060c0"/></svg>
<div class="a" style="left:5px;top:497.7px;width:12px;height:1px;background:#c4c9d1;border-bottom:1px solid #fff"></div>
<svg class="a dk" style="left:4.5px;top:502.5px" width="13" height="13" viewBox="0 0 14 14"><rect x="1" y="2" width="6" height="10" rx="3" fill="#3a4a6a"/><rect x="7" y="1" width="6" height="9" fill="#e8d040" stroke="#333" stroke-width="0.8"/><circle cx="8" cy="11" r="2.2" fill="#d22"/></svg>
<div class="a" style="left:5px;top:520px;width:12px;height:1px;background:#c4c9d1;border-bottom:1px solid #fff"></div>
<svg class="a dk" style="left:4.5px;top:525.0px" width="13" height="13" viewBox="0 0 14 14"><text x="1" y="6" font-size="5" font-weight="bold" fill="#2a4a88">AUTO</text><text x="1" y="11" font-size="5" font-weight="bold" fill="#2a4a88">ABC</text><path d="M1 13H13" stroke="#2a4a88"/></svg>
<div class="a" style="left:5px;top:543.4px;width:12px;height:1px;background:#c4c9d1;border-bottom:1px solid #fff"></div>
<svg class="a dk" style="left:4.5px;top:548.8px" width="13" height="13" viewBox="0 0 14 14"><circle cx="4" cy="10" r="3" fill="#111"/><circle cx="10" cy="10" r="3" fill="#111"/><rect x="2" y="2" width="3" height="7" fill="#111"/><rect x="9" y="2" width="3" height="7" fill="#111"/><rect x="5" y="5" width="4" height="3" fill="#111"/></svg>
<div class="a" style="left:1142.5px;top:137px;width:19.5px;height:371px;background:linear-gradient(90deg,#e3e7ed,#f3f5f8 45%,#e6e9ee);border-radius:2px 2px 3px 3px"></div>
<div class="a" style="left:1147.25px;top:140px;width:11px;height:2px;background:repeating-linear-gradient(90deg,#8a94a2 0 1.5px,transparent 1.5px 3px)"></div>
<div class="a" style="left:1142.5px;top:498px;width:19.5px;height:10px;background:linear-gradient(#cdd2da,#bfc5ce);border-radius:0 0 3px 3px"></div>
<svg class="a" style="left:1154px;top:500px" width="6" height="6" viewBox="0 0 6 6"><path d="M1 1V5L4.5 3Z" fill="#fff" stroke="#888" stroke-width="0.6"/></svg>
<svg class="a dk" style="left:1145.8px;top:146.8px" width="13" height="13" viewBox="0 0 14 14"><rect x="1" y="1" width="12" height="12" fill="#fff" stroke="#999"/><path d="M7 1V13M1 5H13M1 9H13" stroke="#999"/></svg>
<svg class="a dk" style="left:1145.8px;top:163.6px" width="13" height="13" viewBox="0 0 14 14"><path d="M1 4H13M1 10H13M4 1V13M10 1V13" stroke="#222" stroke-width="1"/><path d="M4 1V4M10 1V4M4 10V13M10 10V13" stroke="#d22" stroke-width="1.4"/><path d="M9 7L13 12L11 13Z" fill="#224" /></svg>
<svg class="a dk" style="left:1145.8px;top:180.4px" width="13" height="13" viewBox="0 0 14 14"><rect x="1" y="1" width="10" height="10" fill="#fff" stroke="#333"/><path d="M3 3V10M1 5H8" stroke="#333"/><path d="M7 6L13 12L10 13Z" fill="#1a2a8a"/></svg>
<svg class="a dk" style="left:1145.8px;top:197.2px" width="13" height="13" viewBox="0 0 14 14"><path d="M2 1V13M5 1V13" stroke="#c22" stroke-width="1.2"/><path d="M6 6L13 12L10 13Z" fill="#1a2a8a"/><path d="M2 13H8" stroke="#333"/></svg>
<svg class="a dk" style="left:1145.8px;top:214.0px" width="13" height="13" viewBox="0 0 14 14"><rect x="1" y="2" width="12" height="7" fill="#fff" stroke="#333"/><path d="M3 5H11" stroke="#333" stroke-dasharray="1 1"/><path d="M7 7L13 12L10 13Z" fill="#1a2a8a"/></svg>
<svg class="a dk" style="left:1145.8px;top:230.8px" width="13" height="13" viewBox="0 0 14 14"><rect x="1" y="1" width="10" height="10" fill="#fff" stroke="#333"/><path d="M3 3V10M1 5H8" stroke="#333"/><path d="M7 6L13 12L10 13Z" fill="#1a2a8a"/></svg>
<svg class="a dk" style="left:1145.8px;top:247.6px" width="13" height="13" viewBox="0 0 14 14"><rect x="1" y="1" width="10" height="10" fill="#fff" stroke="#333"/><path d="M3 3V10M1 5H8" stroke="#333"/><path d="M7 6L13 12L10 13Z" fill="#1a2a8a"/></svg>
<svg class="a dk" style="left:1145.8px;top:264.4px" width="13" height="13" viewBox="0 0 14 14"><rect x="1" y="1" width="12" height="12" fill="#fff" stroke="#999"/><path d="M7 1V13M1 5H13M1 9H13" stroke="#999"/></svg>
<svg class="a dk" style="left:1145.8px;top:281.2px" width="13" height="13" viewBox="0 0 14 14"><path d="M3 1H7V5L10 10H1L3 5Z" fill="#cde" stroke="#335"/><path d="M7 7L13 12L10 13Z" fill="#1a2a8a"/></svg>
<svg class="a dk" style="left:1145.8px;top:298.0px" width="13" height="13" viewBox="0 0 14 14"><rect x="1" y="2" width="12" height="7" fill="#fff" stroke="#333"/><path d="M3 5H11" stroke="#333" stroke-dasharray="1 1"/><path d="M7 7L13 12L10 13Z" fill="#1a2a8a"/></svg>
<svg class="a dk" style="left:1145.8px;top:314.8px" width="13" height="13" viewBox="0 0 14 14"><path d="M2 2V12M2 12H12M2 7H7" stroke="#335" stroke-width="1.4" fill="none"/><path d="M7 7L13 12L10 13Z" fill="#1a2a8a"/></svg>
<svg class="a dk" style="left:1145.8px;top:331.6px" width="13" height="13" viewBox="0 0 14 14"><path d="M7 1V13M1 7H13" stroke="#111" stroke-width="1.6"/><path d="M4 4L10 10M10 4L4 10" stroke="#111" stroke-width="0.8"/></svg>
<svg class="a dk" style="left:1145.8px;top:348.4px" width="13" height="13" viewBox="0 0 14 14"><path d="M3 1H7V5L10 10H1L3 5Z" fill="#cde" stroke="#335"/><path d="M7 7L13 12L10 13Z" fill="#1a2a8a"/></svg>
<svg class="a dk" style="left:1145.8px;top:365.2px" width="13" height="13" viewBox="0 0 14 14"><path d="M2 2V12M2 12H12M2 7H7" stroke="#335" stroke-width="1.4" fill="none"/><path d="M7 7L13 12L10 13Z" fill="#1a2a8a"/></svg>
<svg class="a dk" style="left:1145.8px;top:382.0px" width="13" height="13" viewBox="0 0 14 14"><path d="M2 12L12 2M2 7L7 2" stroke="#335" stroke-width="1.2"/><path d="M7 7L13 12L10 13Z" fill="#1a2a8a"/></svg>
<svg class="a dk" style="left:1145.8px;top:398.8px" width="13" height="13" viewBox="0 0 14 14"><path d="M1 2H13M3 2V12M10 2V12" stroke="#223" stroke-width="1.8"/><path d="M7 7L13 12L10 13Z" fill="#1a2a8a"/></svg>
<svg class="a dk" style="left:1145.8px;top:415.6px" width="13" height="13" viewBox="0 0 14 14"><path d="M1 10Q7 0 13 10Z" fill="#ddd" stroke="#222"/><path d="M3 10L7 4L11 10" stroke="#222" stroke-width="0.8"/><path d="M7 7L13 12L10 13Z" fill="#1a2a8a"/></svg>
<svg class="a dk" style="left:1145.8px;top:432.4px" width="13" height="13" viewBox="0 0 14 14"><rect x="1" y="1" width="12" height="12" fill="#fff" stroke="#888"/><path d="M1 1L13 13M13 1L1 13" stroke="#888"/><path d="M8 8L13 13" stroke="#e8a030" stroke-width="2"/></svg>
<svg class="a dk" style="left:1145.8px;top:449.2px" width="13" height="13" viewBox="0 0 14 14"><rect x="1" y="1" width="3" height="12" fill="#8ab"/><path d="M6 4H10L13 7V13H6Z" fill="#cde" stroke="#335"/></svg>
<svg class="a dk" style="left:1145.8px;top:466.0px" width="13" height="13" viewBox="0 0 14 14"><path d="M1 8L4 6L7 8L10 6L13 8" stroke="#aab" fill="none"/></svg>
<svg class="a dk" style="left:1145.8px;top:482.8px" width="13" height="13" viewBox="0 0 14 14"><path d="M3 2H13L11 12H1Z" fill="#fff" stroke="#333"/><text x="3" y="11" font-size="5" fill="#2a4a88">123</text></svg>
<div class="a" style="left:1163.8px;top:136px;width:18.90000000000009px;height:377px;background:linear-gradient(90deg,#e3e7ed,#f3f5f8 45%,#e6e9ee);border-radius:2px 2px 3px 3px"></div>
<div class="a" style="left:1168.25px;top:139px;width:11px;height:2px;background:repeating-linear-gradient(90deg,#8a94a2 0 1.5px,transparent 1.5px 3px)"></div>
<div class="a" style="left:1163.8px;top:503px;width:18.90000000000009px;height:10px;background:linear-gradient(#cdd2da,#bfc5ce);border-radius:0 0 3px 3px"></div>
<svg class="a" style="left:1174.7px;top:505px" width="6" height="6" viewBox="0 0 6 6"><path d="M1 1V5L4.5 3Z" fill="#fff" stroke="#888" stroke-width="0.6"/></svg>
<svg class="a dk" style="left:1166.8px;top:143.6px" width="13" height="13" viewBox="0 0 14 14"><path d="M1 1h3v3h-3zM7 1h3v3h-3zM4 4h3v3h-3zM10 4h3v3h-3zM1 7h3v3h-3zM7 7h3v3h-3zM4 10h3v3h-3zM10 10h3v3h-3z" fill="#111"/><path d="M8 0.5H13.5V6M0.5 8V13.5H6" stroke="#3cc8e8" stroke-width="1" fill="none"/></svg>
<svg class="a dk" style="left:1166.8px;top:160.0px" width="13" height="13" viewBox="0 0 14 14"><path d="M1 4H13M1 7H13M1 10H13M4 1V13M7 1V13M10 1V13" stroke="#335" stroke-width="0.9"/><rect x="5" y="5" width="4" height="4" fill="#335"/><path d="M8 0.5H13.5V6M0.5 8V13.5H6" stroke="#3cc8e8" stroke-width="1" fill="none"/></svg>
<svg class="a dk" style="left:1166.8px;top:176.6px" width="13" height="13" viewBox="0 0 14 14"><path d="M1 2H6V6H12V11H1Z" fill="#bbb" stroke="#111"/><path d="M1 6H12" stroke="#111"/><path d="M8 0.5H13.5V6M0.5 8V13.5H6" stroke="#3cc8e8" stroke-width="1" fill="none"/></svg>
<svg class="a dk" style="left:1166.8px;top:193.9px" width="13" height="13" viewBox="0 0 14 14"><path d="M1 1H5V4H9V12H1Z" fill="#ccc" stroke="#111"/><path d="M1 5H9M1 8H9M4 1V12" stroke="#111" stroke-width="0.7"/><path d="M8 0.5H13.5V6M0.5 8V13.5H6" stroke="#3cc8e8" stroke-width="1" fill="none"/></svg>
<div class="a" style="left:1166.8px;top:213px;width:12.900000000000091px;height:1px;background:#c4c9d1;border-bottom:1px solid #fff"></div>
<svg class="a dk" style="left:1166.8px;top:219.0px" width="13" height="13" viewBox="0 0 14 14"><path d="M5 1V5M3 3L5 5L7 3" stroke="#222" fill="none"/><rect x="1" y="6" width="12" height="3" fill="#fff" stroke="#222"/><path d="M3 9L1 12H5ZM11 9L9 12H13Z" fill="#333"/><path d="M8 0.5H13.5V6M0.5 8V13.5H6" stroke="#3cc8e8" stroke-width="1" fill="none"/></svg>
<svg class="a dk" style="left:1166.8px;top:236.3px" width="13" height="13" viewBox="0 0 14 14"><path d="M2 2H12M2 12H12M4 2V12M7 2V12M10 2V12" stroke="#111" stroke-width="1.1"/><path d="M8 0.5H13.5V6M0.5 8V13.5H6" stroke="#3cc8e8" stroke-width="1" fill="none"/></svg>
<svg class="a dk" style="left:1166.8px;top:253.5px" width="13" height="13" viewBox="0 0 14 14"><path d="M1 3H13L9 8V12H5V8Z" fill="#8aa8c0" stroke="#335"/></svg>
<svg class="a dk" style="left:1166.8px;top:269.3px" width="13" height="13" viewBox="0 0 14 14"><path d="M2 10L8 2H12L6 12H2Z" fill="#fff" stroke="#111" stroke-width="1.4"/><path d="M8 0.5H13.5V6M0.5 8V13.5H6" stroke="#3cc8e8" stroke-width="1" fill="none"/></svg>
<svg class="a dk" style="left:1166.8px;top:286.5px" width="13" height="13" viewBox="0 0 14 14"><path d="M2 12V2H12V12H10V4H4V12Z" fill="#8ab" stroke="#111"/><path d="M8 0.5H13.5V6M0.5 8V13.5H6" stroke="#3cc8e8" stroke-width="1" fill="none"/></svg>
<div class="a" style="left:1166.8px;top:304px;width:12.900000000000091px;height:1px;background:#c4c9d1;border-bottom:1px solid #fff"></div>
<svg class="a dk" style="left:1166.8px;top:310.1px" width="13" height="13" viewBox="0 0 14 14"><path d="M4 1H8V5L11 11H1L4 5Z" fill="#fff" stroke="#111"/><path d="M8 0.5H13.5V6M0.5 8V13.5H6" stroke="#3cc8e8" stroke-width="1" fill="none"/></svg>
<svg class="a dk" style="left:1166.8px;top:325.8px" width="13" height="13" viewBox="0 0 14 14"><rect x="1.5" y="2.5" width="10" height="8" fill="#fff" stroke="#111"/><rect x="3" y="4" width="7" height="5" fill="#ccc" stroke="#111" stroke-width="0.7"/><path d="M8 0.5H13.5V6M0.5 8V13.5H6" stroke="#3cc8e8" stroke-width="1" fill="none"/></svg>
<svg class="a dk" style="left:1166.8px;top:341.5px" width="13" height="13" viewBox="0 0 14 14"><path d="M1 9H12M2 9L4 5H9L11 9" stroke="#111" fill="#ddd"/><path d="M8 0.5H13.5V6M0.5 8V13.5H6" stroke="#3cc8e8" stroke-width="1" fill="none"/></svg>
<svg class="a dk" style="left:1166.8px;top:357.2px" width="13" height="13" viewBox="0 0 14 14"><path d="M2 6H10V11M5 2H12V6" stroke="#111" fill="#fff"/><path d="M8 0.5H13.5V6M0.5 8V13.5H6" stroke="#3cc8e8" stroke-width="1" fill="none"/></svg>
<div class="a" style="left:1166.8px;top:377.8px;width:12.900000000000091px;height:1px;background:#c4c9d1;border-bottom:1px solid #fff"></div>
<svg class="a dk" style="left:1166.8px;top:383.3px" width="13" height="13" viewBox="0 0 14 14"><path d="M6 1V3M3 10L4 4H8L9 10ZM2 10H10" stroke="#111" fill="#ddd"/><path d="M8 0.5H13.5V6M0.5 8V13.5H6" stroke="#3cc8e8" stroke-width="1" fill="none"/></svg>
<svg class="a dk" style="left:1166.8px;top:399.5px" width="13" height="13" viewBox="0 0 14 14"><path d="M8 1V8H2V12H12V1Z" fill="#111"/><path d="M8 0.5H13.5V6M0.5 8V13.5H6" stroke="#3cc8e8" stroke-width="1" fill="none"/></svg>
<svg class="a dk" style="left:1166.8px;top:416.0px" width="13" height="13" viewBox="0 0 14 14"><path d="M1 12h4v-4h4v-4h4" stroke="#111" stroke-width="2" fill="none"/><path d="M8 0.5H13.5V6M0.5 8V13.5H6" stroke="#3cc8e8" stroke-width="1" fill="none"/></svg>
<svg class="a dk" style="left:1166.8px;top:432.3px" width="13" height="13" viewBox="0 0 14 14"><path d="M1 2H13M3 2V12M6 2V12M9 2V12M12 2V12" stroke="#222" stroke-width="1.2"/></svg>
<svg class="a dk" style="left:1166.8px;top:450.3px" width="13" height="13" viewBox="0 0 14 14"><path d="M1 10Q7 1 13 10Z" fill="#fff" stroke="#222"/><path d="M4 10Q5 4 7 4Q9 4 10 10M7 4V10" stroke="#222" fill="none"/><path d="M8 0.5H13.5V6M0.5 8V13.5H6" stroke="#3cc8e8" stroke-width="1" fill="none"/></svg>
<div class="a" style="left:1166.8px;top:468.2px;width:12.900000000000091px;height:1px;background:#c4c9d1;border-bottom:1px solid #fff"></div>
<svg class="a dk" style="left:1166.8px;top:471.5px" width="13" height="13" viewBox="0 0 14 14"><path d="M2 3H8V8H12V12H6" stroke="#e83030" stroke-width="1.5" fill="none"/><path d="M2 3V10" stroke="#2a6ad0" stroke-width="1.5"/></svg>
<svg class="a dk" style="left:1166.8px;top:487.9px" width="13" height="13" viewBox="0 0 14 14"><rect x="1" y="1" width="12" height="12" fill="#4a6a88"/><path d="M1 4H13M1 7H13M1 10H13M4 1V13M7 1V13M10 1V13" stroke="#cde" stroke-width="0.7"/><circle cx="9" cy="9" r="2.5" fill="none" stroke="#111" stroke-width="1.2"/></svg>
<div class="a" style="left:1163.8px;top:516px;width:18.90000000000009px;height:252px;background:linear-gradient(90deg,#e3e7ed,#f3f5f8 45%,#e6e9ee);border-radius:2px 2px 3px 3px"></div>
<div class="a" style="left:1168.25px;top:519px;width:11px;height:2px;background:repeating-linear-gradient(90deg,#8a94a2 0 1.5px,transparent 1.5px 3px)"></div>
<div class="a" style="left:1163.8px;top:758px;width:18.90000000000009px;height:10px;background:linear-gradient(#cdd2da,#bfc5ce);border-radius:0 0 3px 3px"></div>
<svg class="a" style="left:1174.7px;top:760px" width="6" height="6" viewBox="0 0 6 6"><path d="M1 1V5L4.5 3Z" fill="#fff" stroke="#888" stroke-width="0.6"/></svg>
<svg class="a dk" style="left:1166.8px;top:525.5px" width="13" height="13" viewBox="0 0 14 14"><path d="M2 13V4L5 1M6 13V5L9 2M10 13V6" stroke="#333" fill="none"/><path d="M8 0.5H13.5V6M0.5 8V13.5H6" stroke="#e8d040" stroke-width="1" fill="none"/></svg>
<svg class="a dk" style="left:1166.8px;top:541.9px" width="13" height="13" viewBox="0 0 14 14"><path d="M1 3H10L13 1M1 6H10L13 4M1 9H10L13 7M10 3V9" stroke="#333" fill="none"/><path d="M8 0.5H13.5V6M0.5 8V13.5H6" stroke="#e8d040" stroke-width="1" fill="none"/></svg>
<svg class="a dk" style="left:1166.8px;top:558.2px" width="13" height="13" viewBox="0 0 14 14"><rect x="1" y="1" width="12" height="12" fill="#bbb"/><path d="M1 5H13M1 9H13M5 1V13M9 1V13" stroke="#111" stroke-width="1.3"/><path d="M8 0.5H13.5V6M0.5 8V13.5H6" stroke="#e8d040" stroke-width="1" fill="none"/></svg>
<svg class="a dk" style="left:1166.8px;top:574.5px" width="13" height="13" viewBox="0 0 14 14"><rect x="2" y="3" width="10" height="8" fill="#fff" stroke="#333"/><circle cx="7" cy="7" r="1.5" fill="none" stroke="#111"/><path d="M8 0.5H13.5V6M0.5 8V13.5H6" stroke="#e8d040" stroke-width="1" fill="none"/></svg>
<svg class="a dk" style="left:1166.8px;top:590.9px" width="13" height="13" viewBox="0 0 14 14"><rect x="2" y="5" width="10" height="7" fill="#fff" stroke="#333"/><circle cx="7" cy="8.5" r="1.5" fill="none" stroke="#111"/><path d="M3 2H11" stroke="#111"/><path d="M8 0.5H13.5V6M0.5 8V13.5H6" stroke="#e8d040" stroke-width="1" fill="none"/></svg>
<svg class="a dk" style="left:1166.8px;top:607.2px" width="13" height="13" viewBox="0 0 14 14"><path d="M1 3H10M3 6H12M1 9H10" stroke="#333"/><path d="M3 12L9 6" stroke="#333"/><path d="M8 0.5H13.5V6M0.5 8V13.5H6" stroke="#e8d040" stroke-width="1" fill="none"/></svg>
<svg class="a dk" style="left:1166.8px;top:623.6px" width="13" height="13" viewBox="0 0 14 14"><path d="M2 1V13L12 8V1" stroke="#111" stroke-width="1.2" fill="none"/><path d="M2 13L12 8" stroke="#e8d800" stroke-width="2"/><path d="M6 2H10V5" stroke="#111"/></svg>
<svg class="a dk" style="left:1166.8px;top:640.0px" width="13" height="13" viewBox="0 0 14 14"><path d="M4 1V13M7 1V13M10 1V13M1 4H13M1 10H13" stroke="#111" stroke-width="1.5"/><path d="M8 0.5H13.5V6M0.5 8V13.5H6" stroke="#e8d040" stroke-width="1" fill="none"/></svg>
<svg class="a dk" style="left:1166.8px;top:656.3px" width="13" height="13" viewBox="0 0 14 14"><rect x="1" y="1" width="12" height="12" fill="#fff" stroke="#333"/><path d="M1 1L13 13M13 1L1 13" stroke="#333"/><path d="M8 0.5H13.5V6M0.5 8V13.5H6" stroke="#e8d040" stroke-width="1" fill="none"/></svg>
<svg class="a dk" style="left:1166.8px;top:672.6px" width="13" height="13" viewBox="0 0 14 14"><path d="M1 11H13M2 11L5 5L8 11L11 5L13 11M5 5H11" stroke="#333" fill="none"/><path d="M8 0.5H13.5V6M0.5 8V13.5H6" stroke="#e8d040" stroke-width="1" fill="none"/></svg>
<svg class="a dk" style="left:1166.8px;top:689.0px" width="13" height="13" viewBox="0 0 14 14"><path d="M1 1L13 13M13 1L1 13M7 0V14M0 7H14" stroke="#111"/><circle cx="4" cy="10" r="2" fill="#111"/><circle cx="10" cy="4" r="2" fill="#111"/><path d="M8 0.5H13.5V6M0.5 8V13.5H6" stroke="#e8d040" stroke-width="1" fill="none"/></svg>
<svg class="a dk" style="left:1166.8px;top:705.4px" width="13" height="13" viewBox="0 0 14 14"><path d="M3 1V13" stroke="#111"/><rect x="6" y="3" width="7" height="8" fill="#fff" stroke="#e8d040"/></svg>
<svg class="a dk" style="left:1166.8px;top:721.7px" width="13" height="13" viewBox="0 0 14 14"><rect x="1" y="1" width="8" height="8" fill="#999" stroke="#333"/><rect x="5" y="5" width="8" height="8" fill="#bbb" stroke="#333"/><path d="M8 0.5H13.5V6M0.5 8V13.5H6" stroke="#e8d040" stroke-width="1" fill="none"/></svg>
<svg class="a dk" style="left:1166.8px;top:738.0px" width="13" height="13" viewBox="0 0 14 14"><path d="M1 3H6V11H1Z" fill="#fff" stroke="#e8d040"/><path d="M9 2H13V13H11V4H9Z" fill="#111"/><path d="M8 0.5H13.5V6M0.5 8V13.5H6" stroke="#e8d040" stroke-width="1" fill="none"/></svg>
<div class="a" style="left:1184.7px;top:136px;width:18.0px;height:501px;background:linear-gradient(90deg,#e3e7ed,#f3f5f8 45%,#e6e9ee);border-radius:2px 2px 3px 3px"></div>
<div class="a" style="left:1188.7px;top:139px;width:11px;height:2px;background:repeating-linear-gradient(90deg,#8a94a2 0 1.5px,transparent 1.5px 3px)"></div>
<div class="a" style="left:1184.7px;top:627px;width:18.0px;height:10px;background:linear-gradient(#cdd2da,#bfc5ce);border-radius:0 0 3px 3px"></div>
<svg class="a" style="left:1194.7px;top:629px" width="6" height="6" viewBox="0 0 6 6"><path d="M1 1V5L4.5 3Z" fill="#fff" stroke="#888" stroke-width="0.6"/></svg>
<svg class="a dk" style="left:1187.2px;top:143.6px" width="13" height="13" viewBox="0 0 14 14"><rect x="1" y="1" width="8" height="8" fill="#ddd" stroke="#333"/><circle cx="6" cy="6" r="3" fill="none" stroke="#e02020"/><rect x="7" y="7" width="7" height="7" fill="#fff" stroke="#222"/><path d="M9 12V10H12" stroke="#222" fill="none"/></svg>
<div class="a" style="left:1187.7px;top:162.7px;width:12.0px;height:1px;background:#c4c9d1;border-bottom:1px solid #fff"></div>
<svg class="a dk" style="left:1187.2px;top:168.8px" width="13" height="13" viewBox="0 0 14 14"><path d="M1 1H9V9H1Z" fill="#fff" stroke="#333"/><path d="M3 3H7M3 5H7" stroke="#2a5ad0"/><rect x="7" y="7" width="7" height="7" fill="#fff" stroke="#222"/><path d="M9 12V10H12" stroke="#222" fill="none"/></svg>
<svg class="a dk" style="left:1187.2px;top:185.5px" width="13" height="13" viewBox="0 0 14 14"><path d="M1 1H9V9H1Z" fill="#fff" stroke="#333"/><path d="M3 3H7M3 5H7" stroke="#2a5ad0"/><rect x="7" y="7" width="7" height="7" fill="#fff" stroke="#222"/><path d="M9 12V10H12" stroke="#222" fill="none"/></svg>
<svg class="a dk" style="left:1187.2px;top:201.1px" width="13" height="13" viewBox="0 0 14 14"><path d="M1 1H9V9H1Z" fill="#fff" stroke="#333"/><path d="M3 3H7M3 5H7" stroke="#2a5ad0"/><rect x="7" y="7" width="7" height="7" fill="#fff" stroke="#222"/><path d="M9 12V10H12" stroke="#222" fill="none"/></svg>
<svg class="a dk" style="left:1187.2px;top:217.5px" width="13" height="13" viewBox="0 0 14 14"><path d="M1 1H7V5H10V9H1Z" fill="#fff" stroke="#2a3aa0" stroke-width="1.2"/><rect x="7" y="7" width="7" height="7" fill="#fff" stroke="#222"/><path d="M9 12V10H12" stroke="#222" fill="none"/></svg>
<svg class="a dk" style="left:1187.2px;top:234.7px" width="13" height="13" viewBox="0 0 14 14"><rect x="1" y="8" width="12" height="5" fill="url(#rb)"/><path d="M7 1V8M3 3H11V8M3 3V8" stroke="#333" fill="none"/></svg>
<div class="a" style="left:1187.7px;top:253.8px;width:12.0px;height:1px;background:#c4c9d1;border-bottom:1px solid #fff"></div>
<svg class="a dk" style="left:1187.2px;top:258.3px" width="13" height="13" viewBox="0 0 14 14"><path d="M1 3H10M3 3V9M1 9H10" stroke="#333"/><rect x="7" y="7" width="7" height="7" fill="#fff" stroke="#222"/><path d="M9 12V10H12" stroke="#222" fill="none"/></svg>
<svg class="a dk" style="left:1187.2px;top:274.0px" width="13" height="13" viewBox="0 0 14 14"><path d="M1 1H6V4H9V9H1Z" fill="#ccc" stroke="#333"/><rect x="7" y="7" width="7" height="7" fill="#fff" stroke="#222"/><path d="M9 12V10H12" stroke="#222" fill="none"/></svg>
<svg class="a dk" style="left:1187.2px;top:291.2px" width="13" height="13" viewBox="0 0 14 14"><path d="M1 1H6V4H9V9H1Z" fill="#ccc" stroke="#333"/><rect x="7" y="7" width="7" height="7" fill="#fff" stroke="#222"/><path d="M9 12V10H12" stroke="#222" fill="none"/></svg>
<svg class="a dk" style="left:1187.2px;top:308.5px" width="13" height="13" viewBox="0 0 14 14"><path d="M2 1H9M2 1V10M5 1V10M8 1V10" stroke="#333"/><rect x="7" y="7" width="7" height="7" fill="#fff" stroke="#222"/><path d="M9 12V10H12" stroke="#222" fill="none"/></svg>
<svg class="a dk" style="left:1187.2px;top:325.8px" width="13" height="13" viewBox="0 0 14 14"><path d="M3 1H7V5L10 9H1L3 5Z" fill="#ddd" stroke="#444"/><rect x="7" y="7" width="7" height="7" fill="#fff" stroke="#222"/><path d="M9 12V10H12" stroke="#222" fill="none"/></svg>
<svg class="a dk" style="left:1187.2px;top:341.5px" width="13" height="13" viewBox="0 0 14 14"><path d="M3 1H7V5L10 9H1L3 5Z" fill="#ddd" stroke="#444"/><rect x="7" y="7" width="7" height="7" fill="#fff" stroke="#222"/><path d="M9 12V10H12" stroke="#222" fill="none"/></svg>
<svg class="a dk" style="left:1187.2px;top:357.2px" width="13" height="13" viewBox="0 0 14 14"><path d="M3 1H7V5L10 9H1L3 5Z" fill="#ddd" stroke="#444"/><rect x="7" y="7" width="7" height="7" fill="#fff" stroke="#222"/><path d="M9 12V10H12" stroke="#222" fill="none"/></svg>
<svg class="a dk" style="left:1187.2px;top:373.5px" width="13" height="13" viewBox="0 0 14 14"><rect x="1" y="2" width="10" height="7" fill="#dde" stroke="#2a2aa0"/><rect x="7" y="7" width="7" height="7" fill="#fff" stroke="#222"/><path d="M9 12V10H12" stroke="#222" fill="none"/></svg>
<svg class="a dk" style="left:1187.2px;top:391.5px" width="13" height="13" viewBox="0 0 14 14"><rect x="1" y="2" width="10" height="7" fill="#dde" stroke="#2a2aa0"/><rect x="7" y="7" width="7" height="7" fill="#fff" stroke="#222"/><path d="M9 12V10H12" stroke="#222" fill="none"/></svg>
<svg class="a dk" style="left:1187.2px;top:407.8px" width="13" height="13" viewBox="0 0 14 14"><rect x="1" y="2" width="10" height="7" fill="#dde" stroke="#2a2aa0"/><rect x="7" y="7" width="7" height="7" fill="#fff" stroke="#222"/><path d="M9 12V10H12" stroke="#222" fill="none"/></svg>
<svg class="a dk" style="left:1187.2px;top:425.8px" width="13" height="13" viewBox="0 0 14 14"><path d="M1 2H11M3 2V12M8 2V12" stroke="#2a4a60" stroke-width="2"/><rect x="7" y="7" width="7" height="7" fill="#fff" stroke="#222"/><path d="M9 12V10H12" stroke="#222" fill="none"/></svg>
<div class="a" style="left:1187.7px;top:443.7px;width:12.0px;height:1px;background:#c4c9d1;border-bottom:1px solid #fff"></div>
<svg class="a dk" style="left:1187.2px;top:450.3px" width="13" height="13" viewBox="0 0 14 14"><path d="M1 12L10 2" stroke="#333" stroke-width="2"/><path d="M2 9L5 6" stroke="#e8d800" stroke-width="2"/><rect x="7" y="7" width="7" height="7" fill="#e83030" stroke="#222"/><path d="M9 12V10H12" stroke="#fff" fill="none"/></svg>
<svg class="a dk" style="left:1187.2px;top:466.5px" width="13" height="13" viewBox="0 0 14 14"><path d="M1 9Q6 0 11 9Z" fill="#e8d800" stroke="#222"/><rect x="7" y="7" width="7" height="7" fill="#e83030" stroke="#222"/><path d="M9 12V10H12" stroke="#fff" fill="none"/></svg>
<svg class="a dk" style="left:1187.2px;top:483.0px" width="13" height="13" viewBox="0 0 14 14"><path d="M4 1V9M2 9H8M4 3L7 7H4" stroke="#335" fill="none"/><rect x="7" y="7" width="7" height="7" fill="#fff" stroke="#222"/><path d="M9 12V10H12" stroke="#222" fill="none"/></svg>
<svg class="a dk" style="left:1187.2px;top:499.3px" width="13" height="13" viewBox="0 0 14 14"><path d="M4 1V5M1 5H8V9H1Z" stroke="#335" fill="#cde"/><rect x="7" y="7" width="7" height="7" fill="#fff" stroke="#222"/><path d="M9 12V10H12" stroke="#222" fill="none"/></svg>
<div class="a" style="left:1187.7px;top:517.3px;width:12.0px;height:1px;background:#c4c9d1;border-bottom:1px solid #fff"></div>
<svg class="a dk" style="left:1187.2px;top:522.2px" width="13" height="13" viewBox="0 0 14 14"><path d="M1 3H7M1 6H7M1 9H7" stroke="#e02020" stroke-width="1.4"/><path d="M2 2L1 3L2 4" stroke="#e02020"/><rect x="7" y="7" width="7" height="7" fill="#fff" stroke="#222"/><path d="M9 12V10H12" stroke="#222" fill="none"/></svg>
<svg class="a dk" style="left:1187.2px;top:540.2px" width="13" height="13" viewBox="0 0 14 14"><path d="M1 5H7" stroke="#e02020" stroke-width="1.6"/><path d="M8 1L6 4" stroke="#999"/><rect x="7" y="7" width="7" height="7" fill="#fff" stroke="#222"/><path d="M9 12V10H12" stroke="#222" fill="none"/></svg>
<svg class="a dk" style="left:1187.2px;top:556.5px" width="13" height="13" viewBox="0 0 14 14"><rect x="1" y="1" width="9" height="9" fill="#ddd" stroke="#333"/><path d="M5 1V10M1 5H10" stroke="#333"/><rect x="7" y="7" width="7" height="7" fill="#fff" stroke="#222"/><path d="M9 12V10H12" stroke="#222" fill="none"/></svg>
<div class="a" style="left:1187.7px;top:574.4px;width:12.0px;height:1px;background:#c4c9d1;border-bottom:1px solid #fff"></div>
<svg class="a dk" style="left:1187.2px;top:579.4px" width="13" height="13" viewBox="0 0 14 14"><path d="M3 1H9L12 4V13H3Z" fill="#fff" stroke="#e02020"/><path d="M5 8H10M5 10H10" stroke="#e02020"/></svg>
<svg class="a dk" style="left:1187.2px;top:595.7px" width="13" height="13" viewBox="0 0 14 14"><rect x="1" y="1" width="11" height="9" fill="#fff" stroke="#111" stroke-width="1.3"/><rect x="7" y="7" width="7" height="7" fill="#e83030" stroke="#222"/><path d="M9 12V10H12" stroke="#fff" fill="none"/></svg>
<svg class="a dk" style="left:1187.2px;top:612.1px" width="13" height="13" viewBox="0 0 14 14"><path d="M1 6H8M5 2V10" stroke="#111" stroke-width="1.4"/><circle cx="5" cy="6" r="1.5" fill="#111"/><rect x="7" y="7" width="7" height="7" fill="#e83030" stroke="#222"/><path d="M9 12V10H12" stroke="#fff" fill="none"/></svg>
<div class="a" style="left:1184.7px;top:639px;width:18.0px;height:157px;background:linear-gradient(90deg,#e3e7ed,#f3f5f8 45%,#e6e9ee);border-radius:2px 2px 3px 3px"></div>
<div class="a" style="left:1188.7px;top:642px;width:11px;height:2px;background:repeating-linear-gradient(90deg,#8a94a2 0 1.5px,transparent 1.5px 3px)"></div>
<svg class="a dk" style="left:1187.2px;top:647.8px" width="13" height="13" viewBox="0 0 14 14"><rect x="1" y="1" width="11" height="5" fill="#fff" stroke="#333"/><path d="M2 3H11" stroke="#333" stroke-dasharray="1 1"/><rect x="7" y="7" width="7" height="7" fill="#fff" stroke="#222"/><path d="M9 12V10H12" stroke="#222" fill="none"/></svg>
<svg class="a dk" style="left:1187.2px;top:664.4px" width="13" height="13" viewBox="0 0 14 14"><path d="M1 3H10M1 6H10M1 9H7" stroke="#333"/><rect x="7" y="7" width="7" height="7" fill="#fff" stroke="#222"/><path d="M9 12V10H12" stroke="#222" fill="none"/></svg>
<svg class="a dk" style="left:1187.2px;top:681.0px" width="13" height="13" viewBox="0 0 14 14"><circle cx="5" cy="6" r="4" fill="none" stroke="#333" stroke-width="1.5"/><circle cx="5" cy="6" r="2" fill="none" stroke="#333"/><rect x="7" y="7" width="7" height="7" fill="#fff" stroke="#222"/><path d="M9 12V10H12" stroke="#222" fill="none"/></svg>
<svg class="a dk" style="left:1187.2px;top:697.6px" width="13" height="13" viewBox="0 0 14 14"><path d="M2 12V4L5 1V12M5 5H8V12" stroke="#2a5a90" fill="#cde"/><rect x="7" y="7" width="7" height="7" fill="#fff" stroke="#222"/><path d="M9 12V10H12" stroke="#222" fill="none"/></svg>
<svg class="a dk" style="left:1187.2px;top:714.2px" width="13" height="13" viewBox="0 0 14 14"><path d="M1 3H12M1 6H12" stroke="#335" stroke-width="2"/><rect x="7" y="7" width="7" height="7" fill="#fff" stroke="#222"/><path d="M9 12V10H12" stroke="#222" fill="none"/></svg>
<svg class="a dk" style="left:1187.2px;top:730.8px" width="13" height="13" viewBox="0 0 14 14"><path d="M3 1V12M6 1V12M9 1V12M1 4H12" stroke="#c01010" stroke-width="1.5"/><rect x="7" y="7" width="7" height="7" fill="#fff" stroke="#222"/><path d="M9 12V10H12" stroke="#222" fill="none"/></svg>
<svg class="a dk" style="left:1187.2px;top:747.4px" width="13" height="13" viewBox="0 0 14 14"><path d="M1 3H12M1 6H12M3 1V10M6 1V10M9 1V10" stroke="#4a8ad0" stroke-width="1.2" stroke-dasharray="1.5 0.8"/><rect x="7" y="7" width="7" height="7" fill="#fff" stroke="#222"/><path d="M9 12V10H12" stroke="#222" fill="none"/></svg>
<svg class="a dk" style="left:1187.2px;top:764.0px" width="13" height="13" viewBox="0 0 14 14"><path d="M1 2H12L8 7M1 2L5 7" stroke="#2a5a90" fill="none"/><rect x="7" y="7" width="7" height="7" fill="#fff" stroke="#222"/><path d="M9 12V10H12" stroke="#222" fill="none"/></svg>
<div class="a" style="left:1184.7px;top:786px;width:18px;height:10px;background:linear-gradient(#cdd2da,#bfc5ce)"></div>
<div class="a" id="vpR"><svg class="a" style="left:0;top:0" width="560" height="590" viewBox="580 137 560 590">
<path d="M726 533L735 577M765 520L781 562.6M804 510L821.6 549M837 500L858.6 537M872 490.5L893.6 525.6M903 481L928.7 514M934.5 471L961.8 503M965.7 463L994 493M995 455.8L1021.4 483.4M1010 450.7L1036.5 478.4M1020 448L1047.8 474.6M695.0 377.0L673 383M697.5 388.0L662 394M698.2 391.0L662 397M700.5 401.5L663 407.5M703.8 416.0L664 422M706.9 430.0L665 436M707.8 434.0L665 440M710.8 447.7L667 453.7M715.8 470.0L668 476M720.3 490.0L670 496M725.9 514.8L672 520.8M732.3 543.6L674 549.6M1040 442L1135.7 445.7M1040 442L1125.7 418M1051.5 396.7L1135.7 424.4M1050 405L1120 414M1047.8 385.4L1080.5 393M1047.8 375.4L1062.9 381.7M1040 442L1073 467M1040 442L1057.8 472M1050 425.6L1085.5 463.3M1050 420.6L1100.5 458.3M1050 415.6L1122 450.7M1032.7 370.4L1094 400.5M1040 380L1101 410M1030 365L1046 372" stroke="#8c8c8c" stroke-width="0.8" fill="none"/>
<path d="M734 576h2v2h-2zM780 561.6h2v2h-2zM820.6 548h2v2h-2zM857.6 536h2v2h-2zM892.6 524.6h2v2h-2zM927.7 513h2v2h-2zM960.8 502h2v2h-2zM993 492h2v2h-2zM1020.4 482.4h2v2h-2zM1035.5 477.4h2v2h-2zM1046.8 473.6h2v2h-2zM672 382h2v2h-2zM661 393h2v2h-2zM661 396h2v2h-2zM662 406.5h2v2h-2zM663 421h2v2h-2zM664 435h2v2h-2zM664 439h2v2h-2zM666 452.7h2v2h-2zM667 475h2v2h-2zM669 495h2v2h-2zM671 519.8h2v2h-2zM673 548.6h2v2h-2zM1134.7 444.7h2v2h-2zM1124.7 417h2v2h-2zM1134.7 423.4h2v2h-2zM1119 413h2v2h-2zM1079.5 392h2v2h-2zM1061.9 380.7h2v2h-2zM1072 466h2v2h-2zM1056.8 471h2v2h-2zM1084.5 462.3h2v2h-2zM1099.5 457.3h2v2h-2zM1121 449.7h2v2h-2zM1093 399.5h2v2h-2zM1100 409h2v2h-2zM1045 371h2v2h-2z" fill="#c83010"/>
<path d="M727.0 534.0L1043.0 442.0" stroke="#1e90ea" stroke-width="6" stroke-dasharray="3 1.2"/>
<path d="M727.0 534.0L1043.0 442.0" stroke="#000" stroke-width="0.8"/>
<path d="M727.0 534.0l-3 -14M762.1111111111111 523.7777777777777l-3 -14M797.2222222222222 513.5555555555555l-3 -14M832.3333333333334 503.33333333333337l-3 -14M867.4444444444445 493.1111111111111l-3 -14M902.5555555555555 482.8888888888889l-3 -14M937.6666666666666 472.66666666666663l-3 -14M972.7777777777778 462.44444444444446l-3 -14M1007.8888888888889 452.22222222222223l-3 -14M1043.0 442.0l-3 -14" stroke="#1e90ea" stroke-width="5" stroke-dasharray="2.5 1"/>
<path d="M727.0 534.0L726.0 509.0M762.1111111111111 523.7777777777777L761.4444444444443 498.99999999999994M797.2222222222222 513.5555555555555L796.8888888888888 489.0M832.3333333333334 503.33333333333337L832.3333333333334 479.0M867.4444444444445 493.1111111111111L867.7777777777778 469.0M902.5555555555555 482.8888888888889L903.2222222222222 459.0M937.6666666666666 472.66666666666663L938.6666666666666 449.0M972.7777777777778 462.44444444444446L974.1111111111111 439.0M1007.8888888888889 452.22222222222223L1009.5555555555555 429.0M1043.0 442.0L1045.0 419.0" stroke="#0e3a06" stroke-width="4.6"/><path d="M727.0 534.0L726.0 509.0M762.1111111111111 523.7777777777777L761.4444444444443 498.99999999999994M797.2222222222222 513.5555555555555L796.8888888888888 489.0M832.3333333333334 503.33333333333337L832.3333333333334 479.0M867.4444444444445 493.1111111111111L867.7777777777778 469.0M902.5555555555555 482.8888888888889L903.2222222222222 459.0M937.6666666666666 472.66666666666663L938.6666666666666 449.0M972.7777777777778 462.44444444444446L974.1111111111111 439.0M1007.8888888888889 452.22222222222223L1009.5555555555555 429.0M1043.0 442.0L1045.0 419.0" stroke="#50e820" stroke-width="3"/>
<clipPath id="slc"><polygon points="692,367 945,329 990,352 1000,368 1027,372 1048,400 1046,420 724,509"/></clipPath><g clip-path="url(#slc)">
<polygon points="690,368 972,326 1045,419 726,509" fill="#050d08"/>
<path d="M690.0 368.0L726.0 509.0M698.5 366.7L735.7 506.3M707.1 365.5L745.3 503.5M715.6 364.2L755.0 500.8M724.2 362.9L764.7 498.1M732.7 361.6L774.3 495.4M741.3 360.4L784.0 492.6M749.8 359.1L793.7 489.9M758.4 357.8L803.3 487.2M766.9 356.5L813.0 484.5M775.5 355.3L822.7 481.7M784.0 354.0L832.3 479.0M792.5 352.7L842.0 476.3M801.1 351.5L851.7 473.5M809.6 350.2L861.3 470.8M818.2 348.9L871.0 468.1M826.7 347.6L880.7 465.4M835.3 346.4L890.3 462.6M843.8 345.1L900.0 459.9M852.4 343.8L909.7 457.2M860.9 342.5L919.3 454.5M869.5 341.3L929.0 451.7M878.0 340.0L938.7 449.0M886.5 338.7L948.3 446.3M895.1 337.5L958.0 443.5M903.6 336.2L967.7 440.8M912.2 334.9L977.3 438.1M920.7 333.6L987.0 435.4M929.3 332.4L996.7 432.6M937.8 331.1L1006.3 429.9M946.4 329.8L1016.0 427.2M954.9 328.5L1025.7 424.5M963.5 327.3L1035.3 421.7M972.0 326.0L1045.0 419.0M690.0 368.0L972.0 326.0M692.1 376.3L976.3 331.5M694.2 384.6L980.6 336.9M696.4 392.9L984.9 342.4M698.5 401.2L989.2 347.9M700.6 409.5L993.5 353.4M702.7 417.8L997.8 358.8M704.8 426.1L1002.1 364.3M706.9 434.4L1006.4 369.8M709.1 442.6L1010.6 375.2M711.2 450.9L1014.9 380.7M713.3 459.2L1019.2 386.2M715.4 467.5L1023.5 391.6M717.5 475.8L1027.8 397.1M719.6 484.1L1032.1 402.6M721.8 492.4L1036.4 408.1M723.9 500.7L1040.7 413.5M726.0 509.0L1045.0 419.0" stroke="#1a2c36" stroke-width="1.5"/>
<path d="M690.0 368.0L726.0 509.0M698.5 366.7L735.7 506.3M707.1 365.5L745.3 503.5M715.6 364.2L755.0 500.8M724.2 362.9L764.7 498.1M732.7 361.6L774.3 495.4M741.3 360.4L784.0 492.6M749.8 359.1L793.7 489.9M758.4 357.8L803.3 487.2M766.9 356.5L813.0 484.5M775.5 355.3L822.7 481.7M784.0 354.0L832.3 479.0M792.5 352.7L842.0 476.3M801.1 351.5L851.7 473.5M809.6 350.2L861.3 470.8M818.2 348.9L871.0 468.1M826.7 347.6L880.7 465.4M835.3 346.4L890.3 462.6M843.8 345.1L900.0 459.9M852.4 343.8L909.7 457.2M860.9 342.5L919.3 454.5M869.5 341.3L929.0 451.7M878.0 340.0L938.7 449.0M886.5 338.7L948.3 446.3M895.1 337.5L958.0 443.5M903.6 336.2L967.7 440.8M912.2 334.9L977.3 438.1M920.7 333.6L987.0 435.4M929.3 332.4L996.7 432.6M937.8 331.1L1006.3 429.9M946.4 329.8L1016.0 427.2M954.9 328.5L1025.7 424.5M963.5 327.3L1035.3 421.7M972.0 326.0L1045.0 419.0M690.0 368.0L972.0 326.0M692.1 376.3L976.3 331.5M694.2 384.6L980.6 336.9M696.4 392.9L984.9 342.4M698.5 401.2L989.2 347.9M700.6 409.5L993.5 353.4M702.7 417.8L997.8 358.8M704.8 426.1L1002.1 364.3M706.9 434.4L1006.4 369.8M709.1 442.6L1010.6 375.2M711.2 450.9L1014.9 380.7M713.3 459.2L1019.2 386.2M715.4 467.5L1023.5 391.6M717.5 475.8L1027.8 397.1M719.6 484.1L1032.1 402.6M721.8 492.4L1036.4 408.1M723.9 500.7L1040.7 413.5M726.0 509.0L1045.0 419.0" stroke="#2a3a50" stroke-width="0.5"/>
<path d="M691.8 369.3L697.5 368.4L698.9 373.7L693.2 374.6zM696.1 385.8L701.8 384.9L703.2 390.1L697.5 391.1zM700.4 402.4L706.2 401.3L707.6 406.6L701.7 407.7zM706.7 427.2L712.7 426.0L714.1 431.2L708.1 432.5zM708.9 435.5L714.9 434.2L716.3 439.5L710.2 440.8zM713.1 452.1L719.2 450.7L720.6 455.9L714.5 457.4zM717.4 468.6L723.6 467.1L724.9 472.4L718.7 473.9zM721.6 485.2L727.9 483.5L729.3 488.8L723.0 490.5zM725.9 501.7L732.2 500.0L733.6 505.3L727.3 507.0zM700.4 368.0L706.0 367.1L707.5 372.3L701.8 373.2zM702.6 376.2L708.3 375.3L709.7 380.5L704.0 381.4zM704.8 384.4L710.5 383.4L712.0 388.6L706.2 389.6zM707.0 392.6L712.8 391.5L714.2 396.8L708.4 397.8zM711.4 409.0L717.2 407.8L718.7 413.0L712.8 414.2zM715.8 425.3L721.7 424.1L723.1 429.3L717.2 430.6zM720.1 441.7L726.2 440.4L727.6 445.6L721.6 447.0zM724.5 458.1L730.7 456.6L732.1 461.9L725.9 463.4zM726.7 466.3L732.9 464.8L734.3 470.0L728.1 471.6zM728.9 474.5L735.1 472.9L736.6 478.1L730.3 479.8zM731.1 482.7L737.4 481.1L738.8 486.3L732.5 487.9zM733.3 490.9L739.6 489.2L741.0 494.4L734.7 496.1zM735.5 499.1L741.9 497.3L743.3 502.5L736.9 504.3zM709.0 366.7L714.6 365.8L716.1 371.0L710.4 371.9zM711.2 374.8L716.9 373.9L718.4 379.1L712.7 380.0zM713.5 382.9L719.2 382.0L720.7 387.1L714.9 388.1zM722.5 415.3L728.4 414.2L729.9 419.3L724.0 420.5zM727.0 431.6L733.0 430.3L734.5 435.4L728.5 436.8zM731.6 447.8L737.6 446.4L739.1 451.5L733.0 453.0zM736.1 464.0L742.2 462.5L743.7 467.6L737.5 469.2zM740.6 480.2L746.9 478.6L748.3 483.7L742.0 485.4zM742.9 488.3L749.2 486.6L750.6 491.8L744.3 493.5zM745.1 496.4L751.5 494.7L752.9 499.8L746.6 501.6zM717.5 365.4L723.2 364.6L724.7 369.7L719.0 370.5zM719.8 373.4L725.5 372.5L727.0 377.6L721.3 378.6zM722.2 381.5L727.9 380.5L729.4 385.6L723.7 386.6zM724.5 389.5L730.3 388.5L731.8 393.6L726.0 394.6zM729.1 405.5L735.0 404.4L736.5 409.5L730.6 410.7zM731.5 413.5L737.4 412.4L738.9 417.5L733.0 418.7zM733.8 421.6L739.7 420.3L741.3 425.4L735.3 426.7zM738.4 437.6L744.5 436.3L746.0 441.4L739.9 442.8zM743.1 453.7L749.2 452.2L750.7 457.3L744.6 458.8zM747.8 469.7L754.0 468.1L755.5 473.2L749.2 474.8zM752.4 485.8L758.7 484.1L760.2 489.2L753.9 490.9zM754.7 493.8L761.1 492.0L762.6 497.1L756.2 498.9zM728.5 372.1L734.1 371.2L735.7 376.2L730.0 377.1zM730.9 380.0L736.6 379.0L738.1 384.1L732.4 385.1zM735.6 395.9L741.5 394.8L743.0 399.8L737.2 401.0zM738.0 403.8L743.9 402.7L745.5 407.7L739.6 408.9zM740.4 411.7L746.3 410.6L747.9 415.6L742.0 416.8zM745.2 427.6L751.2 426.3L752.8 431.4L746.7 432.7zM750.0 443.5L756.1 442.1L757.6 447.1L751.5 448.6zM754.8 459.4L760.9 457.8L762.5 462.9L756.3 464.4zM757.2 467.3L763.4 465.7L764.9 470.8L758.7 472.4zM759.6 475.2L765.8 473.6L767.4 478.6L761.1 480.3zM762.0 483.2L768.3 481.5L769.8 486.5L763.5 488.3zM764.3 491.1L770.7 489.4L772.3 494.4L765.9 496.2zM737.1 370.7L742.8 369.8L744.4 374.8L738.7 375.7zM742.0 386.4L747.8 385.4L749.4 390.4L743.6 391.4zM746.9 402.1L752.8 401.0L754.4 405.9L748.5 407.1zM754.3 425.6L760.3 424.3L761.9 429.3L755.9 430.7zM756.8 433.5L762.8 432.1L764.4 437.1L758.3 438.5zM759.2 441.4L765.3 439.9L766.9 444.9L760.8 446.4zM761.7 449.2L767.8 447.7L769.4 452.7L763.2 454.2zM766.6 464.9L772.8 463.3L774.4 468.3L768.2 469.9zM771.5 480.6L777.8 478.9L779.4 483.9L773.1 485.6zM743.2 361.5L748.8 360.7L750.5 365.6L744.8 366.5zM748.2 377.1L754.0 376.1L755.6 381.0L749.8 382.0zM753.3 392.6L759.1 391.5L760.7 396.5L754.9 397.6zM755.8 400.4L761.7 399.2L763.3 404.2L757.4 405.3zM758.3 408.1L764.2 407.0L765.9 411.9L759.9 413.1zM763.4 423.7L769.4 422.4L771.0 427.3L765.0 428.6zM768.4 439.2L774.5 437.8L776.2 442.7L770.0 444.2zM773.5 454.7L779.6 453.2L781.3 458.1L775.1 459.7zM783.6 485.8L789.9 484.1L791.6 489.0L785.2 490.8zM754.3 367.9L760.0 367.0L761.7 371.9L756.0 372.9zM759.5 383.3L765.3 382.3L767.0 387.2L761.2 388.2zM764.7 398.7L770.6 397.5L772.2 402.4L766.3 403.6zM767.3 406.3L773.2 405.2L774.9 410.0L768.9 411.3zM775.1 429.4L781.1 428.0L782.8 432.9L776.7 434.3zM777.6 437.1L783.7 435.6L785.4 440.5L779.3 442.0zM780.2 444.7L786.4 443.3L788.0 448.2L781.9 449.7zM785.4 460.1L791.6 458.5L793.3 463.4L787.1 465.0zM790.6 475.5L796.9 473.8L798.6 478.6L792.3 480.4zM760.3 359.0L765.9 358.1L767.7 362.9L762.0 363.8zM765.6 374.2L771.3 373.2L773.1 378.0L767.3 379.0zM770.9 389.3L776.7 388.3L778.5 393.1L772.6 394.2zM776.2 404.5L782.1 403.4L783.9 408.2L777.9 409.4zM778.9 412.1L784.8 410.9L786.6 415.7L780.6 417.0zM781.5 419.7L787.5 418.4L789.3 423.3L783.2 424.6zM786.9 434.9L792.9 433.5L794.7 438.3L788.6 439.8zM792.2 450.1L798.3 448.6L800.1 453.4L793.9 455.0zM797.5 465.3L803.7 463.7L805.5 468.5L799.2 470.2zM802.8 480.5L809.1 478.7L810.9 483.6L804.5 485.4zM771.6 365.2L777.3 364.3L779.0 369.1L773.3 370.0zM777.0 380.2L782.8 379.2L784.6 384.0L778.8 385.0zM782.5 395.2L788.3 394.1L790.1 398.9L784.2 400.0zM787.9 410.2L793.9 409.0L795.6 413.8L789.7 415.1zM793.4 425.3L799.4 423.9L801.2 428.7L795.1 430.1zM798.8 440.3L804.9 438.8L806.7 443.6L800.5 445.1zM804.2 455.3L810.5 453.7L812.2 458.5L806.0 460.1zM807.0 462.8L813.2 461.2L815.0 465.9L808.7 467.6zM809.7 470.3L816.0 468.6L817.8 473.4L811.4 475.1zM777.4 356.4L783.1 355.5L784.9 360.3L779.2 361.1zM783.0 371.2L788.7 370.3L790.5 375.0L784.8 376.0zM794.1 400.9L800.0 399.7L801.9 404.5L795.9 405.7zM799.7 415.8L805.7 414.5L807.5 419.2L801.5 420.5zM805.3 430.6L811.4 429.2L813.2 433.9L807.1 435.4zM810.9 445.5L817.0 444.0L818.9 448.7L812.7 450.2zM819.2 467.8L825.5 466.1L827.3 470.8L821.0 472.5zM822.0 475.2L828.4 473.4L830.2 478.1L823.8 479.9zM786.0 355.1L791.6 354.3L793.5 358.9L787.8 359.8zM788.8 362.4L794.5 361.5L796.4 366.2L790.6 367.1zM791.7 369.8L797.4 368.8L799.3 373.5L793.5 374.5zM794.5 377.1L800.3 376.1L802.2 380.8L796.4 381.8zM800.2 391.8L806.1 390.7L808.0 395.3L802.1 396.5zM803.1 399.1L809.0 397.9L810.9 402.6L804.9 403.8zM805.9 406.5L811.9 405.2L813.8 409.9L807.8 411.2zM811.7 421.2L817.7 419.8L819.5 424.5L813.5 425.8zM817.4 435.8L823.5 434.4L825.3 439.0L819.2 440.5zM823.1 450.5L829.3 448.9L831.1 453.6L824.9 455.2zM828.8 465.2L835.1 463.5L836.9 468.1L830.6 469.9zM794.5 353.8L800.2 353.0L802.1 357.6L796.4 358.5zM800.4 368.3L806.1 367.4L808.0 372.0L802.2 373.0zM803.3 375.6L809.1 374.6L811.0 379.2L805.2 380.2zM806.2 382.8L812.0 381.8L813.9 386.4L808.1 387.5zM815.0 404.6L820.9 403.3L822.8 407.9L816.8 409.2zM823.7 426.3L829.8 424.9L831.7 429.5L825.6 431.0zM829.6 440.9L835.7 439.3L837.6 443.9L831.4 445.5zM832.5 448.1L838.7 446.5L840.6 451.1L834.4 452.7zM835.4 455.4L841.7 453.7L843.6 458.3L837.3 460.0zM841.2 469.9L847.6 468.1L849.5 472.7L843.1 474.5zM803.1 352.5L808.7 351.7L810.7 356.2L805.0 357.1zM806.1 359.7L811.8 358.8L813.7 363.3L808.0 364.3zM809.1 366.9L814.8 365.9L816.7 370.5L811.0 371.4zM812.0 374.0L817.8 373.0L819.8 377.6L814.0 378.6zM818.0 388.4L823.9 387.2L825.8 391.8L819.9 393.0zM821.0 395.5L826.9 394.3L828.8 398.9L822.9 400.1zM827.0 409.9L833.0 408.6L834.9 413.1L828.9 414.5zM830.0 417.0L836.0 415.7L837.9 420.2L831.9 421.6zM832.9 424.2L839.0 422.8L841.0 427.3L834.9 428.8zM835.9 431.4L842.1 429.9L844.0 434.4L837.8 436.0zM841.9 445.7L848.1 444.1L850.1 448.7L843.8 450.3zM844.9 452.9L851.1 451.2L853.1 455.8L846.8 457.5zM811.6 351.2L817.3 350.4L819.3 354.9L813.6 355.8zM817.7 365.4L823.5 364.4L825.5 368.9L819.7 369.9zM823.8 379.6L829.7 378.5L831.7 383.0L825.8 384.1zM842.2 422.1L848.2 420.6L850.2 425.1L844.1 426.6zM845.2 429.1L851.3 427.7L853.3 432.2L847.2 433.7zM854.4 450.4L860.6 448.7L862.6 453.2L856.3 454.9zM860.5 464.5L866.8 462.8L868.8 467.3L862.4 469.1zM823.3 356.9L829.0 356.0L831.0 360.5L825.3 361.4zM829.6 370.9L835.3 369.9L837.4 374.4L831.5 375.4zM842.0 398.9L848.0 397.7L850.0 402.1L844.0 403.4zM854.5 426.9L860.6 425.4L862.6 429.9L856.5 431.4zM860.7 440.9L866.9 439.3L869.0 443.8L862.7 445.4zM867.0 454.9L873.3 453.2L875.3 457.6L869.0 459.4zM828.8 348.7L834.4 347.8L836.5 352.2L830.8 353.1zM835.1 362.5L840.9 361.5L842.9 365.9L837.2 366.9zM838.3 369.4L844.1 368.4L846.1 372.8L840.3 373.8zM841.5 376.3L847.3 375.2L849.4 379.6L843.5 380.7zM847.9 390.1L853.8 388.9L855.8 393.3L849.9 394.6zM854.2 403.9L860.2 402.6L862.3 407.0L856.3 408.4zM867.0 431.6L873.1 430.1L875.2 434.4L869.0 436.0zM870.1 438.5L876.4 436.9L878.4 441.3L872.2 442.9zM873.3 445.4L879.6 443.8L881.7 448.2L875.4 449.8zM879.7 459.2L886.0 457.5L888.1 461.9L881.7 463.7zM837.3 347.4L843.0 346.5L845.1 350.9L839.4 351.7zM840.6 354.2L846.3 353.3L848.4 357.6L842.6 358.6zM850.3 374.7L856.1 373.6L858.2 377.9L852.4 379.0zM853.6 381.5L859.4 380.4L861.5 384.7L855.6 385.9zM856.8 388.3L862.7 387.1L864.8 391.5L858.9 392.7zM860.1 395.2L866.0 393.9L868.1 398.2L862.1 399.5zM866.6 408.8L872.6 407.4L874.7 411.8L868.6 413.2zM886.1 449.8L892.4 448.1L894.5 452.4L888.1 454.1zM852.5 359.6L858.2 358.6L860.4 362.9L854.6 363.9zM862.4 379.8L868.3 378.7L870.5 382.9L864.6 384.1zM869.1 393.3L875.0 392.0L877.2 396.3L871.2 397.6zM872.4 400.0L878.4 398.7L880.5 403.0L874.5 404.3zM875.7 406.7L881.8 405.4L883.9 409.7L877.8 411.1zM879.0 413.5L885.1 412.1L887.3 416.3L881.2 417.8zM885.7 427.0L891.8 425.4L894.0 429.7L887.8 431.3zM892.3 440.4L898.5 438.8L900.7 443.1L894.4 444.8zM898.9 453.9L905.3 452.2L907.4 456.4L901.0 458.2zM857.8 351.5L863.5 350.5L865.7 354.8L860.0 355.7zM861.2 358.1L866.9 357.1L869.1 361.4L863.4 362.4zM871.3 378.1L877.2 376.9L879.4 381.2L873.5 382.3zM874.7 384.7L880.6 383.5L882.8 387.8L876.9 389.0zM878.1 391.4L884.1 390.1L886.2 394.4L880.3 395.6zM884.9 404.7L890.9 403.3L893.1 407.5L887.0 408.9zM891.6 418.0L897.8 416.5L899.9 420.7L893.8 422.3zM898.4 431.3L904.6 429.7L906.8 433.9L900.6 435.6zM905.2 444.6L911.5 442.9L913.6 447.1L907.3 448.9zM869.9 356.6L875.6 355.7L877.8 359.9L872.1 360.9zM876.8 369.8L882.6 368.7L884.8 372.9L879.0 374.0zM883.7 382.9L889.6 381.7L891.8 385.9L885.9 387.1zM887.1 389.5L893.1 388.2L895.3 392.4L889.3 393.7zM890.6 396.1L896.6 394.8L898.8 398.9L892.8 400.3zM897.5 409.2L903.5 407.8L905.8 411.9L899.7 413.4zM904.4 422.3L910.5 420.8L912.8 425.0L906.6 426.5zM914.7 442.0L921.0 440.3L923.2 444.5L916.9 446.2zM918.1 448.6L924.5 446.9L926.7 451.0L920.4 452.8zM875.1 348.7L880.7 347.8L883.0 351.9L877.3 352.9zM878.6 355.2L884.3 354.2L886.6 358.3L880.8 359.3zM882.1 361.7L887.9 360.7L890.1 364.8L884.3 365.8zM889.1 374.6L895.0 373.5L897.3 377.6L891.4 378.8zM896.1 387.6L902.1 386.4L904.4 390.5L898.4 391.8zM903.2 400.6L909.2 399.2L911.5 403.3L905.4 404.7zM906.7 407.1L912.8 405.6L915.0 409.7L908.9 411.2zM910.2 413.5L916.3 412.1L918.6 416.2L912.4 417.7zM913.7 420.0L919.9 418.5L922.2 422.6L916.0 424.2zM917.2 426.5L923.4 424.9L925.7 429.0L919.5 430.6zM920.7 433.0L927.0 431.3L929.3 435.5L923.0 437.1zM924.2 439.5L930.5 437.8L932.8 441.9L926.5 443.6zM880.1 340.9L885.7 340.1L888.1 344.1L882.4 345.0zM887.3 353.7L893.0 352.8L895.3 356.8L889.5 357.8zM901.6 379.3L907.5 378.1L909.8 382.2L903.9 383.4zM905.2 385.7L911.1 384.5L913.4 388.5L907.4 389.8zM912.3 398.5L918.4 397.2L920.7 401.2L914.6 402.6zM915.9 404.9L922.0 403.5L924.3 407.6L918.2 409.0zM923.1 417.7L929.2 416.2L931.5 420.2L925.3 421.8zM926.6 424.1L932.8 422.5L935.2 426.6L928.9 428.2zM930.2 430.5L936.5 428.9L938.8 432.9L932.5 434.6zM937.4 443.3L943.7 441.5L946.0 445.6L939.7 447.4zM888.7 339.6L894.3 338.8L896.7 342.8L891.0 343.7zM892.3 346.0L898.0 345.1L900.4 349.1L894.6 350.0zM899.6 358.6L905.4 357.6L907.7 361.6L901.9 362.6zM903.2 364.9L909.1 363.8L911.4 367.8L905.6 368.9zM906.9 371.2L912.7 370.1L915.1 374.1L909.2 375.2zM914.2 383.8L920.1 382.6L922.5 386.6L916.5 387.9zM917.8 390.1L923.8 388.8L926.2 392.8L920.2 394.2zM921.5 396.5L927.5 395.1L929.9 399.1L923.8 400.5zM925.1 402.8L931.2 401.3L933.6 405.4L927.4 406.8zM928.8 409.1L934.9 407.6L937.2 411.6L931.1 413.1zM936.0 421.7L942.3 420.1L944.6 424.1L938.4 425.7zM943.3 434.3L949.6 432.6L952.0 436.6L945.7 438.4zM947.0 440.6L953.3 438.9L955.7 442.9L949.3 444.7zM897.2 338.4L902.9 337.5L905.3 341.5L899.6 342.3zM900.9 344.6L906.6 343.7L909.0 347.6L903.3 348.6zM904.6 350.8L910.4 349.8L912.8 353.8L907.0 354.8zM908.3 357.0L914.1 356.0L916.5 360.0L910.7 361.0zM912.1 363.3L917.9 362.2L920.3 366.1L914.4 367.2zM919.5 375.7L925.4 374.5L927.8 378.5L921.9 379.7zM930.6 394.4L936.7 393.0L939.1 397.0L933.0 398.4zM934.3 400.6L940.4 399.2L942.8 403.2L936.7 404.6zM941.8 413.1L947.9 411.5L950.3 415.5L944.1 417.1zM956.6 438.0L962.9 436.2L965.3 440.2L959.0 442.0zM909.5 343.2L915.2 342.3L917.7 346.2L912.0 347.1zM917.1 355.5L922.9 354.5L925.3 358.4L919.5 359.4zM924.7 367.8L930.5 366.6L933.0 370.5L927.1 371.7zM932.2 380.1L938.2 378.8L940.6 382.7L934.6 384.0zM943.5 398.5L949.6 397.1L952.1 401.0L946.0 402.4zM947.3 404.6L953.5 403.1L955.9 407.0L949.7 408.5zM954.9 416.9L961.1 415.3L963.5 419.2L957.3 420.8zM962.4 429.2L968.7 427.5L971.2 431.4L964.9 433.1zM966.2 435.3L972.6 433.6L975.0 437.5L968.6 439.2zM914.3 335.8L920.0 334.9L922.5 338.8L916.8 339.7zM922.0 347.9L927.7 346.9L930.2 350.8L924.5 351.8zM925.9 353.9L931.6 352.9L934.1 356.8L928.3 357.8zM929.7 360.0L935.5 358.9L938.0 362.8L932.2 363.9zM933.5 366.1L939.4 364.9L941.9 368.8L936.0 369.9zM937.4 372.1L943.3 370.9L945.8 374.8L939.8 376.0zM945.1 384.2L951.1 382.9L953.6 386.8L947.5 388.1zM952.8 396.3L958.8 394.9L961.3 398.8L955.2 400.2zM960.5 408.4L966.6 406.9L969.1 410.8L962.9 412.3zM968.1 420.6L974.4 418.9L976.9 422.8L970.6 424.4zM975.8 432.7L982.2 430.9L984.7 434.7L978.3 436.5zM930.7 346.4L936.4 345.5L939.0 349.3L933.2 350.3zM934.6 352.4L940.4 351.4L942.9 355.2L937.1 356.2zM942.4 364.3L948.3 363.2L950.8 367.0L944.9 368.2zM950.3 376.3L956.2 375.0L958.7 378.8L952.8 380.1zM954.2 382.2L960.2 380.9L962.7 384.7L956.7 386.1zM958.1 388.2L964.1 386.9L966.6 390.6L960.6 392.0zM965.9 400.2L972.0 398.7L974.5 402.5L968.4 404.0zM973.7 412.1L979.9 410.5L982.5 414.3L976.2 415.9zM985.4 430.0L991.8 428.3L994.3 432.0L987.9 433.8zM931.4 333.2L937.1 332.4L939.7 336.1L934.0 337.0zM939.4 345.0L945.1 344.0L947.7 347.7L941.9 348.7zM947.3 356.7L953.2 355.7L955.7 359.4L949.9 360.5zM955.3 368.5L961.2 367.3L963.8 371.1L957.8 372.3zM963.2 380.3L969.2 379.0L971.8 382.7L965.8 384.0zM971.2 392.0L977.3 390.6L979.9 394.4L973.7 395.8zM979.1 403.8L985.3 402.3L987.9 406.0L981.7 407.6zM987.1 415.6L993.4 413.9L995.9 417.7L989.6 419.3zM991.1 421.5L997.4 419.8L999.9 423.5L993.6 425.2zM995.1 427.3L1001.4 425.6L1004.0 429.3L997.6 431.1zM940.0 331.9L945.6 331.1L948.3 334.7L942.6 335.6zM960.2 360.9L966.1 359.8L968.7 363.5L962.8 364.6zM964.2 366.7L970.2 365.5L972.8 369.2L966.8 370.4zM968.3 372.5L974.2 371.3L976.9 374.9L970.9 376.2zM976.4 384.1L982.4 382.7L985.0 386.4L979.0 387.8zM980.4 389.9L986.5 388.5L989.1 392.2L983.0 393.6zM984.5 395.7L990.6 394.2L993.2 397.9L987.0 399.4zM988.5 401.5L994.7 400.0L997.3 403.6L991.1 405.2zM992.5 407.3L998.8 405.7L1001.4 409.4L995.1 411.0zM1000.6 418.9L1006.9 417.2L1009.5 420.9L1003.2 422.6zM948.6 330.6L954.2 329.8L956.9 333.4L951.2 334.3zM956.8 342.1L962.5 341.1L965.2 344.7L959.4 345.7zM965.0 353.5L970.8 352.4L973.5 356.0L967.6 357.1zM973.2 364.9L979.1 363.7L981.8 367.3L975.8 368.6zM977.3 370.6L983.3 369.4L985.9 373.0L979.9 374.3zM981.4 376.3L987.4 375.0L990.1 378.7L984.0 380.0zM989.6 387.8L995.7 386.3L998.4 390.0L992.3 391.4zM997.8 399.2L1004.0 397.7L1006.7 401.3L1000.5 402.8zM1002.0 404.9L1008.2 403.3L1010.8 406.9L1004.6 408.6zM1006.1 410.6L1012.3 409.0L1015.0 412.6L1008.7 414.3zM1014.3 422.0L1020.6 420.3L1023.3 423.9L1016.9 425.7zM961.3 335.0L967.0 334.1L969.7 337.6L964.0 338.6zM965.5 340.6L971.2 339.6L973.9 343.2L968.1 344.2zM973.8 351.9L979.6 350.8L982.3 354.3L976.5 355.5zM978.0 357.5L983.8 356.3L986.5 359.9L980.7 361.1zM986.3 368.7L992.3 367.5L995.0 371.1L989.0 372.3zM994.7 380.0L1000.7 378.6L1003.4 382.2L997.3 383.6zM1011.4 402.5L1017.6 400.9L1020.3 404.5L1014.0 406.1zM1019.7 413.7L1026.0 412.1L1028.7 415.6L1022.4 417.4zM1023.9 419.4L1030.2 417.6L1032.9 421.2L1026.6 423.0zM965.7 328.1L971.3 327.2L974.1 330.7L968.4 331.6zM974.1 339.1L979.9 338.2L982.6 341.7L976.9 342.7zM991.1 361.3L997.0 360.1L999.8 363.6L993.8 364.9zM999.6 372.4L1005.6 371.1L1008.3 374.6L1002.3 375.9zM1003.8 377.9L1009.9 376.6L1012.6 380.1L1006.5 381.5zM1008.1 383.5L1014.1 382.1L1016.9 385.6L1010.8 387.0zM1012.3 389.0L1018.4 387.5L1021.2 391.1L1015.0 392.6zM1016.5 394.6L1022.7 393.0L1025.5 396.5L1019.3 398.1zM1025.0 405.6L1031.3 404.0L1034.0 407.5L1027.7 409.2zM1033.5 416.7L1039.8 415.0L1042.6 418.5L1036.2 420.3z" fill="#4ce812"/>
<path d="M694.0 377.6L699.7 376.6L701.0 381.9L695.3 382.9zM698.2 394.1L704.0 393.1L705.4 398.4L699.6 399.4zM711.0 443.8L717.0 442.4L718.4 447.7L712.4 449.1zM715.3 460.3L721.4 458.9L722.8 464.1L716.6 465.6zM719.5 476.9L725.7 475.3L727.1 480.6L720.9 482.2zM713.6 417.1L719.5 416.0L720.9 421.2L715.0 422.4zM722.3 449.9L728.4 448.5L729.9 453.7L723.7 455.2zM720.3 407.2L726.1 406.1L727.6 411.3L721.7 412.4zM724.8 423.5L730.7 422.2L732.2 427.4L726.2 428.6zM729.3 439.7L735.3 438.3L736.8 443.5L730.7 444.9zM733.8 455.9L739.9 454.4L741.4 459.6L735.3 461.1zM738.3 472.1L744.6 470.5L746.0 475.7L739.8 477.3zM736.1 429.6L742.1 428.3L743.6 433.4L737.6 434.7zM740.8 445.6L746.9 444.2L748.4 449.3L742.3 450.8zM745.4 461.7L751.6 460.2L753.1 465.3L746.9 466.8zM752.4 451.4L758.5 450.0L760.1 455.0L753.9 456.5zM744.5 394.2L750.3 393.2L751.9 398.2L746.0 399.3zM764.1 457.1L770.3 455.5L771.9 460.5L765.7 462.1zM769.0 472.8L775.3 471.1L776.9 476.1L770.6 477.8zM774.0 488.5L780.3 486.7L781.9 491.7L775.5 493.5zM745.7 369.3L751.4 368.4L753.0 373.3L747.3 374.3zM750.8 384.8L756.5 383.8L758.2 388.8L752.4 389.8zM760.9 415.9L766.8 414.7L768.4 419.6L762.5 420.9zM765.9 431.4L771.9 430.1L773.6 435.0L767.5 436.4zM776.0 462.5L782.2 460.9L783.9 465.9L777.6 467.5zM781.0 478.0L787.3 476.3L789.0 481.3L782.7 483.0zM756.9 375.6L762.7 374.7L764.3 379.5L758.6 380.5zM762.1 391.0L767.9 389.9L769.6 394.8L763.8 395.9zM782.8 452.4L789.0 450.9L790.7 455.8L784.5 457.3zM788.0 467.8L794.3 466.1L795.9 471.0L789.7 472.7zM793.2 483.1L799.5 481.4L801.2 486.3L794.8 488.1zM763.0 366.6L768.6 365.7L770.4 370.5L764.7 371.4zM768.3 381.8L774.0 380.7L775.8 385.6L770.0 386.6zM784.2 427.3L790.2 426.0L792.0 430.8L785.9 432.2zM789.5 442.5L795.6 441.0L797.4 445.9L791.2 447.4zM794.8 457.7L801.0 456.1L802.8 460.9L796.5 462.6zM768.9 357.7L774.5 356.8L776.3 361.6L770.6 362.5zM774.3 372.7L780.0 371.7L781.8 376.5L776.0 377.5zM785.2 402.7L791.1 401.5L792.9 406.3L786.9 407.5zM790.6 417.8L796.6 416.5L798.4 421.2L792.4 422.6zM801.5 447.8L807.7 446.3L809.5 451.0L803.3 452.6zM812.4 477.8L818.8 476.1L820.5 480.8L814.2 482.6zM780.2 363.8L785.9 362.9L787.7 367.6L782.0 368.6zM785.8 378.7L791.6 377.6L793.4 382.4L787.6 383.4zM791.4 393.5L797.2 392.4L799.0 397.1L793.1 398.3zM796.9 408.4L802.9 407.1L804.7 411.8L798.7 413.1zM802.5 423.2L808.5 421.8L810.4 426.6L804.3 428.0zM808.1 438.1L814.2 436.6L816.0 441.3L809.9 442.8zM797.4 384.5L803.2 383.4L805.1 388.0L799.2 389.2zM808.8 413.8L814.8 412.5L816.7 417.2L810.6 418.5zM814.5 428.5L820.6 427.1L822.4 431.7L816.3 433.2zM825.9 457.8L832.2 456.2L834.0 460.9L827.8 462.5zM797.4 361.1L803.1 360.2L805.0 364.8L799.3 365.7zM809.1 390.1L815.0 388.9L816.9 393.6L811.0 394.7zM820.8 419.1L826.8 417.7L828.7 422.3L822.7 423.7zM826.6 433.6L832.8 432.1L834.7 436.7L828.5 438.2zM838.3 462.6L844.6 460.9L846.5 465.5L840.2 467.3zM815.0 381.2L820.8 380.1L822.8 384.7L816.9 385.8zM850.9 467.2L857.2 465.5L859.1 470.0L852.8 471.8zM814.7 358.3L820.4 357.4L822.4 361.9L816.6 362.9zM820.8 372.5L826.6 371.5L828.6 376.0L822.7 377.0zM851.3 443.3L857.5 441.7L859.5 446.2L853.3 447.8zM857.4 457.5L863.7 455.8L865.7 460.3L859.4 462.0zM820.2 350.0L825.8 349.1L827.9 353.5L822.2 354.4zM826.4 363.9L832.2 363.0L834.2 367.4L828.4 368.4zM832.7 377.9L838.5 376.9L840.5 381.3L834.7 382.4zM838.9 391.9L844.8 390.7L846.8 395.2L840.9 396.4zM845.1 405.9L851.1 404.6L853.2 409.1L847.1 410.4zM857.6 433.9L863.8 432.4L865.8 436.8L859.6 438.4zM863.9 447.9L870.1 446.3L872.1 450.7L865.8 452.4zM870.1 461.9L876.4 460.1L878.5 464.6L872.1 466.4zM831.9 355.6L837.6 354.7L839.7 359.1L834.0 360.0zM844.7 383.2L850.5 382.1L852.6 386.5L846.7 387.6zM851.0 397.0L857.0 395.8L859.1 400.2L853.1 401.5zM857.4 410.9L863.4 409.5L865.5 413.9L859.4 415.3zM863.8 424.7L869.9 423.2L872.0 427.6L865.8 429.1zM876.5 452.3L882.8 450.6L884.9 455.0L878.6 456.7zM843.8 361.0L849.5 360.1L851.7 364.4L845.9 365.4zM863.3 402.0L869.3 400.7L871.4 405.0L865.4 406.3zM869.8 415.6L875.9 414.2L878.0 418.5L871.9 420.0zM876.3 429.3L882.5 427.7L884.6 432.1L878.4 433.6zM882.3 420.2L888.5 418.8L890.6 423.0L884.5 424.5zM895.6 447.2L901.9 445.5L904.1 449.8L897.7 451.5zM868.0 371.4L873.8 370.3L876.0 374.6L870.1 375.7zM888.2 411.3L894.3 409.9L896.5 414.1L890.4 415.6zM895.0 424.6L901.2 423.1L903.4 427.3L897.2 428.9zM901.8 438.0L908.0 436.3L910.2 440.5L903.9 442.2zM908.5 451.3L914.9 449.5L917.1 453.7L910.7 455.5zM866.4 350.1L872.1 349.2L874.4 353.3L868.6 354.3zM873.3 363.2L879.1 362.2L881.3 366.4L875.5 367.4zM894.0 402.6L900.1 401.3L902.3 405.4L896.2 406.8zM900.9 415.8L907.0 414.3L909.3 418.5L903.1 420.0zM871.5 342.2L877.2 341.4L879.5 345.5L873.8 346.4zM885.6 368.2L891.4 367.1L893.7 371.2L887.8 372.3zM892.6 381.1L898.5 379.9L900.8 384.0L894.9 385.3zM899.7 394.1L905.6 392.8L907.9 396.9L901.9 398.2zM927.8 445.9L934.1 444.2L936.4 448.3L930.0 450.1zM890.8 360.1L896.6 359.1L898.9 363.2L893.1 364.2zM898.0 372.9L903.9 371.8L906.2 375.8L900.3 377.0zM919.5 411.3L925.6 409.8L927.9 413.9L921.8 415.4zM933.8 436.9L940.1 435.2L942.4 439.3L936.1 441.0zM895.9 352.3L901.7 351.3L904.0 355.3L898.3 356.3zM910.5 377.5L916.4 376.3L918.8 380.3L912.9 381.6zM932.4 415.4L938.6 413.9L940.9 417.9L934.7 419.4zM939.7 428.0L946.0 426.4L948.3 430.4L942.0 432.0zM915.8 369.5L921.6 368.4L924.0 372.3L918.1 373.5zM938.0 406.8L944.2 405.4L946.6 409.3L940.4 410.8zM945.5 419.3L951.7 417.7L954.1 421.7L947.8 423.3zM952.9 431.8L959.2 430.1L961.6 434.0L955.3 435.7zM905.8 337.1L911.4 336.2L913.9 340.1L908.2 341.0zM913.3 349.4L919.1 348.4L921.5 352.3L915.7 353.3zM920.9 361.6L926.7 360.6L929.1 364.5L923.3 365.6zM936.0 386.2L942.0 384.9L944.4 388.8L938.4 390.1zM958.7 423.0L964.9 421.4L967.4 425.3L961.1 427.0zM918.2 341.8L923.9 340.9L926.3 344.8L920.6 345.7zM941.2 378.2L947.2 376.9L949.7 380.8L943.7 382.0zM956.6 402.4L962.7 400.9L965.2 404.8L959.1 406.3zM964.3 414.5L970.5 412.9L973.0 416.8L966.8 418.4zM972.0 426.6L978.3 424.9L980.8 428.7L974.4 430.5zM922.9 334.5L928.5 333.6L931.1 337.4L925.4 338.3zM962.0 394.2L968.1 392.8L970.6 396.6L964.5 398.0zM969.8 406.1L976.0 404.6L978.5 408.4L972.3 409.9zM935.4 339.1L941.1 338.2L943.7 341.9L938.0 342.9zM943.4 350.9L949.1 349.8L951.7 353.6L945.9 354.6zM951.3 362.6L957.2 361.5L959.8 365.2L953.9 366.4zM967.2 386.2L973.3 384.8L975.8 388.5L969.8 389.9zM975.2 397.9L981.3 396.5L983.9 400.2L977.7 401.7zM983.1 409.7L989.3 408.1L991.9 411.8L985.7 413.5zM948.1 343.5L953.8 342.6L956.4 346.2L950.7 347.2zM972.3 378.3L978.3 377.0L980.9 380.7L974.9 382.0zM1004.7 424.7L1011.0 422.9L1013.6 426.6L1007.2 428.4zM952.7 336.3L958.4 335.4L961.0 339.1L955.3 340.0zM960.9 347.8L966.7 346.7L969.3 350.4L963.5 351.4zM985.5 382.0L991.6 380.7L994.2 384.3L988.2 385.7zM993.7 393.5L999.9 392.0L1002.5 395.6L996.4 397.1zM1010.2 416.3L1016.5 414.6L1019.1 418.2L1012.8 420.0zM957.1 329.3L962.8 328.5L965.5 332.1L959.8 332.9zM982.2 363.1L988.1 361.9L990.8 365.5L984.8 366.7zM990.5 374.4L996.5 373.1L999.2 376.6L993.2 378.0zM998.8 385.6L1004.9 384.2L1007.6 387.8L1001.5 389.2zM1007.2 396.9L1013.4 395.3L1016.1 398.9L1009.9 400.5zM1015.5 408.1L1021.8 406.5L1024.5 410.0L1018.2 411.7zM978.4 344.7L984.2 343.7L986.9 347.2L981.1 348.2zM986.9 355.8L992.7 354.6L995.5 358.1L989.6 359.3zM1029.3 411.2L1035.6 409.5L1038.3 413.0L1032.0 414.7z" fill="#1e6a10"/>
<path d="M723.8 493.5L730.1 491.8L731.5 497.0L725.1 498.8zM718.0 399.1L723.8 398.1L725.3 403.2L719.4 404.3zM726.8 397.5L732.6 396.4L734.2 401.5L728.3 402.6zM733.2 387.9L739.0 386.9L740.6 392.0L734.8 393.0zM749.4 409.9L755.3 408.8L756.9 413.7L750.9 415.0zM779.7 387.7L785.6 386.6L787.3 391.4L781.5 392.5zM796.1 432.8L802.2 431.4L803.9 436.1L797.8 437.6zM788.6 386.1L794.4 385.0L796.2 389.7L790.3 390.8zM813.7 452.9L819.9 451.3L821.7 456.0L815.4 457.7zM817.9 411.8L823.9 410.5L825.8 415.1L819.8 416.5zM824.0 402.7L829.9 401.5L831.9 406.0L825.9 407.3zM833.0 400.8L839.0 399.6L840.9 404.1L835.0 405.3zM836.1 407.9L842.1 406.6L844.0 411.1L838.0 412.4zM835.8 384.9L841.7 383.8L843.7 388.2L837.8 389.4zM851.4 419.9L857.5 418.5L859.5 422.9L853.4 424.4zM847.1 367.9L852.8 366.8L854.9 371.2L849.1 372.2zM882.8 442.9L889.1 441.3L891.2 445.6L884.9 447.3zM855.8 366.3L861.6 365.3L863.7 369.6L857.9 370.6zM865.8 386.5L871.7 385.3L873.8 389.6L867.9 390.8zM881.5 398.0L887.5 396.7L889.7 401.0L883.6 402.3zM880.2 376.4L886.1 375.2L888.3 379.4L882.4 380.6zM907.8 428.9L914.0 427.3L916.3 431.5L910.0 433.1zM894.4 366.5L900.2 365.4L902.6 369.5L896.7 370.6zM908.7 392.1L914.7 390.8L917.1 394.9L911.0 396.2zM926.8 340.5L932.5 339.6L935.0 343.3L929.3 344.3zM938.5 358.4L944.3 357.3L946.9 361.1L941.0 362.2zM946.3 370.3L952.3 369.1L954.8 372.9L948.8 374.1zM977.6 418.1L983.9 416.4L986.4 420.2L980.1 421.9zM996.6 413.1L1002.8 411.5L1005.5 415.1L999.2 416.8zM969.9 333.6L975.6 332.7L978.3 336.2L972.6 337.1zM1020.8 400.1L1027.0 398.5L1029.7 402.0L1023.5 403.6z" fill="#1a6ad8"/>
</g>
<path d="M690.0 368.0L689.0 350.0M697.2 396.2L696.2 376.2M708.0 438.5L707.0 415.5M718.8 480.8L717.8 454.8M726.0 509.0L725.0 481.0M702.2 366.2L701.2 348.2M715.7 416.2L714.7 394.6M727.0 457.9L726.0 433.3M739.8 505.1L738.8 477.1M714.4 364.4L713.4 346.4M722.2 391.7L721.2 371.7M734.0 432.8L733.0 409.8M745.7 473.9L744.7 447.9M753.5 501.2L752.5 473.2M726.5 362.6L725.5 344.6M741.2 411.1L740.2 389.5M753.5 451.5L752.5 426.9M767.3 497.3L766.3 469.3M738.7 360.7L737.7 342.7M747.2 387.3L746.2 367.3M759.9 427.1L758.9 404.1M772.6 466.9L771.6 440.9M781.1 493.5L780.1 465.5M750.9 358.9L749.9 340.9M766.7 406.0L765.7 384.4M779.9 445.2L778.9 420.6M794.9 489.6L793.9 461.6M763.1 357.1L762.1 339.1M772.2 382.8L771.2 362.8M785.9 421.4L784.9 398.4M799.5 460.0L798.5 434.0M808.7 485.7L807.7 457.7M775.2 355.3L774.2 337.3M792.2 400.8L791.2 379.2M806.4 438.8L805.4 414.2M822.4 481.8L821.4 453.8M787.4 353.5L786.4 335.5M797.2 378.4L796.2 358.4M811.8 415.7L810.8 392.7M826.4 453.0L825.4 427.0M836.2 477.9L835.2 449.9M799.6 351.7L798.6 333.7M817.7 395.7L816.7 374.1M832.8 432.4L831.8 407.8M850.0 474.0L849.0 446.0M811.8 349.9L810.8 331.9M822.2 373.9L821.2 353.9M837.8 410.0L836.8 387.0M853.4 446.1L852.4 420.1M863.8 470.1L862.8 442.1M824.0 348.1L823.0 330.1M843.2 390.6L842.2 369.0M859.3 426.1L858.3 401.5M877.5 466.2L876.5 438.2M836.1 346.2L835.1 328.2M847.2 369.5L846.2 349.5M863.7 404.3L862.7 381.3M880.3 439.1L879.3 413.1M891.3 462.4L890.3 434.4M848.3 344.4L847.3 326.4M868.7 385.5L867.7 363.9M885.8 419.7L884.8 395.1M905.1 458.5L904.1 430.5M860.5 342.6L859.5 324.6M872.2 365.0L871.2 345.0M889.7 398.6L888.7 375.6M907.2 432.2L906.2 406.2M918.9 454.6L917.9 426.6M872.7 340.8L871.7 322.8M894.2 380.4L893.2 358.8M912.2 413.3L911.2 388.7M932.6 450.7L931.6 422.7M884.8 339.0L883.8 321.0M897.1 360.5L896.1 340.5M915.6 392.9L914.6 369.9M934.1 425.3L933.1 399.3M946.4 446.8L945.4 418.8M897.0 337.2L896.0 319.2M919.8 375.2L918.8 353.6M938.7 407.0L937.7 382.4M960.2 442.9L959.2 414.9M909.2 335.4L908.2 317.4M922.1 356.1L921.1 336.1M941.6 387.2L940.6 364.2M961.0 418.3L960.0 392.3M974.0 439.0L973.0 411.0M921.4 333.5L920.4 315.5M945.3 370.1L944.3 348.5M965.2 400.6L964.2 376.0M987.7 435.2L986.7 407.2M967.5 381.5L966.5 358.5M987.9 411.4L986.9 385.4M1001.5 431.3L1000.5 403.3M991.6 394.2L990.6 369.6M1015.3 427.4L1014.3 399.4M1014.8 404.4L1013.8 378.4M1029.0 423.5L1028.0 395.5" stroke="#0e3a06" stroke-width="4.2"/>
<path d="M690.0 368.0L689.0 350.0M697.2 396.2L696.2 376.2M708.0 438.5L707.0 415.5M718.8 480.8L717.8 454.8M726.0 509.0L725.0 481.0M702.2 366.2L701.2 348.2M715.7 416.2L714.7 394.6M727.0 457.9L726.0 433.3M739.8 505.1L738.8 477.1M714.4 364.4L713.4 346.4M722.2 391.7L721.2 371.7M734.0 432.8L733.0 409.8M745.7 473.9L744.7 447.9M753.5 501.2L752.5 473.2M726.5 362.6L725.5 344.6M741.2 411.1L740.2 389.5M753.5 451.5L752.5 426.9M767.3 497.3L766.3 469.3M738.7 360.7L737.7 342.7M747.2 387.3L746.2 367.3M759.9 427.1L758.9 404.1M772.6 466.9L771.6 440.9M781.1 493.5L780.1 465.5M750.9 358.9L749.9 340.9M766.7 406.0L765.7 384.4M779.9 445.2L778.9 420.6M794.9 489.6L793.9 461.6M763.1 357.1L762.1 339.1M772.2 382.8L771.2 362.8M785.9 421.4L784.9 398.4M799.5 460.0L798.5 434.0M808.7 485.7L807.7 457.7M775.2 355.3L774.2 337.3M792.2 400.8L791.2 379.2M806.4 438.8L805.4 414.2M822.4 481.8L821.4 453.8M787.4 353.5L786.4 335.5M797.2 378.4L796.2 358.4M811.8 415.7L810.8 392.7M826.4 453.0L825.4 427.0M836.2 477.9L835.2 449.9M799.6 351.7L798.6 333.7M817.7 395.7L816.7 374.1M832.8 432.4L831.8 407.8M850.0 474.0L849.0 446.0M811.8 349.9L810.8 331.9M822.2 373.9L821.2 353.9M837.8 410.0L836.8 387.0M853.4 446.1L852.4 420.1M863.8 470.1L862.8 442.1M824.0 348.1L823.0 330.1M843.2 390.6L842.2 369.0M859.3 426.1L858.3 401.5M877.5 466.2L876.5 438.2M836.1 346.2L835.1 328.2M847.2 369.5L846.2 349.5M863.7 404.3L862.7 381.3M880.3 439.1L879.3 413.1M891.3 462.4L890.3 434.4M848.3 344.4L847.3 326.4M868.7 385.5L867.7 363.9M885.8 419.7L884.8 395.1M905.1 458.5L904.1 430.5M860.5 342.6L859.5 324.6M872.2 365.0L871.2 345.0M889.7 398.6L888.7 375.6M907.2 432.2L906.2 406.2M918.9 454.6L917.9 426.6M872.7 340.8L871.7 322.8M894.2 380.4L893.2 358.8M912.2 413.3L911.2 388.7M932.6 450.7L931.6 422.7M884.8 339.0L883.8 321.0M897.1 360.5L896.1 340.5M915.6 392.9L914.6 369.9M934.1 425.3L933.1 399.3M946.4 446.8L945.4 418.8M897.0 337.2L896.0 319.2M919.8 375.2L918.8 353.6M938.7 407.0L937.7 382.4M960.2 442.9L959.2 414.9M909.2 335.4L908.2 317.4M922.1 356.1L921.1 336.1M941.6 387.2L940.6 364.2M961.0 418.3L960.0 392.3M974.0 439.0L973.0 411.0M921.4 333.5L920.4 315.5M945.3 370.1L944.3 348.5M965.2 400.6L964.2 376.0M987.7 435.2L986.7 407.2M967.5 381.5L966.5 358.5M987.9 411.4L986.9 385.4M1001.5 431.3L1000.5 403.3M991.6 394.2L990.6 369.6M1015.3 427.4L1014.3 399.4M1014.8 404.4L1013.8 378.4M1029.0 423.5L1028.0 395.5" stroke="#58f020" stroke-width="2.8"/>
<path d="M689.0 350.0L931.5 313.9M702.0 397.2L997.3 337.9M712.8 436.5L1019.2 362.8M725.0 481.0L1044.0 391.0" stroke="#e86a1c" stroke-width="2.2"/>
<path d="M694.3 384.9L980.8 337.2M708.0 438.5L1008.5 372.5M720.6 487.8L1034.0 405.0" stroke="#f0b090" stroke-width="2.6" opacity="0.9"/>
<path d="M931.5 313.9L992 344L1002 365L1029 368L1051 396" stroke="#e86a1c" stroke-width="2" fill="none"/>
<path d="M1051 396L1041 442" stroke="#f0c020" stroke-width="3.5"/>

</svg><div class="a" style="left:4px;top:3px;color:#ff2010;font-size:9.4px">Eleman kesitleri</div>
<div class="a" style="left:3px;top:32px;width:20px;line-height:18.4px">
<div style="background:#ff0000;height:18.4px"></div><div style="background:#267c00;height:18.4px"></div><div style="background:#ffc800;height:18.4px"></div><div style="background:#4cff00;height:18.4px"></div><div style="background:#0096ff;height:18.4px"></div><div style="background:#a000ff;height:18.4px"></div><div style="background:#0030e0;height:18.4px"></div><div style="background:#ffaa82;height:18.4px"></div><div style="background:#4a6a88;height:18.4px"></div><div style="background:#960000;height:18.4px"></div><div style="background:#ff6400;height:18.4px"></div><div style="background:#ff0080;height:18.4px"></div><div style="background:#ff0000;height:18.4px"></div><div style="background:#267c00;height:18.4px"></div><div style="background:#ffc800;height:18.4px"></div><div style="background:#4cff00;height:18.4px"></div>
</div>
<div class="a" style="left:24px;top:32px;color:#c8c8c8;font-size:10px;line-height:18.4px;white-space:nowrap">45x90<br>35x210<br>35x220<br>90x90<br>45x140<br>Poligon 1<br>40x90<br>90x60(T)<br>40x60(T)<br>90x60<br>30x70<br>45x60<br>45x60(T)<br>90x80(T)<br>90x80<br>40x40(T)</div>
<svg class="a" style="left:517px;top:0" width="43" height="13" viewBox="0 0 43 13"><rect x="0.5" y="0.5" width="13.5" height="12" fill="#d6d6d6" stroke="#3a3a3a"/><rect x="14.5" y="0.5" width="13.5" height="12" fill="#d6d6d6" stroke="#3a3a3a"/><rect x="28.5" y="0.5" width="14" height="12" fill="#d6d6d6" stroke="#3a3a3a"/><path d="M2.5 2L7 6.5L11.5 2M7 6.5V11.5" stroke="#404040" stroke-width="1.3" fill="none"/><path d="M17.5 11.5V2L25.5 11.5V2" stroke="#404040" stroke-width="1.3" fill="none"/><path d="M31 11.5L35.5 2L40 11.5" stroke="#404040" stroke-width="1.3" fill="none"/></svg>
</div>
<div class="a" style="left:196px;top:451px;width:464px;height:219px;background:#f0f0f0;border:1px solid #9a9a9a;border-radius:7px 7px 0 0;font-size:8.6px;letter-spacing:-0.08px;color:#1a1a1a;overflow:hidden">
<div class="a" style="left:0;top:0;width:462px;height:26px;background:#f3f3f3"></div>
<div class="a" style="left:6px;top:8px;font-size:9.3px;color:#1c1c1c">Benzerleri Seç</div>
<svg class="a" style="left:445px;top:6px" width="12" height="12" viewBox="0 0 12 12"><path d="M1 1L11 11M11 1L1 11" stroke="#222" stroke-width="1.1"/></svg>
<svg class="a" style="left:8.5px;top:34.2px" width="11" height="11" viewBox="0 0 11 11"><rect x="0" y="0" width="11" height="11" rx="2" fill="#1c5fc4"/><path d="M2.6 5.6L4.6 7.6L8.5 3.4" stroke="#fff" stroke-width="1.1" fill="none"/></svg>
<div class="a" style="left:21.5px;top:33.4px;line-height:12px;white-space:nowrap;-webkit-text-stroke:0.15px #1a1a1a">Tip</div>
<svg class="a" style="left:8.5px;top:52.5px" width="11" height="11" viewBox="0 0 11 11"><rect x="0.5" y="0.5" width="10" height="10" rx="2" fill="#f6f6f6" stroke="#6a6a6a"/></svg>
<div class="a" style="left:21.5px;top:51.7px;line-height:12px;white-space:nowrap;-webkit-text-stroke:0.15px #1a1a1a">Katman</div>
<svg class="a" style="left:8.5px;top:71.2px" width="11" height="11" viewBox="0 0 11 11"><rect x="0.5" y="0.5" width="10" height="10" rx="2" fill="#f6f6f6" stroke="#6a6a6a"/></svg>
<div class="a" style="left:21.5px;top:70.4px;line-height:12px;white-space:nowrap;-webkit-text-stroke:0.15px #1a1a1a">Statik malzeme</div>
<svg class="a" style="left:8.5px;top:89.5px" width="11" height="11" viewBox="0 0 11 11"><rect x="0" y="0" width="11" height="11" rx="2" fill="#1c5fc4"/><path d="M2.6 5.6L4.6 7.6L8.5 3.4" stroke="#fff" stroke-width="1.1" fill="none"/></svg>
<div class="a" style="left:21.5px;top:88.7px;line-height:12px;white-space:nowrap;-webkit-text-stroke:0.15px #1a1a1a">Eleman kesiti :</div>
<svg class="a" style="left:8.5px;top:106.9px" width="11" height="11" viewBox="0 0 11 11"><rect x="0.5" y="0.5" width="10" height="10" rx="2" fill="#f6f6f6" stroke="#6a6a6a"/></svg>
<div class="a" style="left:21.5px;top:106.1px;line-height:12px;white-space:nowrap;-webkit-text-stroke:0.15px #1a1a1a">Kot</div>
<svg class="a" style="left:8.5px;top:123.2px" width="11" height="11" viewBox="0 0 11 11"><rect x="0.5" y="0.5" width="10" height="10" rx="2" fill="#f6f6f6" stroke="#6a6a6a"/></svg>
<div class="a" style="left:21.5px;top:122.4px;line-height:12px;white-space:nowrap;-webkit-text-stroke:0.15px #1a1a1a">Plan rengi :</div>
<svg class="a" style="left:8.5px;top:141.5px" width="11" height="11" viewBox="0 0 11 11"><rect x="0.5" y="0.5" width="10" height="10" rx="2" fill="#f6f6f6" stroke="#6a6a6a"/></svg>
<div class="a" style="left:21.5px;top:140.7px;line-height:12px;white-space:nowrap;-webkit-text-stroke:0.15px #1a1a1a">3B Materyal :</div>
<svg class="a" style="left:8.5px;top:160.0px" width="11" height="11" viewBox="0 0 11 11"><rect x="0.5" y="0.5" width="10" height="10" rx="2" fill="#f6f6f6" stroke="#6a6a6a"/></svg>
<div class="a" style="left:21.5px;top:159.2px;line-height:12px;white-space:nowrap;-webkit-text-stroke:0.15px #1a1a1a">Aynı konum (X-aksı)</div>
<svg class="a" style="left:8.5px;top:178.1px" width="11" height="11" viewBox="0 0 11 11"><rect x="0.5" y="0.5" width="10" height="10" rx="2" fill="#f6f6f6" stroke="#6a6a6a"/></svg>
<div class="a" style="left:21.5px;top:177.3px;line-height:12px;white-space:nowrap;-webkit-text-stroke:0.15px #1a1a1a">Aynı konum (Y-aksı)</div>
<svg class="a" style="left:8.5px;top:196.5px" width="11" height="11" viewBox="0 0 11 11"><rect x="0.5" y="0.5" width="10" height="10" rx="2" fill="#f6f6f6" stroke="#6a6a6a"/></svg>
<div class="a" style="left:21.5px;top:195.7px;line-height:12px;white-space:nowrap;-webkit-text-stroke:0.15px #1a1a1a">Aynı konum (Z-aksı)</div>
<svg class="a" style="left:175px;top:90px" width="11" height="11" viewBox="0 0 11 11"><rect x="0" y="0" width="11" height="11" rx="2" fill="#1c5fc4"/><path d="M2.6 5.6L4.6 7.6L8.5 3.4" stroke="#fff" stroke-width="1.1" fill="none"/></svg>
<svg class="a" style="left:175px;top:123.5px" width="11" height="11" viewBox="0 0 11 11"><rect x="0.5" y="0.5" width="10" height="10" rx="2" fill="#f6f6f6" stroke="#6a6a6a"/></svg>
<svg class="a" style="left:175px;top:142px" width="11" height="11" viewBox="0 0 11 11"><rect x="0.5" y="0.5" width="10" height="10" rx="2" fill="#f6f6f6" stroke="#6a6a6a"/></svg>
<div class="a" style="left:187px;top:86px;width:202px;height:19px;background:#fff;border:1px solid #a8a8a8;border-radius:2px"></div>
<div class="a" style="left:192px;top:89px;line-height:12px">40x45</div>
<svg class="a" style="left:376px;top:93px" width="10" height="6" viewBox="0 0 10 6"><path d="M1 1L5 5L9 1" stroke="#444" stroke-width="1" fill="none"/></svg>
<div class="a" style="left:187px;top:120.5px;width:202px;height:18px;background:#f4f4f4;border:1px solid #d0d0d0;border-radius:1px"></div>
<div class="a" style="left:189px;top:122.5px;width:198px;height:14px;background:#e6e6e6;border:1px solid #7a7a7a;border-right-width:2px;border-bottom-width:2px"></div>
<div class="a" style="left:214px;top:123px;width:1px;height:12px;background:#7a7a7a"></div>
<div class="a" style="left:193px;top:124px;line-height:11px;font-size:9.5px;color:#555">1</div>
<div class="a" style="left:187px;top:139.5px;width:202px;height:18px;background:#ededed;border:1px solid #d6d6d6;border-radius:2px"></div>
<div class="a" style="left:371px;top:140.5px;width:17px;height:16px;background:#f6f6f6"></div>
<svg class="a" style="left:376px;top:146px" width="10" height="6" viewBox="0 0 10 6"><path d="M1 1L5 5L9 1" stroke="#b0b0b0" stroke-width="1" fill="none"/></svg>
<div class="a" style="left:395px;top:34px;width:59px;height:18px;background:#fdfdfd;border:1px solid #5a8fd8;box-shadow:inset 0 0 0 0.5px #8fb4e8;border-radius:4px;text-align:center;line-height:16px">Tamam</div>
<div class="a" style="left:395px;top:55px;width:59px;height:17px;background:#fdfdfd;border:1px solid #d2d2d2;border-radius:4px;text-align:center;line-height:15px">İptal</div>
</div>
<div class="a" id="cmd">*İptal*<br>Komut :<br>*İptal*<br>Komut :</div>
<div class="a" id="status"></div>
<div class="a" style="left:27px;top:782px;font-size:9px;color:#3a3a48;line-height:12px">BOŞ</div>
<div class="a" style="left:227px;top:781px;width:1px;height:14px;background:#9aa0a8;border-right:1px solid #f4f4f4"></div>
<div class="a" style="left:231px;top:782px;font-size:9px;color:#3a3a48;line-height:12px">Hazır</div>
<div class="a" style="left:945px;top:781px;width:1px;height:14px;background:#9aa0a8;border-right:1px solid #f4f4f4"></div>
<div class="a" style="left:949px;top:782px;font-size:9px;color:#3a3a48;line-height:12px">tf / m</div>
<div class="a" style="left:1006px;top:781px;width:1px;height:14px;background:#9aa0a8;border-right:1px solid #f4f4f4"></div>
<div class="a" style="left:1012px;top:782px;font-size:9px;color:#3a3a48;line-height:12px">1 : 100</div>
<div class="a" style="left:1066px;top:781px;width:1px;height:14px;background:#9aa0a8;border-right:1px solid #f4f4f4"></div>
<div class="a" style="left:1073px;top:782px;font-size:9px;color:#3a3a48;line-height:12px">% 6</div>
<div class="a" style="left:1128px;top:781px;width:1px;height:14px;background:#9aa0a8;border-right:1px solid #f4f4f4"></div>
<svg class="a" style="left:1131px;top:785px" width="9" height="9" viewBox="0 0 9 9"><path d="M7 1h1v1h-1zM5 3h1v1h-1zM7 3h1v1h-1zM3 5h1v1h-1zM5 5h1v1h-1zM7 5h1v1h-1zM1 7h1v1h-1zM3 7h1v1h-1zM5 7h1v1h-1zM7 7h1v1h-1z" fill="#8890a0"/></svg>
<div class="a" id="leftborder"></div>
<div class="a" id="botborder"></div>
<div class="a" style="left:1204px;top:0;width:1px;height:796px;background:#b4b4b4"></div>
</body></html>
